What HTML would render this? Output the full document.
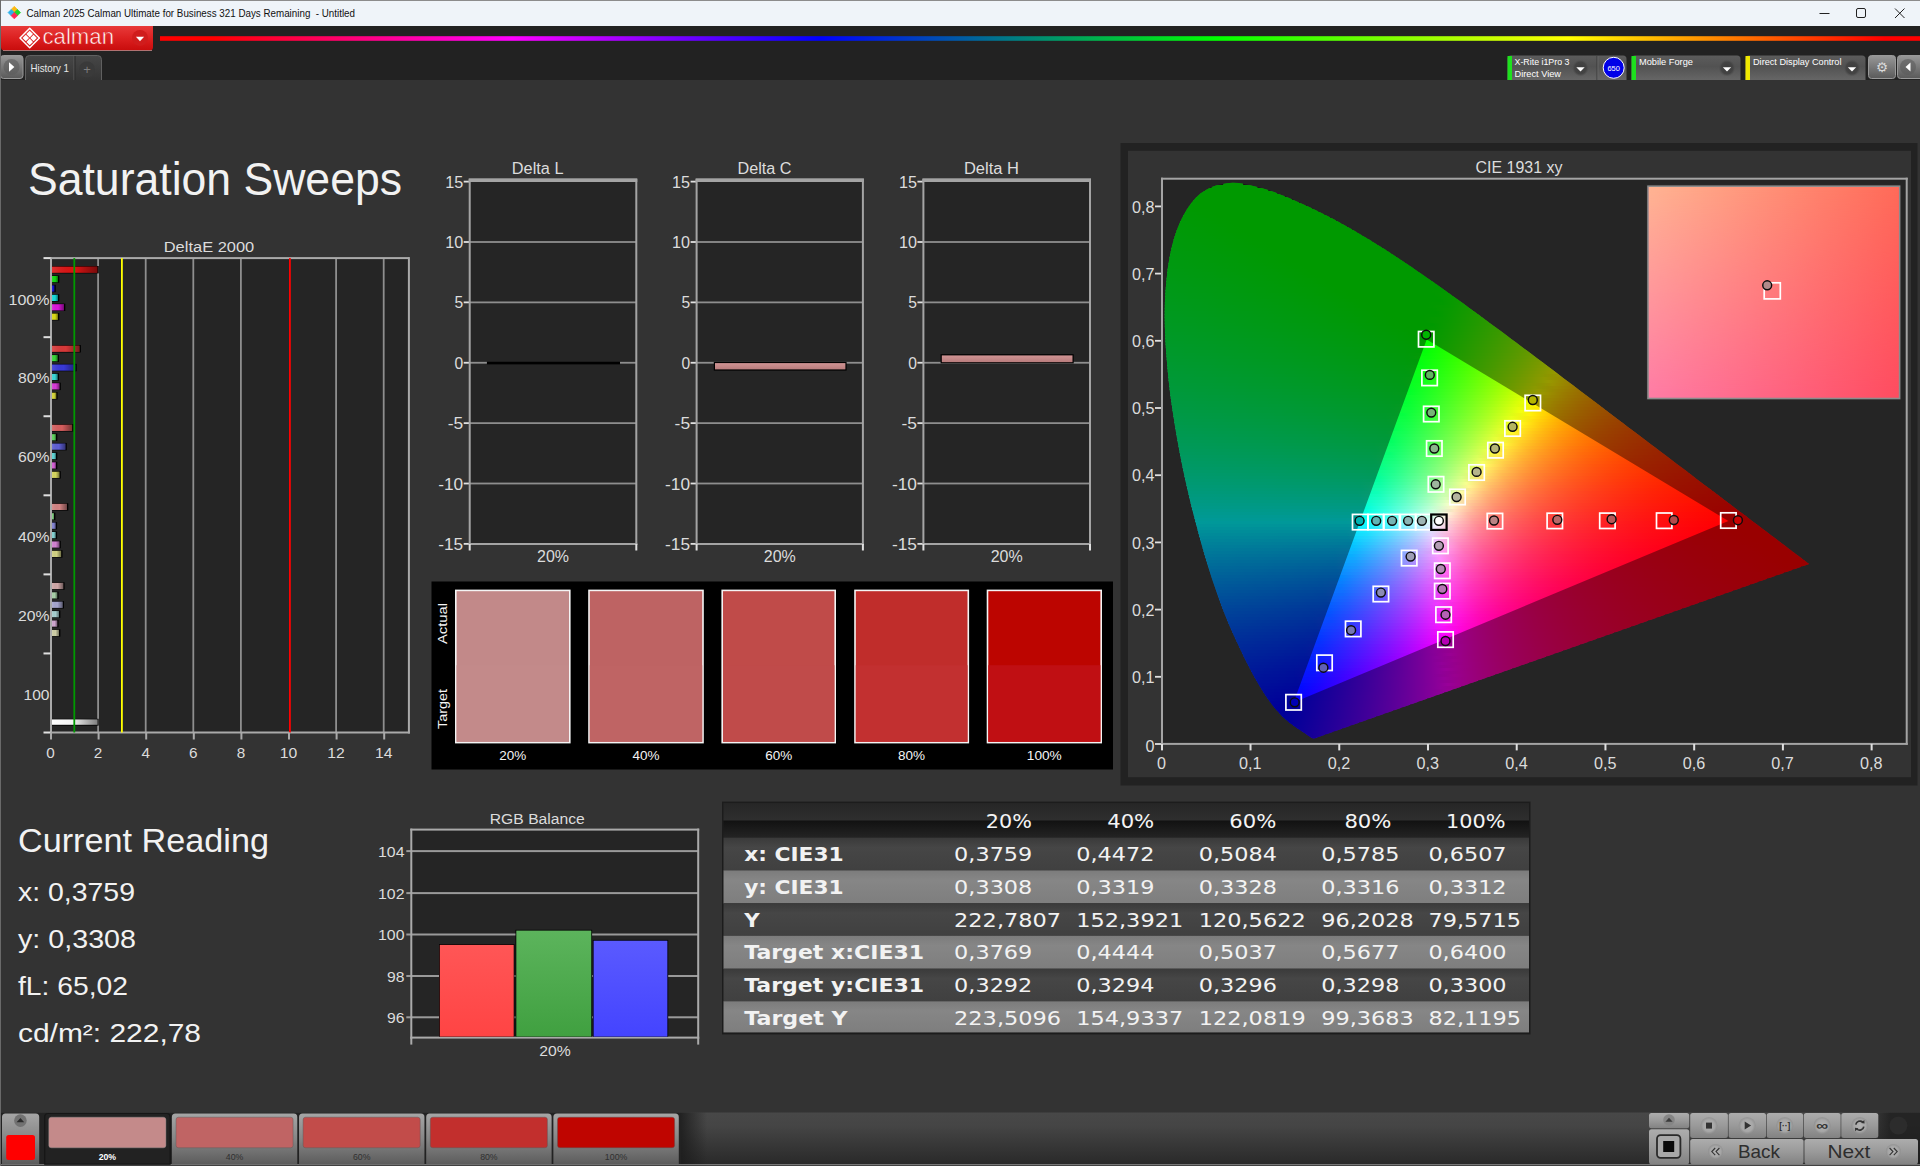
<!DOCTYPE html>
<html><head><meta charset="utf-8"><title>Calman</title>
<style>
html,body{margin:0;padding:0;background:#333;width:1920px;height:1166px;overflow:hidden}
svg{display:block;font-family:"Liberation Sans", "DejaVu Sans", sans-serif}
</style></head><body>
<svg width="1920" height="1166" viewBox="0 0 1920 1166">
<defs>
<linearGradient id="gRed" x1="0" y1="0" x2="0" y2="1"><stop offset="0" stop-color="#e83a3a"/><stop offset="0.5" stop-color="#dc2020"/><stop offset="1" stop-color="#c80c0c"/></linearGradient>
<linearGradient id="gRain" x1="0" y1="0" x2="1" y2="0"><stop offset="0" stop-color="#ff0000"/><stop offset="0.03" stop-color="#ff0000"/><stop offset="0.2" stop-color="#ff00ff"/><stop offset="0.375" stop-color="#0000ff"/><stop offset="0.6" stop-color="#00ff00"/><stop offset="0.8" stop-color="#ffff00"/><stop offset="0.98" stop-color="#ff0000"/><stop offset="1" stop-color="#ff0000"/></linearGradient>
<linearGradient id="gTab" x1="0" y1="0" x2="0" y2="1"><stop offset="0" stop-color="#474747"/><stop offset="1" stop-color="#343434"/></linearGradient>
<linearGradient id="gPanel" x1="0" y1="0" x2="0" y2="1"><stop offset="0" stop-color="#5c5c5c"/><stop offset="0.45" stop-color="#525252"/><stop offset="1" stop-color="#666"/></linearGradient>
<linearGradient id="gBtn" x1="0" y1="0" x2="0" y2="1"><stop offset="0" stop-color="#989898"/><stop offset="1" stop-color="#5a5a5a"/></linearGradient>
<radialGradient id="gDrop"><stop offset="0" stop-color="#3c3c3c"/><stop offset="0.7" stop-color="#444"/><stop offset="1" stop-color="#505050" stop-opacity="0"/></radialGradient>
<linearGradient id="gWhiteBar" x1="0" y1="0" x2="1" y2="0"><stop offset="0" stop-color="#fff"/><stop offset="0.45" stop-color="#f4f4f4"/><stop offset="1" stop-color="#808080"/></linearGradient><linearGradient id="gBarSh" x1="0" y1="0" x2="1" y2="0"><stop offset="0" stop-color="#fff" stop-opacity="0.12"/><stop offset="0.5" stop-color="#000" stop-opacity="0"/><stop offset="1" stop-color="#000" stop-opacity="0.45"/></linearGradient><linearGradient id="gR" x1="0" y1="0" x2="0" y2="1"><stop offset="0" stop-color="#ff5656"/><stop offset="1" stop-color="#ff4444"/></linearGradient><linearGradient id="gG" x1="0" y1="0" x2="0" y2="1"><stop offset="0" stop-color="#5cb45c"/><stop offset="1" stop-color="#40a040"/></linearGradient><linearGradient id="gB" x1="0" y1="0" x2="0" y2="1"><stop offset="0" stop-color="#5a5aff"/><stop offset="1" stop-color="#4444ff"/></linearGradient><linearGradient id="gPink" x1="0" y1="0" x2="0" y2="1"><stop offset="0" stop-color="#d09494"/><stop offset="1" stop-color="#b87c7c"/></linearGradient><clipPath id="locClip"><polygon points="1315.0,738.3 1314.7,738.3 1314.5,738.3 1314.1,738.4 1313.8,738.4 1313.4,738.4 1313.2,738.4 1313.0,738.4 1312.9,738.4 1312.8,738.4 1312.8,738.3 1312.7,738.3 1312.6,738.2 1312.4,738.2 1312.3,738.1 1312.1,738.0 1312.0,738.0 1311.8,737.9 1311.6,737.8 1311.4,737.7 1311.2,737.6 1311.0,737.4 1310.8,737.3 1310.6,737.2 1310.4,737.0 1310.1,736.9 1309.8,736.7 1309.5,736.5 1309.2,736.3 1308.9,736.1 1308.6,735.9 1308.3,735.7 1307.9,735.4 1307.6,735.2 1307.2,734.9 1306.8,734.6 1306.4,734.3 1306.0,734.1 1305.5,733.8 1305.1,733.4 1304.6,733.1 1304.0,732.8 1303.5,732.4 1302.9,732.0 1302.3,731.6 1301.6,731.2 1301.0,730.7 1300.3,730.3 1299.5,729.8 1298.8,729.3 1298.0,728.8 1297.2,728.2 1296.4,727.7 1295.5,727.1 1294.6,726.4 1293.6,725.8 1292.7,725.1 1291.7,724.3 1290.6,723.5 1289.5,722.7 1288.4,721.8 1287.3,720.8 1286.1,719.8 1284.9,718.8 1283.7,717.7 1282.3,716.4 1280.9,714.9 1279.4,713.3 1277.9,711.6 1276.2,709.7 1274.5,707.7 1272.7,705.4 1270.9,702.9 1268.9,700.3 1266.9,697.4 1264.9,694.4 1262.7,691.1 1260.5,687.5 1258.1,683.5 1255.7,679.2 1253.1,674.7 1250.5,669.8 1247.8,664.5 1244.9,658.9 1242.0,652.8 1238.9,646.2 1235.6,639.3 1232.3,632.0 1228.9,624.3 1225.5,616.0 1222.1,607.2 1218.7,597.9 1215.2,588.1 1211.7,577.7 1208.3,566.9 1204.9,555.7 1201.5,544.1 1198.2,531.9 1194.8,519.1 1191.4,506.0 1188.2,492.5 1185.1,478.9 1182.2,465.2 1179.5,451.4 1176.9,437.3 1174.5,423.1 1172.3,408.8 1170.3,394.8 1168.7,381.0 1167.4,367.5 1166.3,354.1 1165.4,340.8 1164.9,327.8 1164.7,315.2 1164.9,303.1 1165.5,291.3 1166.5,279.9 1167.7,268.8 1169.4,258.3 1171.4,248.4 1173.8,239.2 1176.6,230.7 1179.8,222.7 1183.4,215.4 1187.3,208.8 1191.4,202.9 1195.8,197.8 1200.4,193.6 1205.4,190.2 1210.6,187.6 1216.0,185.6 1221.5,184.2 1227.0,183.2 1232.6,182.8 1238.4,183.1 1244.3,184.0 1250.2,185.2 1256.2,186.7 1262.2,188.3 1268.1,190.0 1274.1,192.1 1280.1,194.4 1286.1,196.8 1292.0,199.3 1297.9,201.9 1303.6,204.4 1309.3,207.0 1314.9,209.7 1320.5,212.5 1326.0,215.3 1331.5,218.1 1337.0,221.0 1342.4,224.0 1347.8,227.0 1353.2,230.1 1358.5,233.2 1363.9,236.4 1369.2,239.6 1374.6,242.9 1379.9,246.3 1385.2,249.6 1390.5,253.1 1395.8,256.5 1401.1,260.0 1406.3,263.5 1411.6,267.1 1416.8,270.7 1422.1,274.3 1427.3,277.9 1432.6,281.6 1437.8,285.3 1443.1,289.0 1448.3,292.8 1453.5,296.5 1458.8,300.3 1464.1,304.1 1469.3,307.9 1474.6,311.8 1479.8,315.6 1485.1,319.5 1490.4,323.4 1495.6,327.2 1500.8,331.1 1506.1,335.0 1511.3,338.9 1516.5,342.8 1521.7,346.7 1526.9,350.6 1532.2,354.5 1537.4,358.4 1542.6,362.3 1547.8,366.2 1552.9,370.1 1558.1,374.0 1563.2,377.9 1568.3,381.7 1573.4,385.6 1578.5,389.4 1583.5,393.2 1588.5,397.0 1593.5,400.8 1598.5,404.6 1603.4,408.3 1608.3,412.0 1613.2,415.7 1618.1,419.4 1622.9,423.0 1627.6,426.7 1632.4,430.2 1637.1,433.8 1641.7,437.3 1646.3,440.8 1650.8,444.2 1655.3,447.6 1659.8,451.0 1664.2,454.3 1668.5,457.5 1672.7,460.7 1676.9,463.9 1681.0,467.1 1685.1,470.1 1689.0,473.1 1692.9,476.1 1696.6,478.9 1700.3,481.7 1703.9,484.4 1707.4,487.0 1710.8,489.6 1714.1,492.1 1717.4,494.6 1720.7,497.1 1723.8,499.5 1726.9,501.8 1729.9,504.1 1732.8,506.3 1735.6,508.4 1738.3,510.4 1741.0,512.4 1743.5,514.3 1746.0,516.1 1748.3,517.9 1750.6,519.7 1752.8,521.4 1755.0,523.0 1757.0,524.5 1759.0,526.1 1760.9,527.5 1762.8,528.9 1764.6,530.3 1766.3,531.6 1767.9,532.8 1769.5,534.0 1771.0,535.2 1772.5,536.3 1773.9,537.3 1775.2,538.3 1776.5,539.3 1777.8,540.3 1779.0,541.2 1780.2,542.1 1781.3,542.9 1782.4,543.7 1783.4,544.5 1784.5,545.3 1785.4,546.1 1786.4,546.8 1787.3,547.5 1788.3,548.2 1789.1,548.9 1790.0,549.5 1790.8,550.2 1791.6,550.8 1792.4,551.4 1793.1,551.9 1793.9,552.5 1794.6,553.0 1795.2,553.5 1795.9,554.0 1796.5,554.5 1797.1,554.9 1797.7,555.3 1798.2,555.7 1798.8,556.1 1799.3,556.5 1799.7,556.8 1800.2,557.2 1800.6,557.5 1801.0,557.8 1801.4,558.1 1801.8,558.4 1802.1,558.7 1802.5,558.9 1802.8,559.2 1803.1,559.4 1803.4,559.7 1803.7,559.9 1804.0,560.1 1804.2,560.3 1804.5,560.5 1804.7,560.6 1804.9,560.8 1805.1,561.0 1805.3,561.1 1805.5,561.2 1805.6,561.3 1805.7,561.4 1805.9,561.5 1806.0,561.7 1806.2,561.8 1806.3,561.9 1806.4,562.0 1806.6,562.1 1806.7,562.1 1806.8,562.2 1806.9,562.3 1807.0,562.4 1807.1,562.5 1807.2,562.5 1807.3,562.6 1807.4,562.7 1807.5,562.8 1807.6,562.9 1807.7,562.9 1807.8,563.0 1807.9,563.1 1808.0,563.2 1808.1,563.2 1808.2,563.3 1808.3,563.4 1808.4,563.4 1808.4,563.5 1808.5,563.5 1808.6,563.6 1808.6,563.6 1808.7,563.7 1808.8,563.7 1808.8,563.8 1808.8,563.8 1808.9,563.8 1808.9,563.8 1808.9,563.9 1809.0,563.9 1809.0,563.9 1809.0,563.9 1809.0,563.9 1809.0,563.9 1809.0,563.9 1809.1,563.9 1809.1,564.0"/></clipPath>
<linearGradient id="c0" gradientUnits="userSpaceOnUse" x1="1223.1" x2="1243.2" y1="0" y2="0"><stop offset="0.000" stop-color="#00ff00"/><stop offset="1.000" stop-color="#00ff00"/></linearGradient>
<linearGradient id="c1" gradientUnits="userSpaceOnUse" x1="1211.5" x2="1257.4" y1="0" y2="0"><stop offset="0.000" stop-color="#00ff00"/><stop offset="1.000" stop-color="#00ff00"/></linearGradient>
<linearGradient id="c2" gradientUnits="userSpaceOnUse" x1="1204.7" x2="1268.4" y1="0" y2="0"><stop offset="0.000" stop-color="#00ff00"/><stop offset="1.000" stop-color="#00ff00"/></linearGradient>
<linearGradient id="c3" gradientUnits="userSpaceOnUse" x1="1200.0" x2="1277.2" y1="0" y2="0"><stop offset="0.000" stop-color="#00ff00"/><stop offset="1.000" stop-color="#00ff00"/></linearGradient>
<linearGradient id="c4" gradientUnits="userSpaceOnUse" x1="1196.3" x2="1284.9" y1="0" y2="0"><stop offset="0.000" stop-color="#00ff00"/><stop offset="1.000" stop-color="#00ff00"/></linearGradient>
<linearGradient id="c5" gradientUnits="userSpaceOnUse" x1="1193.2" x2="1292.0" y1="0" y2="0"><stop offset="0.000" stop-color="#00ff00"/><stop offset="1.000" stop-color="#00ff00"/></linearGradient>
<linearGradient id="c6" gradientUnits="userSpaceOnUse" x1="1190.6" x2="1299.0" y1="0" y2="0"><stop offset="0.000" stop-color="#00ff01"/><stop offset="0.200" stop-color="#00ff00"/><stop offset="1.000" stop-color="#00ff00"/></linearGradient>
<linearGradient id="c7" gradientUnits="userSpaceOnUse" x1="1188.3" x2="1305.8" y1="0" y2="0"><stop offset="0.000" stop-color="#00ff03"/><stop offset="0.167" stop-color="#00ff00"/><stop offset="1.000" stop-color="#00ff00"/></linearGradient>
<linearGradient id="c8" gradientUnits="userSpaceOnUse" x1="1186.2" x2="1312.3" y1="0" y2="0"><stop offset="0.000" stop-color="#00ff04"/><stop offset="0.167" stop-color="#00ff00"/><stop offset="1.000" stop-color="#00ff00"/></linearGradient>
<linearGradient id="c9" gradientUnits="userSpaceOnUse" x1="1184.2" x2="1318.5" y1="0" y2="0"><stop offset="0.000" stop-color="#00ff05"/><stop offset="0.143" stop-color="#00ff02"/><stop offset="0.286" stop-color="#00ff00"/><stop offset="1.000" stop-color="#00ff00"/></linearGradient>
<linearGradient id="c10" gradientUnits="userSpaceOnUse" x1="1182.5" x2="1324.5" y1="0" y2="0"><stop offset="0.000" stop-color="#00ff07"/><stop offset="0.143" stop-color="#00ff03"/><stop offset="0.286" stop-color="#00ff00"/><stop offset="1.000" stop-color="#00ff00"/></linearGradient>
<linearGradient id="c11" gradientUnits="userSpaceOnUse" x1="1180.8" x2="1330.4" y1="0" y2="0"><stop offset="0.000" stop-color="#00ff08"/><stop offset="0.143" stop-color="#00ff04"/><stop offset="0.286" stop-color="#00ff00"/><stop offset="1.000" stop-color="#00ff00"/></linearGradient>
<linearGradient id="c12" gradientUnits="userSpaceOnUse" x1="1179.4" x2="1336.1" y1="0" y2="0"><stop offset="0.000" stop-color="#00ff09"/><stop offset="0.125" stop-color="#00ff06"/><stop offset="0.250" stop-color="#00ff02"/><stop offset="0.375" stop-color="#00ff00"/><stop offset="1.000" stop-color="#00ff00"/></linearGradient>
<linearGradient id="c13" gradientUnits="userSpaceOnUse" x1="1177.9" x2="1341.7" y1="0" y2="0"><stop offset="0.000" stop-color="#00ff0b"/><stop offset="0.125" stop-color="#00ff07"/><stop offset="0.250" stop-color="#00ff03"/><stop offset="0.375" stop-color="#00ff00"/><stop offset="1.000" stop-color="#00ff00"/></linearGradient>
<linearGradient id="c14" gradientUnits="userSpaceOnUse" x1="1176.6" x2="1347.1" y1="0" y2="0"><stop offset="0.000" stop-color="#00ff0c"/><stop offset="0.125" stop-color="#00ff08"/><stop offset="0.250" stop-color="#00ff04"/><stop offset="0.375" stop-color="#00ff00"/><stop offset="1.000" stop-color="#00ff00"/></linearGradient>
<linearGradient id="c15" gradientUnits="userSpaceOnUse" x1="1175.4" x2="1352.4" y1="0" y2="0"><stop offset="0.000" stop-color="#00ff0d"/><stop offset="0.111" stop-color="#00ff0a"/><stop offset="0.222" stop-color="#00ff06"/><stop offset="0.333" stop-color="#00ff02"/><stop offset="0.444" stop-color="#00ff00"/><stop offset="1.000" stop-color="#00ff00"/></linearGradient>
<linearGradient id="c16" gradientUnits="userSpaceOnUse" x1="1174.3" x2="1357.5" y1="0" y2="0"><stop offset="0.000" stop-color="#00ff0f"/><stop offset="0.111" stop-color="#00ff0b"/><stop offset="0.222" stop-color="#00ff07"/><stop offset="0.333" stop-color="#00ff02"/><stop offset="0.444" stop-color="#00ff00"/><stop offset="1.000" stop-color="#00ff00"/></linearGradient>
<linearGradient id="c17" gradientUnits="userSpaceOnUse" x1="1173.3" x2="1362.6" y1="0" y2="0"><stop offset="0.000" stop-color="#00ff10"/><stop offset="0.111" stop-color="#00ff0c"/><stop offset="0.222" stop-color="#00ff08"/><stop offset="0.333" stop-color="#00ff03"/><stop offset="0.444" stop-color="#00ff00"/><stop offset="1.000" stop-color="#00ff00"/></linearGradient>
<linearGradient id="c18" gradientUnits="userSpaceOnUse" x1="1172.3" x2="1367.7" y1="0" y2="0"><stop offset="0.000" stop-color="#00ff11"/><stop offset="0.111" stop-color="#00ff0d"/><stop offset="0.222" stop-color="#00ff09"/><stop offset="0.333" stop-color="#00ff04"/><stop offset="0.444" stop-color="#00ff00"/><stop offset="1.000" stop-color="#00ff00"/></linearGradient>
<linearGradient id="c19" gradientUnits="userSpaceOnUse" x1="1171.4" x2="1372.6" y1="0" y2="0"><stop offset="0.000" stop-color="#00ff13"/><stop offset="0.100" stop-color="#00ff0f"/><stop offset="0.200" stop-color="#00ff0b"/><stop offset="0.300" stop-color="#00ff07"/><stop offset="0.400" stop-color="#00ff02"/><stop offset="0.500" stop-color="#00ff00"/><stop offset="1.000" stop-color="#00ff00"/></linearGradient>
<linearGradient id="c20" gradientUnits="userSpaceOnUse" x1="1170.6" x2="1377.5" y1="0" y2="0"><stop offset="0.000" stop-color="#00ff14"/><stop offset="0.100" stop-color="#00ff10"/><stop offset="0.200" stop-color="#00ff0c"/><stop offset="0.300" stop-color="#00ff07"/><stop offset="0.400" stop-color="#00ff03"/><stop offset="0.500" stop-color="#00ff00"/><stop offset="1.000" stop-color="#00ff00"/></linearGradient>
<linearGradient id="c21" gradientUnits="userSpaceOnUse" x1="1169.9" x2="1382.2" y1="0" y2="0"><stop offset="0.000" stop-color="#00ff15"/><stop offset="0.100" stop-color="#00ff11"/><stop offset="0.200" stop-color="#00ff0d"/><stop offset="0.300" stop-color="#00ff08"/><stop offset="0.400" stop-color="#00ff04"/><stop offset="0.500" stop-color="#00ff00"/><stop offset="1.000" stop-color="#00ff00"/></linearGradient>
<linearGradient id="c22" gradientUnits="userSpaceOnUse" x1="1169.1" x2="1386.9" y1="0" y2="0"><stop offset="0.000" stop-color="#00ff16"/><stop offset="0.100" stop-color="#00ff12"/><stop offset="0.200" stop-color="#00ff0e"/><stop offset="0.300" stop-color="#00ff09"/><stop offset="0.400" stop-color="#00ff05"/><stop offset="0.500" stop-color="#00ff00"/><stop offset="1.000" stop-color="#00ff00"/></linearGradient>
<linearGradient id="c23" gradientUnits="userSpaceOnUse" x1="1168.5" x2="1391.6" y1="0" y2="0"><stop offset="0.000" stop-color="#00ff18"/><stop offset="0.091" stop-color="#00ff14"/><stop offset="0.182" stop-color="#00ff10"/><stop offset="0.273" stop-color="#00ff0c"/><stop offset="0.364" stop-color="#00ff07"/><stop offset="0.455" stop-color="#00ff03"/><stop offset="0.545" stop-color="#00ff00"/><stop offset="1.000" stop-color="#00ff00"/></linearGradient>
<linearGradient id="c24" gradientUnits="userSpaceOnUse" x1="1167.9" x2="1396.2" y1="0" y2="0"><stop offset="0.000" stop-color="#00ff19"/><stop offset="0.091" stop-color="#00ff15"/><stop offset="0.182" stop-color="#00ff11"/><stop offset="0.273" stop-color="#00ff0d"/><stop offset="0.364" stop-color="#00ff08"/><stop offset="0.455" stop-color="#00ff04"/><stop offset="0.545" stop-color="#00ff00"/><stop offset="1.000" stop-color="#00ff00"/></linearGradient>
<linearGradient id="c25" gradientUnits="userSpaceOnUse" x1="1167.3" x2="1400.8" y1="0" y2="0"><stop offset="0.000" stop-color="#00ff1a"/><stop offset="0.091" stop-color="#00ff16"/><stop offset="0.182" stop-color="#00ff12"/><stop offset="0.273" stop-color="#00ff0e"/><stop offset="0.364" stop-color="#00ff09"/><stop offset="0.455" stop-color="#00ff04"/><stop offset="0.545" stop-color="#00ff00"/><stop offset="1.000" stop-color="#00ff00"/></linearGradient>
<linearGradient id="c26" gradientUnits="userSpaceOnUse" x1="1166.9" x2="1405.3" y1="0" y2="0"><stop offset="0.000" stop-color="#00ff1c"/><stop offset="0.091" stop-color="#00ff18"/><stop offset="0.182" stop-color="#00ff13"/><stop offset="0.273" stop-color="#00ff0f"/><stop offset="0.364" stop-color="#00ff0a"/><stop offset="0.455" stop-color="#00ff05"/><stop offset="0.545" stop-color="#00ff00"/><stop offset="1.000" stop-color="#00ff00"/></linearGradient>
<linearGradient id="c27" gradientUnits="userSpaceOnUse" x1="1166.4" x2="1409.8" y1="0" y2="0"><stop offset="0.000" stop-color="#00ff1d"/><stop offset="0.083" stop-color="#00ff19"/><stop offset="0.167" stop-color="#00ff15"/><stop offset="0.250" stop-color="#00ff11"/><stop offset="0.333" stop-color="#00ff0d"/><stop offset="0.417" stop-color="#00ff08"/><stop offset="0.500" stop-color="#00ff03"/><stop offset="0.583" stop-color="#00ff00"/><stop offset="1.000" stop-color="#00ff00"/></linearGradient>
<linearGradient id="c28" gradientUnits="userSpaceOnUse" x1="1165.9" x2="1414.2" y1="0" y2="0"><stop offset="0.000" stop-color="#00ff1e"/><stop offset="0.083" stop-color="#00ff1a"/><stop offset="0.167" stop-color="#00ff16"/><stop offset="0.250" stop-color="#00ff12"/><stop offset="0.333" stop-color="#00ff0e"/><stop offset="0.417" stop-color="#00ff09"/><stop offset="0.500" stop-color="#00ff04"/><stop offset="0.583" stop-color="#00ff00"/><stop offset="1.000" stop-color="#00ff00"/></linearGradient>
<linearGradient id="c29" gradientUnits="userSpaceOnUse" x1="1165.5" x2="1418.6" y1="0" y2="0"><stop offset="0.000" stop-color="#00ff20"/><stop offset="0.083" stop-color="#00ff1c"/><stop offset="0.167" stop-color="#00ff17"/><stop offset="0.250" stop-color="#00ff13"/><stop offset="0.333" stop-color="#00ff0e"/><stop offset="0.417" stop-color="#00ff0a"/><stop offset="0.500" stop-color="#00ff05"/><stop offset="0.583" stop-color="#00ff00"/><stop offset="1.000" stop-color="#00ff00"/></linearGradient>
<linearGradient id="c30" gradientUnits="userSpaceOnUse" x1="1165.2" x2="1422.9" y1="0" y2="0"><stop offset="0.000" stop-color="#00ff21"/><stop offset="0.083" stop-color="#00ff1d"/><stop offset="0.167" stop-color="#00ff19"/><stop offset="0.250" stop-color="#00ff14"/><stop offset="0.333" stop-color="#00ff10"/><stop offset="0.417" stop-color="#00ff0b"/><stop offset="0.500" stop-color="#00ff06"/><stop offset="0.583" stop-color="#00ff00"/><stop offset="1.000" stop-color="#00ff00"/></linearGradient>
<linearGradient id="c31" gradientUnits="userSpaceOnUse" x1="1164.8" x2="1427.2" y1="0" y2="0"><stop offset="0.000" stop-color="#00ff22"/><stop offset="0.083" stop-color="#00ff1e"/><stop offset="0.167" stop-color="#00ff1a"/><stop offset="0.250" stop-color="#00ff15"/><stop offset="0.333" stop-color="#00ff11"/><stop offset="0.417" stop-color="#00ff0c"/><stop offset="0.500" stop-color="#00ff06"/><stop offset="0.583" stop-color="#00ff01"/><stop offset="0.667" stop-color="#00ff00"/><stop offset="1.000" stop-color="#00ff00"/></linearGradient>
<linearGradient id="c32" gradientUnits="userSpaceOnUse" x1="1164.5" x2="1431.6" y1="0" y2="0"><stop offset="0.000" stop-color="#00ff24"/><stop offset="0.077" stop-color="#00ff20"/><stop offset="0.154" stop-color="#00ff1c"/><stop offset="0.231" stop-color="#00ff18"/><stop offset="0.308" stop-color="#00ff13"/><stop offset="0.385" stop-color="#00ff0e"/><stop offset="0.462" stop-color="#00ff0a"/><stop offset="0.538" stop-color="#00ff05"/><stop offset="0.615" stop-color="#00ff00"/><stop offset="1.000" stop-color="#00ff00"/></linearGradient>
<linearGradient id="c33" gradientUnits="userSpaceOnUse" x1="1164.2" x2="1435.8" y1="0" y2="0"><stop offset="0.000" stop-color="#00ff25"/><stop offset="0.077" stop-color="#00ff21"/><stop offset="0.154" stop-color="#00ff1d"/><stop offset="0.231" stop-color="#00ff19"/><stop offset="0.308" stop-color="#00ff14"/><stop offset="0.385" stop-color="#00ff0f"/><stop offset="0.462" stop-color="#00ff0b"/><stop offset="0.538" stop-color="#00ff05"/><stop offset="0.615" stop-color="#00ff00"/><stop offset="1.000" stop-color="#00ff00"/></linearGradient>
<linearGradient id="c34" gradientUnits="userSpaceOnUse" x1="1164.0" x2="1440.1" y1="0" y2="0"><stop offset="0.000" stop-color="#00ff27"/><stop offset="0.077" stop-color="#00ff23"/><stop offset="0.154" stop-color="#00ff1e"/><stop offset="0.231" stop-color="#00ff1a"/><stop offset="0.308" stop-color="#00ff15"/><stop offset="0.385" stop-color="#00ff10"/><stop offset="0.462" stop-color="#00ff0b"/><stop offset="0.538" stop-color="#00ff06"/><stop offset="0.615" stop-color="#00ff01"/><stop offset="0.692" stop-color="#00ff00"/><stop offset="1.000" stop-color="#00ff00"/></linearGradient>
<linearGradient id="c35" gradientUnits="userSpaceOnUse" x1="1163.8" x2="1444.3" y1="0" y2="0"><stop offset="0.000" stop-color="#00ff28"/><stop offset="0.077" stop-color="#00ff24"/><stop offset="0.154" stop-color="#00ff20"/><stop offset="0.231" stop-color="#00ff1b"/><stop offset="0.308" stop-color="#00ff16"/><stop offset="0.385" stop-color="#00ff11"/><stop offset="0.462" stop-color="#00ff0c"/><stop offset="0.538" stop-color="#00ff07"/><stop offset="0.615" stop-color="#00ff01"/><stop offset="0.692" stop-color="#00ff00"/><stop offset="1.000" stop-color="#00ff00"/></linearGradient>
<linearGradient id="c36" gradientUnits="userSpaceOnUse" x1="1163.5" x2="1448.5" y1="0" y2="0"><stop offset="0.000" stop-color="#00ff2a"/><stop offset="0.077" stop-color="#00ff25"/><stop offset="0.154" stop-color="#00ff21"/><stop offset="0.231" stop-color="#00ff1c"/><stop offset="0.308" stop-color="#00ff17"/><stop offset="0.385" stop-color="#00ff12"/><stop offset="0.462" stop-color="#00ff0d"/><stop offset="0.538" stop-color="#00ff08"/><stop offset="0.615" stop-color="#00ff02"/><stop offset="0.692" stop-color="#00ff00"/><stop offset="0.923" stop-color="#00ff00"/><stop offset="1.000" stop-color="#05ff00"/></linearGradient>
<linearGradient id="c37" gradientUnits="userSpaceOnUse" x1="1163.4" x2="1452.7" y1="0" y2="0"><stop offset="0.000" stop-color="#00ff2b"/><stop offset="0.071" stop-color="#00ff27"/><stop offset="0.143" stop-color="#00ff23"/><stop offset="0.214" stop-color="#00ff1f"/><stop offset="0.286" stop-color="#00ff1a"/><stop offset="0.357" stop-color="#00ff15"/><stop offset="0.429" stop-color="#00ff11"/><stop offset="0.500" stop-color="#00ff0b"/><stop offset="0.571" stop-color="#00ff06"/><stop offset="0.643" stop-color="#00ff01"/><stop offset="0.714" stop-color="#00ff00"/><stop offset="0.929" stop-color="#00ff00"/><stop offset="1.000" stop-color="#0bff00"/></linearGradient>
<linearGradient id="c38" gradientUnits="userSpaceOnUse" x1="1163.2" x2="1456.9" y1="0" y2="0"><stop offset="0.000" stop-color="#00ff2c"/><stop offset="0.071" stop-color="#00ff28"/><stop offset="0.143" stop-color="#00ff24"/><stop offset="0.214" stop-color="#00ff20"/><stop offset="0.286" stop-color="#00ff1b"/><stop offset="0.357" stop-color="#00ff16"/><stop offset="0.429" stop-color="#00ff12"/><stop offset="0.500" stop-color="#00ff0c"/><stop offset="0.571" stop-color="#00ff07"/><stop offset="0.643" stop-color="#00ff01"/><stop offset="0.714" stop-color="#00ff00"/><stop offset="0.929" stop-color="#00ff00"/><stop offset="1.000" stop-color="#11ff00"/></linearGradient>
<linearGradient id="c39" gradientUnits="userSpaceOnUse" x1="1163.1" x2="1461.0" y1="0" y2="0"><stop offset="0.000" stop-color="#00ff2e"/><stop offset="0.071" stop-color="#00ff2a"/><stop offset="0.143" stop-color="#00ff26"/><stop offset="0.214" stop-color="#00ff21"/><stop offset="0.286" stop-color="#00ff1c"/><stop offset="0.357" stop-color="#00ff18"/><stop offset="0.429" stop-color="#00ff13"/><stop offset="0.500" stop-color="#00ff0d"/><stop offset="0.571" stop-color="#00ff08"/><stop offset="0.643" stop-color="#00ff02"/><stop offset="0.714" stop-color="#00ff00"/><stop offset="0.929" stop-color="#00ff00"/><stop offset="1.000" stop-color="#18ff00"/></linearGradient>
<linearGradient id="c40" gradientUnits="userSpaceOnUse" x1="1162.9" x2="1465.2" y1="0" y2="0"><stop offset="0.000" stop-color="#00ff2f"/><stop offset="0.071" stop-color="#00ff2b"/><stop offset="0.143" stop-color="#00ff27"/><stop offset="0.214" stop-color="#00ff22"/><stop offset="0.286" stop-color="#00ff1e"/><stop offset="0.357" stop-color="#00ff19"/><stop offset="0.429" stop-color="#00ff14"/><stop offset="0.500" stop-color="#00ff0e"/><stop offset="0.571" stop-color="#00ff09"/><stop offset="0.643" stop-color="#00ff03"/><stop offset="0.714" stop-color="#00ff00"/><stop offset="0.857" stop-color="#00ff00"/><stop offset="0.929" stop-color="#04ff00"/><stop offset="1.000" stop-color="#1eff00"/></linearGradient>
<linearGradient id="c41" gradientUnits="userSpaceOnUse" x1="1162.9" x2="1469.3" y1="0" y2="0"><stop offset="0.000" stop-color="#00ff31"/><stop offset="0.071" stop-color="#00ff2d"/><stop offset="0.143" stop-color="#00ff28"/><stop offset="0.214" stop-color="#00ff24"/><stop offset="0.286" stop-color="#00ff1f"/><stop offset="0.357" stop-color="#00ff1a"/><stop offset="0.429" stop-color="#00ff15"/><stop offset="0.500" stop-color="#00ff0f"/><stop offset="0.571" stop-color="#00ff09"/><stop offset="0.643" stop-color="#00ff03"/><stop offset="0.714" stop-color="#00ff00"/><stop offset="0.857" stop-color="#00ff00"/><stop offset="0.929" stop-color="#0aff00"/><stop offset="1.000" stop-color="#25ff00"/></linearGradient>
<linearGradient id="c42" gradientUnits="userSpaceOnUse" x1="1162.8" x2="1473.5" y1="0" y2="0"><stop offset="0.000" stop-color="#00ff32"/><stop offset="0.067" stop-color="#00ff2e"/><stop offset="0.133" stop-color="#00ff2a"/><stop offset="0.200" stop-color="#00ff26"/><stop offset="0.267" stop-color="#00ff21"/><stop offset="0.333" stop-color="#00ff1d"/><stop offset="0.400" stop-color="#00ff18"/><stop offset="0.467" stop-color="#00ff13"/><stop offset="0.533" stop-color="#00ff0d"/><stop offset="0.600" stop-color="#00ff08"/><stop offset="0.667" stop-color="#00ff02"/><stop offset="0.733" stop-color="#00ff00"/><stop offset="0.867" stop-color="#00ff00"/><stop offset="0.933" stop-color="#12ff00"/><stop offset="1.000" stop-color="#2cff00"/></linearGradient>
<linearGradient id="c43" gradientUnits="userSpaceOnUse" x1="1162.8" x2="1477.6" y1="0" y2="0"><stop offset="0.000" stop-color="#00ff34"/><stop offset="0.067" stop-color="#00ff30"/><stop offset="0.133" stop-color="#00ff2c"/><stop offset="0.200" stop-color="#00ff27"/><stop offset="0.267" stop-color="#00ff23"/><stop offset="0.333" stop-color="#00ff1e"/><stop offset="0.400" stop-color="#00ff19"/><stop offset="0.467" stop-color="#00ff14"/><stop offset="0.533" stop-color="#00ff0e"/><stop offset="0.600" stop-color="#00ff09"/><stop offset="0.667" stop-color="#00ff03"/><stop offset="0.733" stop-color="#00ff00"/><stop offset="0.867" stop-color="#00ff00"/><stop offset="0.933" stop-color="#18ff00"/><stop offset="1.000" stop-color="#33ff00"/></linearGradient>
<linearGradient id="c44" gradientUnits="userSpaceOnUse" x1="1162.7" x2="1481.7" y1="0" y2="0"><stop offset="0.000" stop-color="#00ff35"/><stop offset="0.067" stop-color="#00ff31"/><stop offset="0.133" stop-color="#00ff2d"/><stop offset="0.200" stop-color="#00ff29"/><stop offset="0.267" stop-color="#00ff24"/><stop offset="0.333" stop-color="#00ff1f"/><stop offset="0.400" stop-color="#00ff1a"/><stop offset="0.467" stop-color="#00ff15"/><stop offset="0.533" stop-color="#00ff0f"/><stop offset="0.600" stop-color="#00ff09"/><stop offset="0.667" stop-color="#00ff03"/><stop offset="0.733" stop-color="#00ff00"/><stop offset="0.800" stop-color="#00ff00"/><stop offset="0.867" stop-color="#04ff00"/><stop offset="0.933" stop-color="#1fff00"/><stop offset="1.000" stop-color="#3bff00"/></linearGradient>
<linearGradient id="c45" gradientUnits="userSpaceOnUse" x1="1162.8" x2="1485.7" y1="0" y2="0"><stop offset="0.000" stop-color="#00ff37"/><stop offset="0.067" stop-color="#00ff33"/><stop offset="0.133" stop-color="#00ff2f"/><stop offset="0.200" stop-color="#00ff2a"/><stop offset="0.267" stop-color="#00ff25"/><stop offset="0.333" stop-color="#00ff20"/><stop offset="0.400" stop-color="#00ff1b"/><stop offset="0.467" stop-color="#00ff16"/><stop offset="0.533" stop-color="#00ff10"/><stop offset="0.600" stop-color="#00ff0a"/><stop offset="0.667" stop-color="#00ff04"/><stop offset="0.733" stop-color="#00ff00"/><stop offset="0.800" stop-color="#00ff00"/><stop offset="0.867" stop-color="#0aff00"/><stop offset="0.933" stop-color="#25ff00"/><stop offset="1.000" stop-color="#43ff00"/></linearGradient>
<linearGradient id="c46" gradientUnits="userSpaceOnUse" x1="1162.8" x2="1489.8" y1="0" y2="0"><stop offset="0.000" stop-color="#00ff39"/><stop offset="0.067" stop-color="#00ff34"/><stop offset="0.133" stop-color="#00ff30"/><stop offset="0.200" stop-color="#00ff2b"/><stop offset="0.267" stop-color="#00ff27"/><stop offset="0.333" stop-color="#00ff22"/><stop offset="0.400" stop-color="#00ff1c"/><stop offset="0.467" stop-color="#00ff17"/><stop offset="0.533" stop-color="#00ff11"/><stop offset="0.600" stop-color="#00ff0b"/><stop offset="0.667" stop-color="#00ff05"/><stop offset="0.733" stop-color="#00ff00"/><stop offset="0.800" stop-color="#00ff00"/><stop offset="0.867" stop-color="#10ff00"/><stop offset="0.933" stop-color="#2cff00"/><stop offset="1.000" stop-color="#4aff00"/></linearGradient>
<linearGradient id="c47" gradientUnits="userSpaceOnUse" x1="1162.9" x2="1493.9" y1="0" y2="0"><stop offset="0.000" stop-color="#00ff3a"/><stop offset="0.062" stop-color="#00ff36"/><stop offset="0.125" stop-color="#00ff32"/><stop offset="0.188" stop-color="#00ff2e"/><stop offset="0.250" stop-color="#00ff29"/><stop offset="0.312" stop-color="#00ff25"/><stop offset="0.375" stop-color="#00ff20"/><stop offset="0.438" stop-color="#00ff1b"/><stop offset="0.500" stop-color="#00ff15"/><stop offset="0.562" stop-color="#00ff10"/><stop offset="0.625" stop-color="#00ff0a"/><stop offset="0.688" stop-color="#00ff03"/><stop offset="0.750" stop-color="#00ff00"/><stop offset="0.812" stop-color="#00ff00"/><stop offset="0.875" stop-color="#1aff00"/><stop offset="0.938" stop-color="#35ff00"/><stop offset="1.000" stop-color="#52ff00"/></linearGradient>
<linearGradient id="c48" gradientUnits="userSpaceOnUse" x1="1162.9" x2="1497.9" y1="0" y2="0"><stop offset="0.000" stop-color="#00ff3c"/><stop offset="0.062" stop-color="#00ff38"/><stop offset="0.125" stop-color="#00ff34"/><stop offset="0.188" stop-color="#00ff2f"/><stop offset="0.250" stop-color="#00ff2b"/><stop offset="0.312" stop-color="#00ff26"/><stop offset="0.375" stop-color="#00ff21"/><stop offset="0.438" stop-color="#00ff1c"/><stop offset="0.500" stop-color="#00ff16"/><stop offset="0.562" stop-color="#00ff11"/><stop offset="0.625" stop-color="#00ff0b"/><stop offset="0.688" stop-color="#00ff04"/><stop offset="0.750" stop-color="#00ff00"/><stop offset="0.812" stop-color="#05ff00"/><stop offset="0.875" stop-color="#20ff00"/><stop offset="0.938" stop-color="#3dff00"/><stop offset="1.000" stop-color="#5bff00"/></linearGradient>
<linearGradient id="c49" gradientUnits="userSpaceOnUse" x1="1163.0" x2="1502.0" y1="0" y2="0"><stop offset="0.000" stop-color="#00ff3d"/><stop offset="0.062" stop-color="#00ff39"/><stop offset="0.125" stop-color="#00ff35"/><stop offset="0.188" stop-color="#00ff31"/><stop offset="0.250" stop-color="#00ff2c"/><stop offset="0.312" stop-color="#00ff27"/><stop offset="0.375" stop-color="#00ff22"/><stop offset="0.438" stop-color="#00ff1d"/><stop offset="0.500" stop-color="#00ff17"/><stop offset="0.562" stop-color="#00ff12"/><stop offset="0.625" stop-color="#00ff0b"/><stop offset="0.688" stop-color="#00ff05"/><stop offset="0.750" stop-color="#00ff00"/><stop offset="0.812" stop-color="#0bff00"/><stop offset="0.875" stop-color="#26ff00"/><stop offset="0.938" stop-color="#44ff00"/><stop offset="1.000" stop-color="#63ff00"/></linearGradient>
<linearGradient id="c50" gradientUnits="userSpaceOnUse" x1="1163.1" x2="1506.0" y1="0" y2="0"><stop offset="0.000" stop-color="#00ff3f"/><stop offset="0.062" stop-color="#00ff3b"/><stop offset="0.125" stop-color="#00ff37"/><stop offset="0.188" stop-color="#00ff32"/><stop offset="0.250" stop-color="#00ff2e"/><stop offset="0.312" stop-color="#00ff29"/><stop offset="0.375" stop-color="#00ff24"/><stop offset="0.438" stop-color="#00ff1e"/><stop offset="0.500" stop-color="#00ff19"/><stop offset="0.562" stop-color="#00ff13"/><stop offset="0.625" stop-color="#00ff0c"/><stop offset="0.688" stop-color="#00ff06"/><stop offset="0.750" stop-color="#00ff00"/><stop offset="0.812" stop-color="#10ff00"/><stop offset="0.875" stop-color="#2dff00"/><stop offset="0.938" stop-color="#4cff00"/><stop offset="1.000" stop-color="#6cff00"/></linearGradient>
<linearGradient id="c51" gradientUnits="userSpaceOnUse" x1="1163.3" x2="1510.0" y1="0" y2="0"><stop offset="0.000" stop-color="#00ff41"/><stop offset="0.062" stop-color="#00ff3d"/><stop offset="0.125" stop-color="#00ff38"/><stop offset="0.188" stop-color="#00ff34"/><stop offset="0.250" stop-color="#00ff2f"/><stop offset="0.312" stop-color="#00ff2a"/><stop offset="0.375" stop-color="#00ff25"/><stop offset="0.438" stop-color="#00ff1f"/><stop offset="0.500" stop-color="#00ff1a"/><stop offset="0.562" stop-color="#00ff14"/><stop offset="0.625" stop-color="#00ff0d"/><stop offset="0.688" stop-color="#00ff07"/><stop offset="0.750" stop-color="#00ff00"/><stop offset="0.812" stop-color="#16ff00"/><stop offset="0.875" stop-color="#34ff00"/><stop offset="0.938" stop-color="#54ff00"/><stop offset="1.000" stop-color="#75ff00"/></linearGradient>
<linearGradient id="c52" gradientUnits="userSpaceOnUse" x1="1163.4" x2="1514.0" y1="0" y2="0"><stop offset="0.000" stop-color="#00ff42"/><stop offset="0.062" stop-color="#00ff3e"/><stop offset="0.125" stop-color="#00ff3a"/><stop offset="0.188" stop-color="#00ff35"/><stop offset="0.250" stop-color="#00ff31"/><stop offset="0.312" stop-color="#00ff2c"/><stop offset="0.375" stop-color="#00ff26"/><stop offset="0.438" stop-color="#00ff21"/><stop offset="0.500" stop-color="#00ff1b"/><stop offset="0.562" stop-color="#00ff15"/><stop offset="0.625" stop-color="#00ff0e"/><stop offset="0.688" stop-color="#00ff07"/><stop offset="0.750" stop-color="#00ff00"/><stop offset="0.812" stop-color="#1cff00"/><stop offset="0.875" stop-color="#3bff00"/><stop offset="0.938" stop-color="#5cff00"/><stop offset="1.000" stop-color="#7fff00"/></linearGradient>
<linearGradient id="c53" gradientUnits="userSpaceOnUse" x1="1163.5" x2="1518.1" y1="0" y2="0"><stop offset="0.000" stop-color="#00ff44"/><stop offset="0.059" stop-color="#00ff40"/><stop offset="0.118" stop-color="#00ff3c"/><stop offset="0.176" stop-color="#00ff38"/><stop offset="0.235" stop-color="#00ff33"/><stop offset="0.294" stop-color="#00ff2f"/><stop offset="0.353" stop-color="#00ff2a"/><stop offset="0.412" stop-color="#00ff24"/><stop offset="0.471" stop-color="#00ff1f"/><stop offset="0.529" stop-color="#00ff19"/><stop offset="0.588" stop-color="#00ff13"/><stop offset="0.647" stop-color="#00ff0d"/><stop offset="0.706" stop-color="#00ff06"/><stop offset="0.765" stop-color="#0cff00"/><stop offset="0.824" stop-color="#28ff00"/><stop offset="0.882" stop-color="#46ff00"/><stop offset="0.941" stop-color="#66ff00"/><stop offset="1.000" stop-color="#89ff00"/></linearGradient>
<linearGradient id="c54" gradientUnits="userSpaceOnUse" x1="1163.7" x2="1522.1" y1="0" y2="0"><stop offset="0.000" stop-color="#00ff46"/><stop offset="0.059" stop-color="#00ff42"/><stop offset="0.118" stop-color="#00ff3e"/><stop offset="0.176" stop-color="#00ff39"/><stop offset="0.235" stop-color="#00ff35"/><stop offset="0.294" stop-color="#00ff30"/><stop offset="0.353" stop-color="#00ff2b"/><stop offset="0.412" stop-color="#00ff26"/><stop offset="0.471" stop-color="#00ff20"/><stop offset="0.529" stop-color="#00ff1a"/><stop offset="0.588" stop-color="#00ff14"/><stop offset="0.647" stop-color="#00ff0e"/><stop offset="0.706" stop-color="#00ff07"/><stop offset="0.765" stop-color="#12ff00"/><stop offset="0.824" stop-color="#2fff00"/><stop offset="0.882" stop-color="#4eff00"/><stop offset="0.941" stop-color="#6fff00"/><stop offset="1.000" stop-color="#93ff00"/></linearGradient>
<linearGradient id="c55" gradientUnits="userSpaceOnUse" x1="1163.9" x2="1526.1" y1="0" y2="0"><stop offset="0.000" stop-color="#00ff48"/><stop offset="0.059" stop-color="#00ff44"/><stop offset="0.118" stop-color="#00ff3f"/><stop offset="0.176" stop-color="#00ff3b"/><stop offset="0.235" stop-color="#00ff36"/><stop offset="0.294" stop-color="#00ff32"/><stop offset="0.353" stop-color="#00ff2d"/><stop offset="0.412" stop-color="#00ff27"/><stop offset="0.471" stop-color="#00ff22"/><stop offset="0.529" stop-color="#00ff1c"/><stop offset="0.588" stop-color="#00ff15"/><stop offset="0.647" stop-color="#00ff0f"/><stop offset="0.706" stop-color="#00ff08"/><stop offset="0.765" stop-color="#17ff00"/><stop offset="0.824" stop-color="#36ff00"/><stop offset="0.882" stop-color="#56ff00"/><stop offset="0.941" stop-color="#78ff00"/><stop offset="1.000" stop-color="#9dff00"/></linearGradient>
<linearGradient id="c56" gradientUnits="userSpaceOnUse" x1="1164.1" x2="1530.1" y1="0" y2="0"><stop offset="0.000" stop-color="#00ff4a"/><stop offset="0.059" stop-color="#00ff45"/><stop offset="0.118" stop-color="#00ff41"/><stop offset="0.176" stop-color="#00ff3d"/><stop offset="0.235" stop-color="#00ff38"/><stop offset="0.294" stop-color="#00ff33"/><stop offset="0.353" stop-color="#00ff2e"/><stop offset="0.412" stop-color="#00ff29"/><stop offset="0.471" stop-color="#00ff23"/><stop offset="0.529" stop-color="#00ff1d"/><stop offset="0.588" stop-color="#00ff16"/><stop offset="0.647" stop-color="#00ff10"/><stop offset="0.706" stop-color="#00ff09"/><stop offset="0.765" stop-color="#1eff01"/><stop offset="0.824" stop-color="#3dff00"/><stop offset="0.882" stop-color="#5eff00"/><stop offset="0.941" stop-color="#82ff00"/><stop offset="1.000" stop-color="#a8ff00"/></linearGradient>
<linearGradient id="c57" gradientUnits="userSpaceOnUse" x1="1164.3" x2="1534.1" y1="0" y2="0"><stop offset="0.000" stop-color="#00ff4b"/><stop offset="0.059" stop-color="#00ff47"/><stop offset="0.118" stop-color="#00ff43"/><stop offset="0.176" stop-color="#00ff3e"/><stop offset="0.235" stop-color="#00ff3a"/><stop offset="0.294" stop-color="#00ff35"/><stop offset="0.353" stop-color="#00ff30"/><stop offset="0.412" stop-color="#00ff2a"/><stop offset="0.471" stop-color="#00ff24"/><stop offset="0.529" stop-color="#00ff1e"/><stop offset="0.588" stop-color="#00ff18"/><stop offset="0.647" stop-color="#00ff11"/><stop offset="0.706" stop-color="#06ff09"/><stop offset="0.765" stop-color="#24ff02"/><stop offset="0.824" stop-color="#44ff00"/><stop offset="0.882" stop-color="#67ff00"/><stop offset="0.941" stop-color="#8cff00"/><stop offset="1.000" stop-color="#b3ff00"/></linearGradient>
<linearGradient id="c58" gradientUnits="userSpaceOnUse" x1="1164.6" x2="1538.1" y1="0" y2="0"><stop offset="0.000" stop-color="#00ff4d"/><stop offset="0.059" stop-color="#00ff49"/><stop offset="0.118" stop-color="#00ff45"/><stop offset="0.176" stop-color="#00ff40"/><stop offset="0.235" stop-color="#00ff3b"/><stop offset="0.294" stop-color="#00ff36"/><stop offset="0.353" stop-color="#00ff31"/><stop offset="0.412" stop-color="#00ff2c"/><stop offset="0.471" stop-color="#00ff26"/><stop offset="0.529" stop-color="#00ff1f"/><stop offset="0.588" stop-color="#00ff19"/><stop offset="0.647" stop-color="#00ff12"/><stop offset="0.706" stop-color="#0bff0a"/><stop offset="0.765" stop-color="#2aff02"/><stop offset="0.824" stop-color="#4cff00"/><stop offset="0.882" stop-color="#70ff00"/><stop offset="0.941" stop-color="#96ff00"/><stop offset="1.000" stop-color="#bfff00"/></linearGradient>
<linearGradient id="c59" gradientUnits="userSpaceOnUse" x1="1164.8" x2="1542.1" y1="0" y2="0"><stop offset="0.000" stop-color="#00ff4f"/><stop offset="0.056" stop-color="#00ff4b"/><stop offset="0.111" stop-color="#00ff47"/><stop offset="0.167" stop-color="#00ff43"/><stop offset="0.222" stop-color="#00ff3e"/><stop offset="0.278" stop-color="#00ff39"/><stop offset="0.333" stop-color="#00ff34"/><stop offset="0.389" stop-color="#00ff2f"/><stop offset="0.444" stop-color="#00ff2a"/><stop offset="0.500" stop-color="#00ff24"/><stop offset="0.556" stop-color="#00ff1e"/><stop offset="0.611" stop-color="#00ff17"/><stop offset="0.667" stop-color="#00ff10"/><stop offset="0.722" stop-color="#1aff09"/><stop offset="0.778" stop-color="#39ff01"/><stop offset="0.833" stop-color="#5aff00"/><stop offset="0.889" stop-color="#7dff00"/><stop offset="0.944" stop-color="#a3ff00"/><stop offset="1.000" stop-color="#cbff00"/></linearGradient>
<linearGradient id="c60" gradientUnits="userSpaceOnUse" x1="1165.1" x2="1546.1" y1="0" y2="0"><stop offset="0.000" stop-color="#00ff51"/><stop offset="0.056" stop-color="#00ff4d"/><stop offset="0.111" stop-color="#00ff49"/><stop offset="0.167" stop-color="#00ff44"/><stop offset="0.222" stop-color="#00ff40"/><stop offset="0.278" stop-color="#00ff3b"/><stop offset="0.333" stop-color="#00ff36"/><stop offset="0.389" stop-color="#00ff31"/><stop offset="0.444" stop-color="#00ff2b"/><stop offset="0.500" stop-color="#00ff25"/><stop offset="0.556" stop-color="#00ff1f"/><stop offset="0.611" stop-color="#00ff18"/><stop offset="0.667" stop-color="#02ff11"/><stop offset="0.722" stop-color="#20ff0a"/><stop offset="0.778" stop-color="#40ff02"/><stop offset="0.833" stop-color="#62ff00"/><stop offset="0.889" stop-color="#87ff00"/><stop offset="0.944" stop-color="#aeff00"/><stop offset="1.000" stop-color="#d8ff00"/></linearGradient>
<linearGradient id="c61" gradientUnits="userSpaceOnUse" x1="1165.3" x2="1550.1" y1="0" y2="0"><stop offset="0.000" stop-color="#00ff53"/><stop offset="0.056" stop-color="#00ff4f"/><stop offset="0.111" stop-color="#00ff4b"/><stop offset="0.167" stop-color="#00ff46"/><stop offset="0.222" stop-color="#00ff42"/><stop offset="0.278" stop-color="#00ff3d"/><stop offset="0.333" stop-color="#00ff38"/><stop offset="0.389" stop-color="#00ff32"/><stop offset="0.444" stop-color="#00ff2d"/><stop offset="0.500" stop-color="#00ff27"/><stop offset="0.556" stop-color="#00ff20"/><stop offset="0.611" stop-color="#00ff1a"/><stop offset="0.667" stop-color="#07ff13"/><stop offset="0.722" stop-color="#26ff0b"/><stop offset="0.778" stop-color="#47ff03"/><stop offset="0.833" stop-color="#6aff00"/><stop offset="0.889" stop-color="#90ff00"/><stop offset="0.944" stop-color="#b9ff00"/><stop offset="1.000" stop-color="#e5ff00"/></linearGradient>
<linearGradient id="c62" gradientUnits="userSpaceOnUse" x1="1165.6" x2="1554.1" y1="0" y2="0"><stop offset="0.000" stop-color="#00ff55"/><stop offset="0.056" stop-color="#00ff51"/><stop offset="0.111" stop-color="#00ff4d"/><stop offset="0.167" stop-color="#00ff48"/><stop offset="0.222" stop-color="#00ff44"/><stop offset="0.278" stop-color="#00ff3f"/><stop offset="0.333" stop-color="#00ff3a"/><stop offset="0.389" stop-color="#00ff34"/><stop offset="0.444" stop-color="#00ff2e"/><stop offset="0.500" stop-color="#00ff28"/><stop offset="0.556" stop-color="#00ff22"/><stop offset="0.611" stop-color="#00ff1b"/><stop offset="0.667" stop-color="#0dff14"/><stop offset="0.722" stop-color="#2dff0c"/><stop offset="0.778" stop-color="#4fff03"/><stop offset="0.833" stop-color="#73ff00"/><stop offset="0.889" stop-color="#9bff00"/><stop offset="0.944" stop-color="#c5ff00"/><stop offset="1.000" stop-color="#f3ff00"/></linearGradient>
<linearGradient id="c63" gradientUnits="userSpaceOnUse" x1="1165.9" x2="1558.1" y1="0" y2="0"><stop offset="0.000" stop-color="#00ff57"/><stop offset="0.056" stop-color="#00ff53"/><stop offset="0.111" stop-color="#00ff4f"/><stop offset="0.167" stop-color="#00ff4a"/><stop offset="0.222" stop-color="#00ff45"/><stop offset="0.278" stop-color="#00ff40"/><stop offset="0.333" stop-color="#00ff3b"/><stop offset="0.389" stop-color="#00ff36"/><stop offset="0.444" stop-color="#00ff30"/><stop offset="0.500" stop-color="#00ff2a"/><stop offset="0.556" stop-color="#00ff23"/><stop offset="0.611" stop-color="#00ff1c"/><stop offset="0.667" stop-color="#12ff15"/><stop offset="0.722" stop-color="#33ff0d"/><stop offset="0.778" stop-color="#57ff04"/><stop offset="0.833" stop-color="#7dff00"/><stop offset="0.889" stop-color="#a5ff00"/><stop offset="0.944" stop-color="#d1ff00"/><stop offset="1.000" stop-color="#fffd00"/></linearGradient>
<linearGradient id="c64" gradientUnits="userSpaceOnUse" x1="1166.2" x2="1562.1" y1="0" y2="0"><stop offset="0.000" stop-color="#00ff59"/><stop offset="0.056" stop-color="#00ff55"/><stop offset="0.111" stop-color="#00ff50"/><stop offset="0.167" stop-color="#00ff4c"/><stop offset="0.222" stop-color="#00ff47"/><stop offset="0.278" stop-color="#00ff42"/><stop offset="0.333" stop-color="#00ff3d"/><stop offset="0.389" stop-color="#00ff37"/><stop offset="0.444" stop-color="#00ff32"/><stop offset="0.500" stop-color="#00ff2b"/><stop offset="0.556" stop-color="#00ff25"/><stop offset="0.611" stop-color="#00ff1e"/><stop offset="0.667" stop-color="#18ff16"/><stop offset="0.722" stop-color="#3aff0e"/><stop offset="0.778" stop-color="#5fff05"/><stop offset="0.833" stop-color="#86ff00"/><stop offset="0.889" stop-color="#b0ff00"/><stop offset="0.944" stop-color="#deff00"/><stop offset="1.000" stop-color="#ffef00"/></linearGradient>
<linearGradient id="c65" gradientUnits="userSpaceOnUse" x1="1166.5" x2="1566.1" y1="0" y2="0"><stop offset="0.000" stop-color="#00ff5b"/><stop offset="0.053" stop-color="#00ff57"/><stop offset="0.105" stop-color="#00ff53"/><stop offset="0.158" stop-color="#00ff4f"/><stop offset="0.211" stop-color="#00ff4a"/><stop offset="0.263" stop-color="#00ff46"/><stop offset="0.316" stop-color="#00ff41"/><stop offset="0.368" stop-color="#00ff3b"/><stop offset="0.421" stop-color="#00ff36"/><stop offset="0.474" stop-color="#00ff30"/><stop offset="0.526" stop-color="#00ff2a"/><stop offset="0.579" stop-color="#00ff23"/><stop offset="0.632" stop-color="#09ff1c"/><stop offset="0.684" stop-color="#29ff15"/><stop offset="0.737" stop-color="#4bff0d"/><stop offset="0.789" stop-color="#70ff04"/><stop offset="0.842" stop-color="#97ff00"/><stop offset="0.895" stop-color="#c1ff00"/><stop offset="0.947" stop-color="#eeff00"/><stop offset="1.000" stop-color="#ffe200"/></linearGradient>
<linearGradient id="c66" gradientUnits="userSpaceOnUse" x1="1166.8" x2="1570.0" y1="0" y2="0"><stop offset="0.000" stop-color="#00ff5d"/><stop offset="0.053" stop-color="#00ff59"/><stop offset="0.105" stop-color="#00ff55"/><stop offset="0.158" stop-color="#00ff51"/><stop offset="0.211" stop-color="#00ff4c"/><stop offset="0.263" stop-color="#00ff47"/><stop offset="0.316" stop-color="#00ff42"/><stop offset="0.368" stop-color="#00ff3d"/><stop offset="0.421" stop-color="#00ff38"/><stop offset="0.474" stop-color="#00ff32"/><stop offset="0.526" stop-color="#00ff2b"/><stop offset="0.579" stop-color="#00ff25"/><stop offset="0.632" stop-color="#0fff1e"/><stop offset="0.684" stop-color="#30ff16"/><stop offset="0.737" stop-color="#53ff0e"/><stop offset="0.789" stop-color="#79ff05"/><stop offset="0.842" stop-color="#a1ff00"/><stop offset="0.895" stop-color="#cdff00"/><stop offset="0.947" stop-color="#fcff00"/><stop offset="1.000" stop-color="#ffd600"/></linearGradient>
<linearGradient id="c67" gradientUnits="userSpaceOnUse" x1="1167.1" x2="1574.0" y1="0" y2="0"><stop offset="0.000" stop-color="#00ff5f"/><stop offset="0.053" stop-color="#00ff5b"/><stop offset="0.105" stop-color="#00ff57"/><stop offset="0.158" stop-color="#00ff53"/><stop offset="0.211" stop-color="#00ff4e"/><stop offset="0.263" stop-color="#00ff49"/><stop offset="0.316" stop-color="#00ff44"/><stop offset="0.368" stop-color="#00ff3f"/><stop offset="0.421" stop-color="#00ff39"/><stop offset="0.474" stop-color="#00ff33"/><stop offset="0.526" stop-color="#00ff2d"/><stop offset="0.579" stop-color="#00ff26"/><stop offset="0.632" stop-color="#15ff1f"/><stop offset="0.684" stop-color="#37ff17"/><stop offset="0.737" stop-color="#5bff0f"/><stop offset="0.789" stop-color="#82ff06"/><stop offset="0.842" stop-color="#acff00"/><stop offset="0.895" stop-color="#daff00"/><stop offset="0.947" stop-color="#fff400"/><stop offset="1.000" stop-color="#ffcb00"/></linearGradient>
<linearGradient id="c68" gradientUnits="userSpaceOnUse" x1="1167.5" x2="1578.0" y1="0" y2="0"><stop offset="0.000" stop-color="#00ff61"/><stop offset="0.053" stop-color="#00ff5d"/><stop offset="0.105" stop-color="#00ff59"/><stop offset="0.158" stop-color="#00ff55"/><stop offset="0.211" stop-color="#00ff50"/><stop offset="0.263" stop-color="#00ff4b"/><stop offset="0.316" stop-color="#00ff46"/><stop offset="0.368" stop-color="#00ff41"/><stop offset="0.421" stop-color="#00ff3b"/><stop offset="0.474" stop-color="#00ff35"/><stop offset="0.526" stop-color="#00ff2f"/><stop offset="0.579" stop-color="#00ff28"/><stop offset="0.632" stop-color="#1bff20"/><stop offset="0.684" stop-color="#3eff18"/><stop offset="0.737" stop-color="#63ff10"/><stop offset="0.789" stop-color="#8cff07"/><stop offset="0.842" stop-color="#b7ff00"/><stop offset="0.895" stop-color="#e7ff00"/><stop offset="0.947" stop-color="#ffe600"/><stop offset="1.000" stop-color="#ffc000"/></linearGradient>
<linearGradient id="c69" gradientUnits="userSpaceOnUse" x1="1167.8" x2="1581.9" y1="0" y2="0"><stop offset="0.000" stop-color="#00ff63"/><stop offset="0.053" stop-color="#00ff5f"/><stop offset="0.105" stop-color="#00ff5b"/><stop offset="0.158" stop-color="#00ff57"/><stop offset="0.211" stop-color="#00ff52"/><stop offset="0.263" stop-color="#00ff4e"/><stop offset="0.316" stop-color="#00ff48"/><stop offset="0.368" stop-color="#00ff43"/><stop offset="0.421" stop-color="#00ff3d"/><stop offset="0.474" stop-color="#00ff37"/><stop offset="0.526" stop-color="#00ff30"/><stop offset="0.579" stop-color="#00ff29"/><stop offset="0.632" stop-color="#21ff22"/><stop offset="0.684" stop-color="#45ff1a"/><stop offset="0.737" stop-color="#6cff11"/><stop offset="0.789" stop-color="#96ff08"/><stop offset="0.842" stop-color="#c3ff00"/><stop offset="0.895" stop-color="#f4ff00"/><stop offset="0.947" stop-color="#ffda00"/><stop offset="1.000" stop-color="#ffb600"/></linearGradient>
<linearGradient id="c70" gradientUnits="userSpaceOnUse" x1="1168.2" x2="1585.9" y1="0" y2="0"><stop offset="0.000" stop-color="#00ff66"/><stop offset="0.053" stop-color="#00ff62"/><stop offset="0.105" stop-color="#00ff5d"/><stop offset="0.158" stop-color="#00ff59"/><stop offset="0.211" stop-color="#00ff55"/><stop offset="0.263" stop-color="#00ff50"/><stop offset="0.316" stop-color="#00ff4a"/><stop offset="0.368" stop-color="#00ff45"/><stop offset="0.421" stop-color="#00ff3f"/><stop offset="0.474" stop-color="#00ff39"/><stop offset="0.526" stop-color="#00ff32"/><stop offset="0.579" stop-color="#05ff2b"/><stop offset="0.632" stop-color="#27ff23"/><stop offset="0.684" stop-color="#4dff1b"/><stop offset="0.737" stop-color="#75ff12"/><stop offset="0.789" stop-color="#a0ff09"/><stop offset="0.842" stop-color="#cfff00"/><stop offset="0.895" stop-color="#fffb00"/><stop offset="0.947" stop-color="#ffce00"/><stop offset="1.000" stop-color="#ffad00"/></linearGradient>
<linearGradient id="c71" gradientUnits="userSpaceOnUse" x1="1168.6" x2="1589.8" y1="0" y2="0"><stop offset="0.000" stop-color="#00ff68"/><stop offset="0.050" stop-color="#00ff64"/><stop offset="0.100" stop-color="#00ff60"/><stop offset="0.150" stop-color="#00ff5c"/><stop offset="0.200" stop-color="#00ff58"/><stop offset="0.250" stop-color="#00ff53"/><stop offset="0.300" stop-color="#00ff4e"/><stop offset="0.350" stop-color="#00ff49"/><stop offset="0.400" stop-color="#00ff43"/><stop offset="0.450" stop-color="#00ff3e"/><stop offset="0.500" stop-color="#00ff37"/><stop offset="0.550" stop-color="#00ff31"/><stop offset="0.600" stop-color="#18ff2a"/><stop offset="0.650" stop-color="#3bff22"/><stop offset="0.700" stop-color="#61ff1a"/><stop offset="0.750" stop-color="#89ff11"/><stop offset="0.800" stop-color="#b5ff08"/><stop offset="0.850" stop-color="#e4ff00"/><stop offset="0.900" stop-color="#ffe900"/><stop offset="0.950" stop-color="#ffc200"/><stop offset="1.000" stop-color="#ffa400"/></linearGradient>
<linearGradient id="c72" gradientUnits="userSpaceOnUse" x1="1169.0" x2="1593.8" y1="0" y2="0"><stop offset="0.000" stop-color="#00ff6a"/><stop offset="0.050" stop-color="#00ff66"/><stop offset="0.100" stop-color="#00ff62"/><stop offset="0.150" stop-color="#00ff5e"/><stop offset="0.200" stop-color="#00ff5a"/><stop offset="0.250" stop-color="#00ff55"/><stop offset="0.300" stop-color="#00ff50"/><stop offset="0.350" stop-color="#00ff4b"/><stop offset="0.400" stop-color="#00ff46"/><stop offset="0.450" stop-color="#00ff40"/><stop offset="0.500" stop-color="#00ff39"/><stop offset="0.550" stop-color="#00ff33"/><stop offset="0.600" stop-color="#1eff2b"/><stop offset="0.650" stop-color="#42ff24"/><stop offset="0.700" stop-color="#69ff1b"/><stop offset="0.750" stop-color="#93ff12"/><stop offset="0.800" stop-color="#c0ff09"/><stop offset="0.850" stop-color="#f2ff00"/><stop offset="0.900" stop-color="#ffdc00"/><stop offset="0.950" stop-color="#ffb800"/><stop offset="1.000" stop-color="#ff9b00"/></linearGradient>
<linearGradient id="c73" gradientUnits="userSpaceOnUse" x1="1169.4" x2="1597.8" y1="0" y2="0"><stop offset="0.000" stop-color="#00ff6c"/><stop offset="0.050" stop-color="#00ff69"/><stop offset="0.100" stop-color="#00ff65"/><stop offset="0.150" stop-color="#00ff61"/><stop offset="0.200" stop-color="#00ff5c"/><stop offset="0.250" stop-color="#00ff57"/><stop offset="0.300" stop-color="#00ff53"/><stop offset="0.350" stop-color="#00ff4d"/><stop offset="0.400" stop-color="#00ff48"/><stop offset="0.450" stop-color="#00ff42"/><stop offset="0.500" stop-color="#00ff3b"/><stop offset="0.550" stop-color="#02ff35"/><stop offset="0.600" stop-color="#25ff2d"/><stop offset="0.650" stop-color="#4aff25"/><stop offset="0.700" stop-color="#72ff1d"/><stop offset="0.750" stop-color="#9dff14"/><stop offset="0.800" stop-color="#cdff0a"/><stop offset="0.850" stop-color="#fffe00"/><stop offset="0.900" stop-color="#ffd000"/><stop offset="0.950" stop-color="#ffae00"/><stop offset="1.000" stop-color="#ff9300"/></linearGradient>
<linearGradient id="c74" gradientUnits="userSpaceOnUse" x1="1169.8" x2="1601.7" y1="0" y2="0"><stop offset="0.000" stop-color="#00ff6f"/><stop offset="0.050" stop-color="#00ff6b"/><stop offset="0.100" stop-color="#00ff67"/><stop offset="0.150" stop-color="#00ff63"/><stop offset="0.200" stop-color="#00ff5e"/><stop offset="0.250" stop-color="#00ff5a"/><stop offset="0.300" stop-color="#00ff55"/><stop offset="0.350" stop-color="#00ff4f"/><stop offset="0.400" stop-color="#00ff4a"/><stop offset="0.450" stop-color="#00ff44"/><stop offset="0.500" stop-color="#00ff3d"/><stop offset="0.550" stop-color="#08ff36"/><stop offset="0.600" stop-color="#2bff2f"/><stop offset="0.650" stop-color="#52ff27"/><stop offset="0.700" stop-color="#7bff1e"/><stop offset="0.750" stop-color="#a8ff15"/><stop offset="0.800" stop-color="#d9ff0b"/><stop offset="0.850" stop-color="#fff000"/><stop offset="0.900" stop-color="#ffc500"/><stop offset="0.950" stop-color="#ffa500"/><stop offset="1.000" stop-color="#ff8c00"/></linearGradient>
<linearGradient id="c75" gradientUnits="userSpaceOnUse" x1="1170.2" x2="1605.7" y1="0" y2="0"><stop offset="0.000" stop-color="#00ff71"/><stop offset="0.050" stop-color="#00ff6d"/><stop offset="0.100" stop-color="#00ff69"/><stop offset="0.150" stop-color="#00ff65"/><stop offset="0.200" stop-color="#00ff61"/><stop offset="0.250" stop-color="#00ff5c"/><stop offset="0.300" stop-color="#00ff57"/><stop offset="0.350" stop-color="#00ff52"/><stop offset="0.400" stop-color="#00ff4c"/><stop offset="0.450" stop-color="#00ff46"/><stop offset="0.500" stop-color="#00ff3f"/><stop offset="0.550" stop-color="#0dff38"/><stop offset="0.600" stop-color="#32ff31"/><stop offset="0.650" stop-color="#5aff29"/><stop offset="0.700" stop-color="#85ff20"/><stop offset="0.750" stop-color="#b4ff16"/><stop offset="0.800" stop-color="#e7ff0c"/><stop offset="0.850" stop-color="#ffe300"/><stop offset="0.900" stop-color="#ffbb00"/><stop offset="0.950" stop-color="#ff9c00"/><stop offset="1.000" stop-color="#ff8400"/></linearGradient>
<linearGradient id="c76" gradientUnits="userSpaceOnUse" x1="1170.7" x2="1609.6" y1="0" y2="0"><stop offset="0.000" stop-color="#00ff74"/><stop offset="0.050" stop-color="#00ff70"/><stop offset="0.100" stop-color="#00ff6c"/><stop offset="0.150" stop-color="#00ff68"/><stop offset="0.200" stop-color="#00ff63"/><stop offset="0.250" stop-color="#00ff5f"/><stop offset="0.300" stop-color="#00ff59"/><stop offset="0.350" stop-color="#00ff54"/><stop offset="0.400" stop-color="#00ff4e"/><stop offset="0.450" stop-color="#00ff48"/><stop offset="0.500" stop-color="#00ff42"/><stop offset="0.550" stop-color="#13ff3b"/><stop offset="0.600" stop-color="#39ff33"/><stop offset="0.650" stop-color="#62ff2b"/><stop offset="0.700" stop-color="#8fff22"/><stop offset="0.750" stop-color="#bfff18"/><stop offset="0.800" stop-color="#f4ff0d"/><stop offset="0.850" stop-color="#ffd701"/><stop offset="0.900" stop-color="#ffb100"/><stop offset="0.950" stop-color="#ff9400"/><stop offset="1.000" stop-color="#ff7e00"/></linearGradient>
<linearGradient id="c77" gradientUnits="userSpaceOnUse" x1="1171.2" x2="1613.6" y1="0" y2="0"><stop offset="0.000" stop-color="#00ff76"/><stop offset="0.048" stop-color="#00ff73"/><stop offset="0.095" stop-color="#00ff6f"/><stop offset="0.143" stop-color="#00ff6b"/><stop offset="0.190" stop-color="#00ff67"/><stop offset="0.238" stop-color="#00ff62"/><stop offset="0.286" stop-color="#00ff5d"/><stop offset="0.333" stop-color="#00ff58"/><stop offset="0.381" stop-color="#00ff53"/><stop offset="0.429" stop-color="#00ff4d"/><stop offset="0.476" stop-color="#00ff47"/><stop offset="0.524" stop-color="#06ff41"/><stop offset="0.571" stop-color="#2aff39"/><stop offset="0.619" stop-color="#50ff32"/><stop offset="0.667" stop-color="#7aff2a"/><stop offset="0.714" stop-color="#a7ff21"/><stop offset="0.762" stop-color="#d8ff17"/><stop offset="0.810" stop-color="#fff10c"/><stop offset="0.857" stop-color="#ffc600"/><stop offset="0.905" stop-color="#ffa500"/><stop offset="0.952" stop-color="#ff8c00"/><stop offset="1.000" stop-color="#ff7700"/></linearGradient>
<linearGradient id="c78" gradientUnits="userSpaceOnUse" x1="1171.6" x2="1617.6" y1="0" y2="0"><stop offset="0.000" stop-color="#00ff79"/><stop offset="0.048" stop-color="#00ff75"/><stop offset="0.095" stop-color="#00ff71"/><stop offset="0.143" stop-color="#00ff6d"/><stop offset="0.190" stop-color="#00ff69"/><stop offset="0.238" stop-color="#00ff65"/><stop offset="0.286" stop-color="#00ff60"/><stop offset="0.333" stop-color="#00ff5b"/><stop offset="0.381" stop-color="#00ff55"/><stop offset="0.429" stop-color="#00ff50"/><stop offset="0.476" stop-color="#00ff49"/><stop offset="0.524" stop-color="#0cff43"/><stop offset="0.571" stop-color="#31ff3c"/><stop offset="0.619" stop-color="#58ff34"/><stop offset="0.667" stop-color="#84ff2b"/><stop offset="0.714" stop-color="#b2ff22"/><stop offset="0.762" stop-color="#e6ff18"/><stop offset="0.810" stop-color="#ffe40c"/><stop offset="0.857" stop-color="#ffbb01"/><stop offset="0.905" stop-color="#ff9c00"/><stop offset="0.952" stop-color="#ff8400"/><stop offset="1.000" stop-color="#ff7100"/></linearGradient>
<linearGradient id="c79" gradientUnits="userSpaceOnUse" x1="1172.1" x2="1621.5" y1="0" y2="0"><stop offset="0.000" stop-color="#00ff7b"/><stop offset="0.048" stop-color="#00ff78"/><stop offset="0.095" stop-color="#00ff74"/><stop offset="0.143" stop-color="#00ff70"/><stop offset="0.190" stop-color="#00ff6c"/><stop offset="0.238" stop-color="#00ff67"/><stop offset="0.286" stop-color="#00ff62"/><stop offset="0.333" stop-color="#00ff5d"/><stop offset="0.381" stop-color="#00ff58"/><stop offset="0.429" stop-color="#00ff52"/><stop offset="0.476" stop-color="#00ff4c"/><stop offset="0.524" stop-color="#12ff45"/><stop offset="0.571" stop-color="#38ff3e"/><stop offset="0.619" stop-color="#61ff36"/><stop offset="0.667" stop-color="#8eff2d"/><stop offset="0.714" stop-color="#beff24"/><stop offset="0.762" stop-color="#f4ff1a"/><stop offset="0.810" stop-color="#ffd70c"/><stop offset="0.857" stop-color="#ffb102"/><stop offset="0.905" stop-color="#ff9400"/><stop offset="0.952" stop-color="#ff7d00"/><stop offset="1.000" stop-color="#ff6b00"/></linearGradient>
<linearGradient id="c80" gradientUnits="userSpaceOnUse" x1="1172.6" x2="1625.5" y1="0" y2="0"><stop offset="0.000" stop-color="#00ff7e"/><stop offset="0.048" stop-color="#00ff7a"/><stop offset="0.095" stop-color="#00ff77"/><stop offset="0.143" stop-color="#00ff73"/><stop offset="0.190" stop-color="#00ff6e"/><stop offset="0.238" stop-color="#00ff6a"/><stop offset="0.286" stop-color="#00ff65"/><stop offset="0.333" stop-color="#00ff60"/><stop offset="0.381" stop-color="#00ff5b"/><stop offset="0.429" stop-color="#00ff55"/><stop offset="0.476" stop-color="#00ff4e"/><stop offset="0.524" stop-color="#18ff48"/><stop offset="0.571" stop-color="#3fff40"/><stop offset="0.619" stop-color="#6aff38"/><stop offset="0.667" stop-color="#98ff30"/><stop offset="0.714" stop-color="#cbff26"/><stop offset="0.762" stop-color="#fffc1b"/><stop offset="0.810" stop-color="#ffcb0d"/><stop offset="0.857" stop-color="#ffa802"/><stop offset="0.905" stop-color="#ff8c00"/><stop offset="0.952" stop-color="#ff7700"/><stop offset="1.000" stop-color="#ff6500"/></linearGradient>
<linearGradient id="c81" gradientUnits="userSpaceOnUse" x1="1173.1" x2="1629.4" y1="0" y2="0"><stop offset="0.000" stop-color="#00ff81"/><stop offset="0.048" stop-color="#00ff7d"/><stop offset="0.095" stop-color="#00ff79"/><stop offset="0.143" stop-color="#00ff75"/><stop offset="0.190" stop-color="#00ff71"/><stop offset="0.238" stop-color="#00ff6d"/><stop offset="0.286" stop-color="#00ff68"/><stop offset="0.333" stop-color="#00ff63"/><stop offset="0.381" stop-color="#00ff5d"/><stop offset="0.429" stop-color="#00ff57"/><stop offset="0.476" stop-color="#00ff51"/><stop offset="0.524" stop-color="#1eff4a"/><stop offset="0.571" stop-color="#47ff43"/><stop offset="0.619" stop-color="#73ff3a"/><stop offset="0.667" stop-color="#a3ff32"/><stop offset="0.714" stop-color="#d8ff28"/><stop offset="0.762" stop-color="#ffee1b"/><stop offset="0.810" stop-color="#ffc10d"/><stop offset="0.857" stop-color="#ff9f03"/><stop offset="0.905" stop-color="#ff8500"/><stop offset="0.952" stop-color="#ff7000"/><stop offset="1.000" stop-color="#ff6000"/></linearGradient>
<linearGradient id="c82" gradientUnits="userSpaceOnUse" x1="1173.6" x2="1633.4" y1="0" y2="0"><stop offset="0.000" stop-color="#00ff83"/><stop offset="0.048" stop-color="#00ff80"/><stop offset="0.095" stop-color="#00ff7c"/><stop offset="0.143" stop-color="#00ff78"/><stop offset="0.190" stop-color="#00ff74"/><stop offset="0.238" stop-color="#00ff6f"/><stop offset="0.286" stop-color="#00ff6b"/><stop offset="0.333" stop-color="#00ff65"/><stop offset="0.381" stop-color="#00ff60"/><stop offset="0.429" stop-color="#00ff5a"/><stop offset="0.476" stop-color="#00ff54"/><stop offset="0.524" stop-color="#25ff4d"/><stop offset="0.571" stop-color="#4fff45"/><stop offset="0.619" stop-color="#7cff3d"/><stop offset="0.667" stop-color="#aeff34"/><stop offset="0.714" stop-color="#e5ff2a"/><stop offset="0.762" stop-color="#ffe01b"/><stop offset="0.810" stop-color="#ffb60e"/><stop offset="0.857" stop-color="#ff9703"/><stop offset="0.905" stop-color="#ff7e00"/><stop offset="0.952" stop-color="#ff6a00"/><stop offset="1.000" stop-color="#ff5a00"/></linearGradient>
<linearGradient id="c83" gradientUnits="userSpaceOnUse" x1="1174.1" x2="1637.4" y1="0" y2="0"><stop offset="0.000" stop-color="#00ff86"/><stop offset="0.045" stop-color="#00ff83"/><stop offset="0.091" stop-color="#00ff7f"/><stop offset="0.136" stop-color="#00ff7c"/><stop offset="0.182" stop-color="#00ff78"/><stop offset="0.227" stop-color="#00ff73"/><stop offset="0.273" stop-color="#00ff6f"/><stop offset="0.318" stop-color="#00ff6a"/><stop offset="0.364" stop-color="#00ff65"/><stop offset="0.409" stop-color="#00ff5f"/><stop offset="0.455" stop-color="#00ff59"/><stop offset="0.500" stop-color="#17ff53"/><stop offset="0.545" stop-color="#3fff4c"/><stop offset="0.591" stop-color="#6aff44"/><stop offset="0.636" stop-color="#99ff3c"/><stop offset="0.682" stop-color="#ccff33"/><stop offset="0.727" stop-color="#fffa28"/><stop offset="0.773" stop-color="#ffca18"/><stop offset="0.818" stop-color="#ffa60c"/><stop offset="0.864" stop-color="#ff8b03"/><stop offset="0.909" stop-color="#ff7500"/><stop offset="0.955" stop-color="#ff6400"/><stop offset="1.000" stop-color="#ff5500"/></linearGradient>
<linearGradient id="c84" gradientUnits="userSpaceOnUse" x1="1174.6" x2="1641.3" y1="0" y2="0"><stop offset="0.000" stop-color="#00ff89"/><stop offset="0.045" stop-color="#00ff86"/><stop offset="0.091" stop-color="#00ff82"/><stop offset="0.136" stop-color="#00ff7e"/><stop offset="0.182" stop-color="#00ff7a"/><stop offset="0.227" stop-color="#00ff76"/><stop offset="0.273" stop-color="#00ff72"/><stop offset="0.318" stop-color="#00ff6d"/><stop offset="0.364" stop-color="#00ff68"/><stop offset="0.409" stop-color="#00ff62"/><stop offset="0.455" stop-color="#00ff5c"/><stop offset="0.500" stop-color="#1eff56"/><stop offset="0.545" stop-color="#46ff4f"/><stop offset="0.591" stop-color="#73ff47"/><stop offset="0.636" stop-color="#a4ff3f"/><stop offset="0.682" stop-color="#d9ff36"/><stop offset="0.727" stop-color="#ffec28"/><stop offset="0.773" stop-color="#ffbf18"/><stop offset="0.818" stop-color="#ff9e0c"/><stop offset="0.864" stop-color="#ff8403"/><stop offset="0.909" stop-color="#ff6f00"/><stop offset="0.955" stop-color="#ff5e00"/><stop offset="1.000" stop-color="#ff5100"/></linearGradient>
<linearGradient id="c85" gradientUnits="userSpaceOnUse" x1="1175.1" x2="1645.3" y1="0" y2="0"><stop offset="0.000" stop-color="#00ff8c"/><stop offset="0.045" stop-color="#00ff89"/><stop offset="0.091" stop-color="#00ff85"/><stop offset="0.136" stop-color="#00ff81"/><stop offset="0.182" stop-color="#00ff7d"/><stop offset="0.227" stop-color="#00ff79"/><stop offset="0.273" stop-color="#00ff75"/><stop offset="0.318" stop-color="#00ff70"/><stop offset="0.364" stop-color="#00ff6b"/><stop offset="0.409" stop-color="#00ff65"/><stop offset="0.455" stop-color="#00ff5f"/><stop offset="0.500" stop-color="#24ff59"/><stop offset="0.545" stop-color="#4fff51"/><stop offset="0.591" stop-color="#7dff4a"/><stop offset="0.636" stop-color="#afff41"/><stop offset="0.682" stop-color="#e7ff38"/><stop offset="0.727" stop-color="#ffdf28"/><stop offset="0.773" stop-color="#ffb518"/><stop offset="0.818" stop-color="#ff950d"/><stop offset="0.864" stop-color="#ff7d04"/><stop offset="0.909" stop-color="#ff6900"/><stop offset="0.955" stop-color="#ff5900"/><stop offset="1.000" stop-color="#ff4c00"/></linearGradient>
<linearGradient id="c86" gradientUnits="userSpaceOnUse" x1="1175.7" x2="1649.3" y1="0" y2="0"><stop offset="0.000" stop-color="#00ff8f"/><stop offset="0.045" stop-color="#00ff8c"/><stop offset="0.091" stop-color="#00ff88"/><stop offset="0.136" stop-color="#00ff84"/><stop offset="0.182" stop-color="#00ff81"/><stop offset="0.227" stop-color="#00ff7c"/><stop offset="0.273" stop-color="#00ff78"/><stop offset="0.318" stop-color="#00ff73"/><stop offset="0.364" stop-color="#00ff6e"/><stop offset="0.409" stop-color="#00ff68"/><stop offset="0.455" stop-color="#03ff62"/><stop offset="0.500" stop-color="#2bff5c"/><stop offset="0.545" stop-color="#57ff54"/><stop offset="0.591" stop-color="#87ff4d"/><stop offset="0.636" stop-color="#bbff44"/><stop offset="0.682" stop-color="#f5ff3b"/><stop offset="0.727" stop-color="#ffd228"/><stop offset="0.773" stop-color="#ffab18"/><stop offset="0.818" stop-color="#ff8d0d"/><stop offset="0.864" stop-color="#ff7604"/><stop offset="0.909" stop-color="#ff6300"/><stop offset="0.955" stop-color="#ff5400"/><stop offset="1.000" stop-color="#ff4800"/></linearGradient>
<linearGradient id="c87" gradientUnits="userSpaceOnUse" x1="1176.2" x2="1653.2" y1="0" y2="0"><stop offset="0.000" stop-color="#00ff92"/><stop offset="0.045" stop-color="#00ff8f"/><stop offset="0.091" stop-color="#00ff8b"/><stop offset="0.136" stop-color="#00ff88"/><stop offset="0.182" stop-color="#00ff84"/><stop offset="0.227" stop-color="#00ff7f"/><stop offset="0.273" stop-color="#00ff7b"/><stop offset="0.318" stop-color="#00ff76"/><stop offset="0.364" stop-color="#00ff71"/><stop offset="0.409" stop-color="#00ff6b"/><stop offset="0.455" stop-color="#09ff65"/><stop offset="0.500" stop-color="#32ff5f"/><stop offset="0.545" stop-color="#60ff58"/><stop offset="0.591" stop-color="#91ff50"/><stop offset="0.636" stop-color="#c8ff47"/><stop offset="0.682" stop-color="#fffa3c"/><stop offset="0.727" stop-color="#ffc727"/><stop offset="0.773" stop-color="#ffa219"/><stop offset="0.818" stop-color="#ff860d"/><stop offset="0.864" stop-color="#ff7004"/><stop offset="0.909" stop-color="#ff5e00"/><stop offset="0.955" stop-color="#ff4f00"/><stop offset="1.000" stop-color="#ff4300"/></linearGradient>
<linearGradient id="c88" gradientUnits="userSpaceOnUse" x1="1176.8" x2="1657.2" y1="0" y2="0"><stop offset="0.000" stop-color="#00ff95"/><stop offset="0.045" stop-color="#00ff92"/><stop offset="0.091" stop-color="#00ff8e"/><stop offset="0.136" stop-color="#00ff8b"/><stop offset="0.182" stop-color="#00ff87"/><stop offset="0.227" stop-color="#00ff83"/><stop offset="0.273" stop-color="#00ff7e"/><stop offset="0.318" stop-color="#00ff79"/><stop offset="0.364" stop-color="#00ff74"/><stop offset="0.409" stop-color="#00ff6f"/><stop offset="0.455" stop-color="#0fff69"/><stop offset="0.500" stop-color="#3aff62"/><stop offset="0.545" stop-color="#69ff5b"/><stop offset="0.591" stop-color="#9cff53"/><stop offset="0.636" stop-color="#d5ff4a"/><stop offset="0.682" stop-color="#ffeb3b"/><stop offset="0.727" stop-color="#ffbc27"/><stop offset="0.773" stop-color="#ff9919"/><stop offset="0.818" stop-color="#ff7e0e"/><stop offset="0.864" stop-color="#ff6905"/><stop offset="0.909" stop-color="#ff5900"/><stop offset="0.955" stop-color="#ff4b00"/><stop offset="1.000" stop-color="#ff3f00"/></linearGradient>
<linearGradient id="c89" gradientUnits="userSpaceOnUse" x1="1177.3" x2="1661.2" y1="0" y2="0"><stop offset="0.000" stop-color="#00ff98"/><stop offset="0.045" stop-color="#00ff95"/><stop offset="0.091" stop-color="#00ff92"/><stop offset="0.136" stop-color="#00ff8e"/><stop offset="0.182" stop-color="#00ff8a"/><stop offset="0.227" stop-color="#00ff86"/><stop offset="0.273" stop-color="#00ff82"/><stop offset="0.318" stop-color="#00ff7d"/><stop offset="0.364" stop-color="#00ff78"/><stop offset="0.409" stop-color="#00ff72"/><stop offset="0.455" stop-color="#15ff6c"/><stop offset="0.500" stop-color="#42ff65"/><stop offset="0.545" stop-color="#72ff5e"/><stop offset="0.591" stop-color="#a8ff56"/><stop offset="0.636" stop-color="#e3ff4d"/><stop offset="0.682" stop-color="#ffde3b"/><stop offset="0.727" stop-color="#ffb127"/><stop offset="0.773" stop-color="#ff9019"/><stop offset="0.818" stop-color="#ff770e"/><stop offset="0.864" stop-color="#ff6405"/><stop offset="0.909" stop-color="#ff5400"/><stop offset="0.955" stop-color="#ff4600"/><stop offset="1.000" stop-color="#ff3b00"/></linearGradient>
<linearGradient id="c90" gradientUnits="userSpaceOnUse" x1="1177.9" x2="1665.2" y1="0" y2="0"><stop offset="0.000" stop-color="#00ff9b"/><stop offset="0.043" stop-color="#00ff98"/><stop offset="0.087" stop-color="#00ff95"/><stop offset="0.130" stop-color="#00ff92"/><stop offset="0.174" stop-color="#00ff8e"/><stop offset="0.217" stop-color="#00ff8a"/><stop offset="0.261" stop-color="#00ff86"/><stop offset="0.304" stop-color="#00ff82"/><stop offset="0.348" stop-color="#00ff7d"/><stop offset="0.391" stop-color="#00ff78"/><stop offset="0.435" stop-color="#09ff72"/><stop offset="0.478" stop-color="#33ff6c"/><stop offset="0.522" stop-color="#61ff65"/><stop offset="0.565" stop-color="#94ff5e"/><stop offset="0.609" stop-color="#cbff56"/><stop offset="0.652" stop-color="#fff64a"/><stop offset="0.696" stop-color="#ffc333"/><stop offset="0.739" stop-color="#ff9f23"/><stop offset="0.783" stop-color="#ff8316"/><stop offset="0.826" stop-color="#ff6d0c"/><stop offset="0.870" stop-color="#ff5c05"/><stop offset="0.913" stop-color="#ff4e00"/><stop offset="0.957" stop-color="#ff4200"/><stop offset="1.000" stop-color="#ff3700"/></linearGradient>
<linearGradient id="c91" gradientUnits="userSpaceOnUse" x1="1178.5" x2="1669.1" y1="0" y2="0"><stop offset="0.000" stop-color="#00ff9f"/><stop offset="0.043" stop-color="#00ff9c"/><stop offset="0.087" stop-color="#00ff99"/><stop offset="0.130" stop-color="#00ff95"/><stop offset="0.174" stop-color="#00ff92"/><stop offset="0.217" stop-color="#00ff8e"/><stop offset="0.261" stop-color="#00ff8a"/><stop offset="0.304" stop-color="#00ff85"/><stop offset="0.348" stop-color="#00ff81"/><stop offset="0.391" stop-color="#00ff7c"/><stop offset="0.435" stop-color="#0fff76"/><stop offset="0.478" stop-color="#3bff70"/><stop offset="0.522" stop-color="#6bff69"/><stop offset="0.565" stop-color="#9fff62"/><stop offset="0.609" stop-color="#d9ff5a"/><stop offset="0.652" stop-color="#ffe749"/><stop offset="0.696" stop-color="#ffb833"/><stop offset="0.739" stop-color="#ff9623"/><stop offset="0.783" stop-color="#ff7c16"/><stop offset="0.826" stop-color="#ff670d"/><stop offset="0.870" stop-color="#ff5705"/><stop offset="0.913" stop-color="#ff4900"/><stop offset="0.957" stop-color="#ff3d00"/><stop offset="1.000" stop-color="#ff3400"/></linearGradient>
<linearGradient id="c92" gradientUnits="userSpaceOnUse" x1="1179.1" x2="1673.1" y1="0" y2="0"><stop offset="0.000" stop-color="#00ffa2"/><stop offset="0.043" stop-color="#00ff9f"/><stop offset="0.087" stop-color="#00ff9c"/><stop offset="0.130" stop-color="#00ff99"/><stop offset="0.174" stop-color="#00ff95"/><stop offset="0.217" stop-color="#00ff92"/><stop offset="0.261" stop-color="#00ff8e"/><stop offset="0.304" stop-color="#00ff89"/><stop offset="0.348" stop-color="#00ff84"/><stop offset="0.391" stop-color="#00ff7f"/><stop offset="0.435" stop-color="#16ff7a"/><stop offset="0.478" stop-color="#43ff74"/><stop offset="0.522" stop-color="#74ff6d"/><stop offset="0.565" stop-color="#abff65"/><stop offset="0.609" stop-color="#e7ff5d"/><stop offset="0.652" stop-color="#ffda48"/><stop offset="0.696" stop-color="#ffae32"/><stop offset="0.739" stop-color="#ff8e23"/><stop offset="0.783" stop-color="#ff7517"/><stop offset="0.826" stop-color="#ff610d"/><stop offset="0.870" stop-color="#ff5205"/><stop offset="0.913" stop-color="#ff4400"/><stop offset="0.957" stop-color="#ff3a00"/><stop offset="1.000" stop-color="#ff3000"/></linearGradient>
<linearGradient id="c93" gradientUnits="userSpaceOnUse" x1="1179.7" x2="1677.0" y1="0" y2="0"><stop offset="0.000" stop-color="#00ffa6"/><stop offset="0.043" stop-color="#00ffa3"/><stop offset="0.087" stop-color="#00ffa0"/><stop offset="0.130" stop-color="#00ff9c"/><stop offset="0.174" stop-color="#00ff99"/><stop offset="0.217" stop-color="#00ff95"/><stop offset="0.261" stop-color="#00ff91"/><stop offset="0.304" stop-color="#00ff8d"/><stop offset="0.348" stop-color="#00ff88"/><stop offset="0.391" stop-color="#00ff83"/><stop offset="0.435" stop-color="#1dff7e"/><stop offset="0.478" stop-color="#4bff78"/><stop offset="0.522" stop-color="#7eff71"/><stop offset="0.565" stop-color="#b7ff69"/><stop offset="0.609" stop-color="#f6ff61"/><stop offset="0.652" stop-color="#ffcd47"/><stop offset="0.696" stop-color="#ffa432"/><stop offset="0.739" stop-color="#ff8623"/><stop offset="0.783" stop-color="#ff6e17"/><stop offset="0.826" stop-color="#ff5c0d"/><stop offset="0.870" stop-color="#ff4d06"/><stop offset="0.913" stop-color="#ff4000"/><stop offset="0.957" stop-color="#ff3600"/><stop offset="1.000" stop-color="#ff2d00"/></linearGradient>
<linearGradient id="c94" gradientUnits="userSpaceOnUse" x1="1180.3" x2="1681.0" y1="0" y2="0"><stop offset="0.000" stop-color="#00ffa9"/><stop offset="0.043" stop-color="#00ffa6"/><stop offset="0.087" stop-color="#00ffa3"/><stop offset="0.130" stop-color="#00ffa0"/><stop offset="0.174" stop-color="#00ff9d"/><stop offset="0.217" stop-color="#00ff99"/><stop offset="0.261" stop-color="#00ff95"/><stop offset="0.304" stop-color="#00ff91"/><stop offset="0.348" stop-color="#00ff8c"/><stop offset="0.391" stop-color="#00ff87"/><stop offset="0.435" stop-color="#24ff82"/><stop offset="0.478" stop-color="#54ff7c"/><stop offset="0.522" stop-color="#89ff75"/><stop offset="0.565" stop-color="#c4ff6e"/><stop offset="0.609" stop-color="#fff863"/><stop offset="0.652" stop-color="#ffc246"/><stop offset="0.696" stop-color="#ff9b32"/><stop offset="0.739" stop-color="#ff7e22"/><stop offset="0.783" stop-color="#ff6817"/><stop offset="0.826" stop-color="#ff560d"/><stop offset="0.870" stop-color="#ff4806"/><stop offset="0.913" stop-color="#ff3c00"/><stop offset="0.957" stop-color="#ff3200"/><stop offset="1.000" stop-color="#ff2900"/></linearGradient>
<linearGradient id="c95" gradientUnits="userSpaceOnUse" x1="1180.9" x2="1684.9" y1="0" y2="0"><stop offset="0.000" stop-color="#00ffad"/><stop offset="0.043" stop-color="#00ffaa"/><stop offset="0.087" stop-color="#00ffa7"/><stop offset="0.130" stop-color="#00ffa4"/><stop offset="0.174" stop-color="#00ffa1"/><stop offset="0.217" stop-color="#00ff9d"/><stop offset="0.261" stop-color="#00ff99"/><stop offset="0.304" stop-color="#00ff95"/><stop offset="0.348" stop-color="#00ff90"/><stop offset="0.391" stop-color="#00ff8b"/><stop offset="0.435" stop-color="#2bff86"/><stop offset="0.478" stop-color="#5dff80"/><stop offset="0.522" stop-color="#94ff79"/><stop offset="0.565" stop-color="#d2ff72"/><stop offset="0.609" stop-color="#ffe961"/><stop offset="0.652" stop-color="#ffb645"/><stop offset="0.696" stop-color="#ff9231"/><stop offset="0.739" stop-color="#ff7722"/><stop offset="0.783" stop-color="#ff6217"/><stop offset="0.826" stop-color="#ff510e"/><stop offset="0.870" stop-color="#ff4406"/><stop offset="0.913" stop-color="#ff3800"/><stop offset="0.957" stop-color="#ff2f00"/><stop offset="1.000" stop-color="#ff2600"/></linearGradient>
<linearGradient id="c96" gradientUnits="userSpaceOnUse" x1="1181.5" x2="1688.9" y1="0" y2="0"><stop offset="0.000" stop-color="#00ffb0"/><stop offset="0.042" stop-color="#00ffae"/><stop offset="0.083" stop-color="#00ffab"/><stop offset="0.125" stop-color="#00ffa8"/><stop offset="0.167" stop-color="#00ffa5"/><stop offset="0.208" stop-color="#00ffa2"/><stop offset="0.250" stop-color="#00ff9e"/><stop offset="0.292" stop-color="#00ff9a"/><stop offset="0.333" stop-color="#00ff96"/><stop offset="0.375" stop-color="#00ff92"/><stop offset="0.417" stop-color="#1eff8d"/><stop offset="0.458" stop-color="#4eff87"/><stop offset="0.500" stop-color="#82ff81"/><stop offset="0.542" stop-color="#bcff7b"/><stop offset="0.583" stop-color="#fdff73"/><stop offset="0.625" stop-color="#ffc854"/><stop offset="0.667" stop-color="#ffa03d"/><stop offset="0.708" stop-color="#ff822c"/><stop offset="0.750" stop-color="#ff6b1f"/><stop offset="0.792" stop-color="#ff5915"/><stop offset="0.833" stop-color="#ff4a0d"/><stop offset="0.875" stop-color="#ff3e06"/><stop offset="0.917" stop-color="#ff3400"/><stop offset="0.958" stop-color="#ff2b00"/><stop offset="1.000" stop-color="#ff2300"/></linearGradient>
<linearGradient id="c97" gradientUnits="userSpaceOnUse" x1="1182.2" x2="1692.8" y1="0" y2="0"><stop offset="0.000" stop-color="#00ffb4"/><stop offset="0.042" stop-color="#00ffb2"/><stop offset="0.083" stop-color="#00ffaf"/><stop offset="0.125" stop-color="#00ffac"/><stop offset="0.167" stop-color="#00ffa9"/><stop offset="0.208" stop-color="#00ffa6"/><stop offset="0.250" stop-color="#00ffa3"/><stop offset="0.292" stop-color="#00ff9f"/><stop offset="0.333" stop-color="#00ff9b"/><stop offset="0.375" stop-color="#00ff96"/><stop offset="0.417" stop-color="#26ff91"/><stop offset="0.458" stop-color="#57ff8c"/><stop offset="0.500" stop-color="#8dff86"/><stop offset="0.542" stop-color="#caff7f"/><stop offset="0.583" stop-color="#fff172"/><stop offset="0.625" stop-color="#ffbc52"/><stop offset="0.667" stop-color="#ff963c"/><stop offset="0.708" stop-color="#ff7a2c"/><stop offset="0.750" stop-color="#ff651f"/><stop offset="0.792" stop-color="#ff5415"/><stop offset="0.833" stop-color="#ff450d"/><stop offset="0.875" stop-color="#ff3a06"/><stop offset="0.917" stop-color="#ff3000"/><stop offset="0.958" stop-color="#ff2700"/><stop offset="1.000" stop-color="#ff2000"/></linearGradient>
<linearGradient id="c98" gradientUnits="userSpaceOnUse" x1="1182.8" x2="1696.8" y1="0" y2="0"><stop offset="0.000" stop-color="#00ffb8"/><stop offset="0.042" stop-color="#00ffb6"/><stop offset="0.083" stop-color="#00ffb3"/><stop offset="0.125" stop-color="#00ffb0"/><stop offset="0.167" stop-color="#00ffae"/><stop offset="0.208" stop-color="#00ffaa"/><stop offset="0.250" stop-color="#00ffa7"/><stop offset="0.292" stop-color="#00ffa3"/><stop offset="0.333" stop-color="#00ff9f"/><stop offset="0.375" stop-color="#00ff9b"/><stop offset="0.417" stop-color="#2dff96"/><stop offset="0.458" stop-color="#60ff91"/><stop offset="0.500" stop-color="#99ff8b"/><stop offset="0.542" stop-color="#d8ff84"/><stop offset="0.583" stop-color="#ffe36f"/><stop offset="0.625" stop-color="#ffb151"/><stop offset="0.667" stop-color="#ff8e3c"/><stop offset="0.708" stop-color="#ff732c"/><stop offset="0.750" stop-color="#ff5f1f"/><stop offset="0.792" stop-color="#ff4e15"/><stop offset="0.833" stop-color="#ff410d"/><stop offset="0.875" stop-color="#ff3606"/><stop offset="0.917" stop-color="#ff2c01"/><stop offset="0.958" stop-color="#ff2400"/><stop offset="1.000" stop-color="#ff1d00"/></linearGradient>
<linearGradient id="c99" gradientUnits="userSpaceOnUse" x1="1183.5" x2="1700.7" y1="0" y2="0"><stop offset="0.000" stop-color="#00ffbc"/><stop offset="0.042" stop-color="#00ffba"/><stop offset="0.083" stop-color="#00ffb7"/><stop offset="0.125" stop-color="#00ffb5"/><stop offset="0.167" stop-color="#00ffb2"/><stop offset="0.208" stop-color="#00ffaf"/><stop offset="0.250" stop-color="#00ffac"/><stop offset="0.292" stop-color="#00ffa8"/><stop offset="0.333" stop-color="#00ffa4"/><stop offset="0.375" stop-color="#05ffa0"/><stop offset="0.417" stop-color="#35ff9b"/><stop offset="0.458" stop-color="#6aff96"/><stop offset="0.500" stop-color="#a5ff90"/><stop offset="0.542" stop-color="#e7ff8a"/><stop offset="0.583" stop-color="#ffd56d"/><stop offset="0.625" stop-color="#ffa750"/><stop offset="0.667" stop-color="#ff863b"/><stop offset="0.708" stop-color="#ff6d2b"/><stop offset="0.750" stop-color="#ff591f"/><stop offset="0.792" stop-color="#ff4a15"/><stop offset="0.833" stop-color="#ff3d0d"/><stop offset="0.875" stop-color="#ff3207"/><stop offset="0.917" stop-color="#ff2901"/><stop offset="0.958" stop-color="#ff2100"/><stop offset="1.000" stop-color="#ff1a00"/></linearGradient>
<linearGradient id="c100" gradientUnits="userSpaceOnUse" x1="1184.1" x2="1704.7" y1="0" y2="0"><stop offset="0.000" stop-color="#00ffc0"/><stop offset="0.042" stop-color="#00ffbe"/><stop offset="0.083" stop-color="#00ffbb"/><stop offset="0.125" stop-color="#00ffb9"/><stop offset="0.167" stop-color="#00ffb6"/><stop offset="0.208" stop-color="#00ffb3"/><stop offset="0.250" stop-color="#00ffb0"/><stop offset="0.292" stop-color="#00ffad"/><stop offset="0.333" stop-color="#00ffa9"/><stop offset="0.375" stop-color="#0cffa5"/><stop offset="0.417" stop-color="#3dffa0"/><stop offset="0.458" stop-color="#74ff9b"/><stop offset="0.500" stop-color="#b2ff96"/><stop offset="0.542" stop-color="#f7ff8f"/><stop offset="0.583" stop-color="#ffc86b"/><stop offset="0.625" stop-color="#ff9d4f"/><stop offset="0.667" stop-color="#ff7e3b"/><stop offset="0.708" stop-color="#ff662b"/><stop offset="0.750" stop-color="#ff541f"/><stop offset="0.792" stop-color="#ff4515"/><stop offset="0.833" stop-color="#ff390d"/><stop offset="0.875" stop-color="#ff2e07"/><stop offset="0.917" stop-color="#ff2601"/><stop offset="0.958" stop-color="#ff1e00"/><stop offset="1.000" stop-color="#ff1800"/></linearGradient>
<linearGradient id="c101" gradientUnits="userSpaceOnUse" x1="1184.8" x2="1708.7" y1="0" y2="0"><stop offset="0.000" stop-color="#00ffc4"/><stop offset="0.042" stop-color="#00ffc2"/><stop offset="0.083" stop-color="#00ffc0"/><stop offset="0.125" stop-color="#00ffbd"/><stop offset="0.167" stop-color="#00ffbb"/><stop offset="0.208" stop-color="#00ffb8"/><stop offset="0.250" stop-color="#00ffb5"/><stop offset="0.292" stop-color="#00ffb2"/><stop offset="0.333" stop-color="#00ffae"/><stop offset="0.375" stop-color="#13ffaa"/><stop offset="0.417" stop-color="#46ffa6"/><stop offset="0.458" stop-color="#7fffa1"/><stop offset="0.500" stop-color="#bfff9b"/><stop offset="0.542" stop-color="#fff790"/><stop offset="0.583" stop-color="#ffbc69"/><stop offset="0.625" stop-color="#ff944e"/><stop offset="0.667" stop-color="#ff763a"/><stop offset="0.708" stop-color="#ff602b"/><stop offset="0.750" stop-color="#ff4f1f"/><stop offset="0.792" stop-color="#ff4016"/><stop offset="0.833" stop-color="#ff350e"/><stop offset="0.875" stop-color="#ff2b07"/><stop offset="0.917" stop-color="#ff2201"/><stop offset="0.958" stop-color="#ff1b00"/><stop offset="1.000" stop-color="#ff1500"/></linearGradient>
<linearGradient id="c102" gradientUnits="userSpaceOnUse" x1="1185.5" x2="1712.6" y1="0" y2="0"><stop offset="0.000" stop-color="#00ffc8"/><stop offset="0.042" stop-color="#00ffc6"/><stop offset="0.083" stop-color="#00ffc4"/><stop offset="0.125" stop-color="#00ffc2"/><stop offset="0.167" stop-color="#00ffc0"/><stop offset="0.208" stop-color="#00ffbd"/><stop offset="0.250" stop-color="#00ffba"/><stop offset="0.292" stop-color="#00ffb7"/><stop offset="0.333" stop-color="#00ffb4"/><stop offset="0.375" stop-color="#1affb0"/><stop offset="0.417" stop-color="#4fffac"/><stop offset="0.458" stop-color="#8bffa7"/><stop offset="0.500" stop-color="#ceffa1"/><stop offset="0.542" stop-color="#ffe78d"/><stop offset="0.583" stop-color="#ffb167"/><stop offset="0.625" stop-color="#ff8b4d"/><stop offset="0.667" stop-color="#ff6f39"/><stop offset="0.708" stop-color="#ff5a2b"/><stop offset="0.750" stop-color="#ff4a1f"/><stop offset="0.792" stop-color="#ff3c16"/><stop offset="0.833" stop-color="#ff310e"/><stop offset="0.875" stop-color="#ff2707"/><stop offset="0.917" stop-color="#ff1f02"/><stop offset="0.958" stop-color="#ff1900"/><stop offset="1.000" stop-color="#ff1200"/></linearGradient>
<linearGradient id="c103" gradientUnits="userSpaceOnUse" x1="1186.2" x2="1716.6" y1="0" y2="0"><stop offset="0.000" stop-color="#00ffcd"/><stop offset="0.040" stop-color="#00ffcb"/><stop offset="0.080" stop-color="#00ffc9"/><stop offset="0.120" stop-color="#00ffc7"/><stop offset="0.160" stop-color="#00ffc5"/><stop offset="0.200" stop-color="#00ffc3"/><stop offset="0.240" stop-color="#00ffc0"/><stop offset="0.280" stop-color="#00ffbd"/><stop offset="0.320" stop-color="#00ffba"/><stop offset="0.360" stop-color="#0fffb7"/><stop offset="0.400" stop-color="#42ffb3"/><stop offset="0.440" stop-color="#7affaf"/><stop offset="0.480" stop-color="#baffaa"/><stop offset="0.520" stop-color="#fffda4"/><stop offset="0.560" stop-color="#ffc078"/><stop offset="0.600" stop-color="#ff975a"/><stop offset="0.640" stop-color="#ff7944"/><stop offset="0.680" stop-color="#ff6234"/><stop offset="0.720" stop-color="#ff5027"/><stop offset="0.760" stop-color="#ff411d"/><stop offset="0.800" stop-color="#ff3614"/><stop offset="0.840" stop-color="#ff2c0d"/><stop offset="0.880" stop-color="#ff2307"/><stop offset="0.920" stop-color="#ff1c02"/><stop offset="0.960" stop-color="#ff1600"/><stop offset="1.000" stop-color="#ff1000"/></linearGradient>
<linearGradient id="c104" gradientUnits="userSpaceOnUse" x1="1186.9" x2="1720.6" y1="0" y2="0"><stop offset="0.000" stop-color="#00ffd1"/><stop offset="0.040" stop-color="#00ffd0"/><stop offset="0.080" stop-color="#00ffce"/><stop offset="0.120" stop-color="#00ffcc"/><stop offset="0.160" stop-color="#00ffca"/><stop offset="0.200" stop-color="#00ffc8"/><stop offset="0.240" stop-color="#00ffc5"/><stop offset="0.280" stop-color="#00ffc3"/><stop offset="0.320" stop-color="#00ffc0"/><stop offset="0.360" stop-color="#16ffbd"/><stop offset="0.400" stop-color="#4bffb9"/><stop offset="0.440" stop-color="#86ffb5"/><stop offset="0.480" stop-color="#c8ffb1"/><stop offset="0.520" stop-color="#ffec9f"/><stop offset="0.560" stop-color="#ffb476"/><stop offset="0.600" stop-color="#ff8e59"/><stop offset="0.640" stop-color="#ff7144"/><stop offset="0.680" stop-color="#ff5c34"/><stop offset="0.720" stop-color="#ff4b27"/><stop offset="0.760" stop-color="#ff3d1d"/><stop offset="0.800" stop-color="#ff3214"/><stop offset="0.840" stop-color="#ff280d"/><stop offset="0.880" stop-color="#ff2007"/><stop offset="0.920" stop-color="#ff1902"/><stop offset="0.960" stop-color="#ff1300"/><stop offset="1.000" stop-color="#ff0e00"/></linearGradient>
<linearGradient id="c105" gradientUnits="userSpaceOnUse" x1="1187.6" x2="1724.5" y1="0" y2="0"><stop offset="0.000" stop-color="#00ffd6"/><stop offset="0.040" stop-color="#00ffd4"/><stop offset="0.080" stop-color="#00ffd3"/><stop offset="0.120" stop-color="#00ffd1"/><stop offset="0.160" stop-color="#00ffcf"/><stop offset="0.200" stop-color="#00ffcd"/><stop offset="0.240" stop-color="#00ffcb"/><stop offset="0.280" stop-color="#00ffc9"/><stop offset="0.320" stop-color="#00ffc6"/><stop offset="0.360" stop-color="#1dffc3"/><stop offset="0.400" stop-color="#54ffc0"/><stop offset="0.440" stop-color="#92ffbc"/><stop offset="0.480" stop-color="#d7ffb8"/><stop offset="0.520" stop-color="#ffdd9c"/><stop offset="0.560" stop-color="#ffa973"/><stop offset="0.600" stop-color="#ff8558"/><stop offset="0.640" stop-color="#ff6a43"/><stop offset="0.680" stop-color="#ff5633"/><stop offset="0.720" stop-color="#ff4627"/><stop offset="0.760" stop-color="#ff391d"/><stop offset="0.800" stop-color="#ff2e14"/><stop offset="0.840" stop-color="#ff250d"/><stop offset="0.880" stop-color="#ff1d07"/><stop offset="0.920" stop-color="#ff1602"/><stop offset="0.960" stop-color="#ff1000"/><stop offset="1.000" stop-color="#ff0b00"/></linearGradient>
<linearGradient id="c106" gradientUnits="userSpaceOnUse" x1="1188.3" x2="1728.5" y1="0" y2="0"><stop offset="0.000" stop-color="#00ffdb"/><stop offset="0.040" stop-color="#00ffd9"/><stop offset="0.080" stop-color="#00ffd8"/><stop offset="0.120" stop-color="#00ffd6"/><stop offset="0.160" stop-color="#00ffd5"/><stop offset="0.200" stop-color="#00ffd3"/><stop offset="0.240" stop-color="#00ffd1"/><stop offset="0.280" stop-color="#00ffcf"/><stop offset="0.320" stop-color="#00ffcc"/><stop offset="0.360" stop-color="#25ffca"/><stop offset="0.400" stop-color="#5effc7"/><stop offset="0.440" stop-color="#9fffc3"/><stop offset="0.480" stop-color="#e7ffbf"/><stop offset="0.520" stop-color="#ffcf98"/><stop offset="0.560" stop-color="#ff9f71"/><stop offset="0.600" stop-color="#ff7d56"/><stop offset="0.640" stop-color="#ff6442"/><stop offset="0.680" stop-color="#ff5033"/><stop offset="0.720" stop-color="#ff4127"/><stop offset="0.760" stop-color="#ff351d"/><stop offset="0.800" stop-color="#ff2a14"/><stop offset="0.840" stop-color="#ff210d"/><stop offset="0.880" stop-color="#ff1a07"/><stop offset="0.920" stop-color="#ff1402"/><stop offset="0.960" stop-color="#ff0e00"/><stop offset="1.000" stop-color="#ff0900"/></linearGradient>
<linearGradient id="c107" gradientUnits="userSpaceOnUse" x1="1189.1" x2="1732.5" y1="0" y2="0"><stop offset="0.000" stop-color="#00ffdf"/><stop offset="0.040" stop-color="#00ffde"/><stop offset="0.080" stop-color="#00ffdd"/><stop offset="0.120" stop-color="#00ffdc"/><stop offset="0.160" stop-color="#00ffda"/><stop offset="0.200" stop-color="#00ffd9"/><stop offset="0.240" stop-color="#00ffd7"/><stop offset="0.280" stop-color="#00ffd5"/><stop offset="0.320" stop-color="#00ffd3"/><stop offset="0.360" stop-color="#2dffd0"/><stop offset="0.400" stop-color="#69ffce"/><stop offset="0.440" stop-color="#acffcb"/><stop offset="0.480" stop-color="#f8ffc7"/><stop offset="0.520" stop-color="#ffc295"/><stop offset="0.560" stop-color="#ff956f"/><stop offset="0.600" stop-color="#ff7555"/><stop offset="0.640" stop-color="#ff5d42"/><stop offset="0.680" stop-color="#ff4b33"/><stop offset="0.720" stop-color="#ff3c26"/><stop offset="0.760" stop-color="#ff311d"/><stop offset="0.800" stop-color="#ff2714"/><stop offset="0.840" stop-color="#ff1e0e"/><stop offset="0.880" stop-color="#ff1708"/><stop offset="0.920" stop-color="#ff1103"/><stop offset="0.960" stop-color="#ff0b00"/><stop offset="1.000" stop-color="#ff0700"/></linearGradient>
<linearGradient id="c108" gradientUnits="userSpaceOnUse" x1="1189.8" x2="1736.4" y1="0" y2="0"><stop offset="0.000" stop-color="#00ffe4"/><stop offset="0.040" stop-color="#00ffe3"/><stop offset="0.080" stop-color="#00ffe2"/><stop offset="0.120" stop-color="#00ffe1"/><stop offset="0.160" stop-color="#00ffe0"/><stop offset="0.200" stop-color="#00ffdf"/><stop offset="0.240" stop-color="#00ffdd"/><stop offset="0.280" stop-color="#00ffdb"/><stop offset="0.320" stop-color="#00ffda"/><stop offset="0.360" stop-color="#36ffd8"/><stop offset="0.400" stop-color="#74ffd5"/><stop offset="0.440" stop-color="#baffd3"/><stop offset="0.480" stop-color="#fff4c7"/><stop offset="0.520" stop-color="#ffb591"/><stop offset="0.560" stop-color="#ff8c6e"/><stop offset="0.600" stop-color="#ff6e54"/><stop offset="0.640" stop-color="#ff5741"/><stop offset="0.680" stop-color="#ff4632"/><stop offset="0.720" stop-color="#ff3826"/><stop offset="0.760" stop-color="#ff2d1d"/><stop offset="0.800" stop-color="#ff2315"/><stop offset="0.840" stop-color="#ff1b0e"/><stop offset="0.880" stop-color="#ff1408"/><stop offset="0.920" stop-color="#ff0e03"/><stop offset="0.960" stop-color="#ff0900"/><stop offset="1.000" stop-color="#ff0500"/></linearGradient>
<linearGradient id="c109" gradientUnits="userSpaceOnUse" x1="1190.6" x2="1740.4" y1="0" y2="0"><stop offset="0.000" stop-color="#00ffe9"/><stop offset="0.040" stop-color="#00ffe9"/><stop offset="0.080" stop-color="#00ffe8"/><stop offset="0.120" stop-color="#00ffe7"/><stop offset="0.160" stop-color="#00ffe6"/><stop offset="0.200" stop-color="#00ffe5"/><stop offset="0.240" stop-color="#00ffe4"/><stop offset="0.280" stop-color="#00ffe2"/><stop offset="0.320" stop-color="#06ffe1"/><stop offset="0.360" stop-color="#3fffdf"/><stop offset="0.400" stop-color="#80ffdd"/><stop offset="0.440" stop-color="#c9ffdb"/><stop offset="0.480" stop-color="#ffe4c1"/><stop offset="0.520" stop-color="#ffaa8e"/><stop offset="0.560" stop-color="#ff836c"/><stop offset="0.600" stop-color="#ff6753"/><stop offset="0.640" stop-color="#ff5240"/><stop offset="0.680" stop-color="#ff4132"/><stop offset="0.720" stop-color="#ff3426"/><stop offset="0.760" stop-color="#ff291d"/><stop offset="0.800" stop-color="#ff2015"/><stop offset="0.840" stop-color="#ff180e"/><stop offset="0.880" stop-color="#ff1208"/><stop offset="0.920" stop-color="#ff0c03"/><stop offset="0.960" stop-color="#ff0700"/><stop offset="1.000" stop-color="#ff0200"/></linearGradient>
<linearGradient id="c110" gradientUnits="userSpaceOnUse" x1="1191.3" x2="1744.4" y1="0" y2="0"><stop offset="0.000" stop-color="#00ffef"/><stop offset="0.038" stop-color="#00ffee"/><stop offset="0.077" stop-color="#00ffee"/><stop offset="0.115" stop-color="#00ffed"/><stop offset="0.154" stop-color="#00ffec"/><stop offset="0.192" stop-color="#00ffeb"/><stop offset="0.231" stop-color="#00ffeb"/><stop offset="0.269" stop-color="#00ffea"/><stop offset="0.308" stop-color="#00ffe9"/><stop offset="0.346" stop-color="#34ffe7"/><stop offset="0.385" stop-color="#71ffe6"/><stop offset="0.423" stop-color="#b7ffe5"/><stop offset="0.462" stop-color="#fff7dc"/><stop offset="0.500" stop-color="#ffb7a1"/><stop offset="0.538" stop-color="#ff8d7b"/><stop offset="0.577" stop-color="#ff6e5f"/><stop offset="0.615" stop-color="#ff584b"/><stop offset="0.654" stop-color="#ff463b"/><stop offset="0.692" stop-color="#ff382e"/><stop offset="0.731" stop-color="#ff2d23"/><stop offset="0.769" stop-color="#ff231b"/><stop offset="0.808" stop-color="#ff1b13"/><stop offset="0.846" stop-color="#ff140d"/><stop offset="0.885" stop-color="#ff0e08"/><stop offset="0.923" stop-color="#ff0903"/><stop offset="0.962" stop-color="#ff0400"/><stop offset="1.000" stop-color="#ff0000"/></linearGradient>
<linearGradient id="c111" gradientUnits="userSpaceOnUse" x1="1192.1" x2="1748.4" y1="0" y2="0"><stop offset="0.000" stop-color="#00fff4"/><stop offset="0.038" stop-color="#00fff4"/><stop offset="0.077" stop-color="#00fff3"/><stop offset="0.154" stop-color="#00fff3"/><stop offset="0.192" stop-color="#00fff2"/><stop offset="0.231" stop-color="#00fff2"/><stop offset="0.269" stop-color="#00fff1"/><stop offset="0.308" stop-color="#04fff0"/><stop offset="0.346" stop-color="#3dffef"/><stop offset="0.385" stop-color="#7dffef"/><stop offset="0.423" stop-color="#c7ffee"/><stop offset="0.462" stop-color="#ffe6d5"/><stop offset="0.500" stop-color="#ffab9e"/><stop offset="0.538" stop-color="#ff8379"/><stop offset="0.577" stop-color="#ff675e"/><stop offset="0.615" stop-color="#ff524a"/><stop offset="0.654" stop-color="#ff413a"/><stop offset="0.692" stop-color="#ff342e"/><stop offset="0.731" stop-color="#ff2923"/><stop offset="0.769" stop-color="#ff201b"/><stop offset="0.808" stop-color="#ff1813"/><stop offset="0.846" stop-color="#ff120d"/><stop offset="0.885" stop-color="#ff0c08"/><stop offset="0.923" stop-color="#ff0703"/><stop offset="0.962" stop-color="#ff0200"/><stop offset="1.000" stop-color="#ff0000"/></linearGradient>
<linearGradient id="c112" gradientUnits="userSpaceOnUse" x1="1192.9" x2="1752.4" y1="0" y2="0"><stop offset="0.000" stop-color="#00fffa"/><stop offset="0.038" stop-color="#00fffa"/><stop offset="0.077" stop-color="#00fff9"/><stop offset="0.269" stop-color="#00fff9"/><stop offset="0.308" stop-color="#0bfff8"/><stop offset="0.346" stop-color="#47fff8"/><stop offset="0.385" stop-color="#8afff8"/><stop offset="0.423" stop-color="#d7fff7"/><stop offset="0.462" stop-color="#ffd6d0"/><stop offset="0.500" stop-color="#ffa09a"/><stop offset="0.538" stop-color="#ff7b77"/><stop offset="0.577" stop-color="#ff605d"/><stop offset="0.615" stop-color="#ff4c49"/><stop offset="0.654" stop-color="#ff3c3a"/><stop offset="0.692" stop-color="#ff302d"/><stop offset="0.731" stop-color="#ff2523"/><stop offset="0.769" stop-color="#ff1d1b"/><stop offset="0.808" stop-color="#ff1513"/><stop offset="0.846" stop-color="#ff0f0d"/><stop offset="0.885" stop-color="#ff0908"/><stop offset="0.923" stop-color="#ff0503"/><stop offset="0.962" stop-color="#ff0000"/><stop offset="1.000" stop-color="#ff0000"/></linearGradient>
<linearGradient id="c113" gradientUnits="userSpaceOnUse" x1="1193.7" x2="1756.4" y1="0" y2="0"><stop offset="0.000" stop-color="#00ffff"/><stop offset="0.038" stop-color="#00feff"/><stop offset="0.231" stop-color="#00feff"/><stop offset="0.269" stop-color="#00fdff"/><stop offset="0.308" stop-color="#13fdff"/><stop offset="0.346" stop-color="#50fdff"/><stop offset="0.385" stop-color="#96fdff"/><stop offset="0.423" stop-color="#e6fcff"/><stop offset="0.462" stop-color="#ffc8ca"/><stop offset="0.500" stop-color="#ff9597"/><stop offset="0.538" stop-color="#ff7375"/><stop offset="0.577" stop-color="#ff5a5b"/><stop offset="0.615" stop-color="#ff4748"/><stop offset="0.654" stop-color="#ff3839"/><stop offset="0.692" stop-color="#ff2c2d"/><stop offset="0.731" stop-color="#ff2223"/><stop offset="0.769" stop-color="#ff191b"/><stop offset="0.808" stop-color="#ff1214"/><stop offset="0.846" stop-color="#ff0c0d"/><stop offset="0.885" stop-color="#ff0708"/><stop offset="0.923" stop-color="#ff0203"/><stop offset="0.962" stop-color="#ff0000"/><stop offset="1.000" stop-color="#ff0000"/></linearGradient>
<linearGradient id="c114" gradientUnits="userSpaceOnUse" x1="1194.5" x2="1760.3" y1="0" y2="0"><stop offset="0.000" stop-color="#00f9ff"/><stop offset="0.038" stop-color="#00f8ff"/><stop offset="0.115" stop-color="#00f8ff"/><stop offset="0.154" stop-color="#00f7ff"/><stop offset="0.192" stop-color="#00f7ff"/><stop offset="0.231" stop-color="#00f6ff"/><stop offset="0.269" stop-color="#00f5ff"/><stop offset="0.308" stop-color="#1af5ff"/><stop offset="0.346" stop-color="#58f4ff"/><stop offset="0.385" stop-color="#9ef3ff"/><stop offset="0.423" stop-color="#eef2ff"/><stop offset="0.462" stop-color="#ffbac5"/><stop offset="0.500" stop-color="#ff8b94"/><stop offset="0.538" stop-color="#ff6b73"/><stop offset="0.577" stop-color="#ff545a"/><stop offset="0.615" stop-color="#ff4248"/><stop offset="0.654" stop-color="#ff3339"/><stop offset="0.692" stop-color="#ff282d"/><stop offset="0.731" stop-color="#ff1e23"/><stop offset="0.769" stop-color="#ff161b"/><stop offset="0.808" stop-color="#ff1014"/><stop offset="0.846" stop-color="#ff0a0e"/><stop offset="0.885" stop-color="#ff0508"/><stop offset="0.923" stop-color="#ff0004"/><stop offset="0.962" stop-color="#ff0000"/><stop offset="1.000" stop-color="#ff0000"/></linearGradient>
<linearGradient id="c115" gradientUnits="userSpaceOnUse" x1="1195.3" x2="1764.2" y1="0" y2="0"><stop offset="0.000" stop-color="#00f3ff"/><stop offset="0.038" stop-color="#00f2ff"/><stop offset="0.077" stop-color="#00f2ff"/><stop offset="0.115" stop-color="#00f1ff"/><stop offset="0.154" stop-color="#00f0ff"/><stop offset="0.192" stop-color="#00f0ff"/><stop offset="0.231" stop-color="#00efff"/><stop offset="0.269" stop-color="#00eeff"/><stop offset="0.308" stop-color="#21ecff"/><stop offset="0.346" stop-color="#5febff"/><stop offset="0.385" stop-color="#a5eaff"/><stop offset="0.423" stop-color="#f5e8ff"/><stop offset="0.462" stop-color="#ffadc0"/><stop offset="0.500" stop-color="#ff8292"/><stop offset="0.538" stop-color="#ff6471"/><stop offset="0.577" stop-color="#ff4e59"/><stop offset="0.615" stop-color="#ff3d47"/><stop offset="0.654" stop-color="#ff2f38"/><stop offset="0.692" stop-color="#ff242d"/><stop offset="0.731" stop-color="#ff1b23"/><stop offset="0.769" stop-color="#ff131b"/><stop offset="0.808" stop-color="#ff0d14"/><stop offset="0.846" stop-color="#ff070e"/><stop offset="0.885" stop-color="#ff0208"/><stop offset="0.923" stop-color="#ff0004"/><stop offset="0.962" stop-color="#ff0000"/><stop offset="1.000" stop-color="#ff0000"/></linearGradient>
<linearGradient id="c116" gradientUnits="userSpaceOnUse" x1="1196.1" x2="1768.2" y1="0" y2="0"><stop offset="0.000" stop-color="#00edff"/><stop offset="0.037" stop-color="#00edff"/><stop offset="0.074" stop-color="#00ecff"/><stop offset="0.111" stop-color="#00ebff"/><stop offset="0.148" stop-color="#00eaff"/><stop offset="0.185" stop-color="#00e9ff"/><stop offset="0.222" stop-color="#00e8ff"/><stop offset="0.259" stop-color="#00e6ff"/><stop offset="0.296" stop-color="#17e5ff"/><stop offset="0.333" stop-color="#51e3ff"/><stop offset="0.370" stop-color="#92e1ff"/><stop offset="0.407" stop-color="#dbdfff"/><stop offset="0.444" stop-color="#ffb9d7"/><stop offset="0.481" stop-color="#ff8ba3"/><stop offset="0.519" stop-color="#ff6a7f"/><stop offset="0.556" stop-color="#ff5364"/><stop offset="0.593" stop-color="#ff4150"/><stop offset="0.630" stop-color="#ff3341"/><stop offset="0.667" stop-color="#ff2734"/><stop offset="0.704" stop-color="#ff1e29"/><stop offset="0.741" stop-color="#ff1621"/><stop offset="0.778" stop-color="#ff0f19"/><stop offset="0.815" stop-color="#ff0913"/><stop offset="0.852" stop-color="#ff040d"/><stop offset="0.889" stop-color="#ff0008"/><stop offset="0.926" stop-color="#ff0004"/><stop offset="0.963" stop-color="#ff0000"/><stop offset="1.000" stop-color="#ff0000"/></linearGradient>
<linearGradient id="c117" gradientUnits="userSpaceOnUse" x1="1196.9" x2="1772.1" y1="0" y2="0"><stop offset="0.000" stop-color="#00e8ff"/><stop offset="0.037" stop-color="#00e7ff"/><stop offset="0.074" stop-color="#00e6ff"/><stop offset="0.111" stop-color="#00e5ff"/><stop offset="0.148" stop-color="#00e3ff"/><stop offset="0.185" stop-color="#00e2ff"/><stop offset="0.222" stop-color="#00e0ff"/><stop offset="0.259" stop-color="#00dfff"/><stop offset="0.296" stop-color="#1eddff"/><stop offset="0.333" stop-color="#58dbff"/><stop offset="0.370" stop-color="#99d8ff"/><stop offset="0.407" stop-color="#e3d5ff"/><stop offset="0.444" stop-color="#ffadd1"/><stop offset="0.481" stop-color="#ff819f"/><stop offset="0.519" stop-color="#ff637d"/><stop offset="0.556" stop-color="#ff4d63"/><stop offset="0.593" stop-color="#ff3c50"/><stop offset="0.630" stop-color="#ff2e40"/><stop offset="0.667" stop-color="#ff2334"/><stop offset="0.704" stop-color="#ff1a29"/><stop offset="0.741" stop-color="#ff1321"/><stop offset="0.778" stop-color="#ff0c19"/><stop offset="0.815" stop-color="#ff0713"/><stop offset="0.852" stop-color="#ff020d"/><stop offset="0.889" stop-color="#ff0008"/><stop offset="0.926" stop-color="#ff0004"/><stop offset="0.963" stop-color="#ff0000"/><stop offset="1.000" stop-color="#ff0000"/></linearGradient>
<linearGradient id="c118" gradientUnits="userSpaceOnUse" x1="1197.7" x2="1776.1" y1="0" y2="0"><stop offset="0.000" stop-color="#00e3ff"/><stop offset="0.037" stop-color="#00e1ff"/><stop offset="0.074" stop-color="#00e0ff"/><stop offset="0.111" stop-color="#00dfff"/><stop offset="0.148" stop-color="#00ddff"/><stop offset="0.185" stop-color="#00dbff"/><stop offset="0.222" stop-color="#00d9ff"/><stop offset="0.259" stop-color="#00d7ff"/><stop offset="0.296" stop-color="#25d5ff"/><stop offset="0.333" stop-color="#5fd2ff"/><stop offset="0.370" stop-color="#a0cfff"/><stop offset="0.407" stop-color="#eaccff"/><stop offset="0.444" stop-color="#ffa0cc"/><stop offset="0.481" stop-color="#ff789c"/><stop offset="0.519" stop-color="#ff5c7b"/><stop offset="0.556" stop-color="#ff4762"/><stop offset="0.593" stop-color="#ff374f"/><stop offset="0.630" stop-color="#ff2a40"/><stop offset="0.667" stop-color="#ff2033"/><stop offset="0.704" stop-color="#ff1729"/><stop offset="0.741" stop-color="#ff1021"/><stop offset="0.778" stop-color="#ff0a19"/><stop offset="0.815" stop-color="#ff0413"/><stop offset="0.852" stop-color="#ff000d"/><stop offset="0.889" stop-color="#ff0008"/><stop offset="0.926" stop-color="#ff0004"/><stop offset="0.963" stop-color="#ff0000"/><stop offset="1.000" stop-color="#ff0000"/></linearGradient>
<linearGradient id="c119" gradientUnits="userSpaceOnUse" x1="1198.5" x2="1780.1" y1="0" y2="0"><stop offset="0.000" stop-color="#00ddff"/><stop offset="0.037" stop-color="#00dcff"/><stop offset="0.074" stop-color="#00daff"/><stop offset="0.111" stop-color="#00d9ff"/><stop offset="0.148" stop-color="#00d7ff"/><stop offset="0.185" stop-color="#00d5ff"/><stop offset="0.222" stop-color="#00d2ff"/><stop offset="0.259" stop-color="#00d0ff"/><stop offset="0.296" stop-color="#2ccdff"/><stop offset="0.333" stop-color="#66caff"/><stop offset="0.370" stop-color="#a7c7ff"/><stop offset="0.407" stop-color="#f1c3ff"/><stop offset="0.444" stop-color="#ff95c7"/><stop offset="0.481" stop-color="#ff709a"/><stop offset="0.519" stop-color="#ff5579"/><stop offset="0.556" stop-color="#ff4161"/><stop offset="0.593" stop-color="#ff324e"/><stop offset="0.630" stop-color="#ff263f"/><stop offset="0.667" stop-color="#ff1c33"/><stop offset="0.704" stop-color="#ff1429"/><stop offset="0.741" stop-color="#ff0d20"/><stop offset="0.778" stop-color="#ff0719"/><stop offset="0.815" stop-color="#ff0213"/><stop offset="0.852" stop-color="#ff000d"/><stop offset="0.889" stop-color="#ff0009"/><stop offset="0.926" stop-color="#ff0004"/><stop offset="0.963" stop-color="#ff0000"/><stop offset="1.000" stop-color="#ff0000"/></linearGradient>
<linearGradient id="c120" gradientUnits="userSpaceOnUse" x1="1199.4" x2="1784.1" y1="0" y2="0"><stop offset="0.000" stop-color="#00d8ff"/><stop offset="0.037" stop-color="#00d6ff"/><stop offset="0.074" stop-color="#00d5ff"/><stop offset="0.111" stop-color="#00d3ff"/><stop offset="0.148" stop-color="#00d0ff"/><stop offset="0.185" stop-color="#00ceff"/><stop offset="0.222" stop-color="#00ccff"/><stop offset="0.259" stop-color="#00c9ff"/><stop offset="0.296" stop-color="#32c6ff"/><stop offset="0.333" stop-color="#6dc2ff"/><stop offset="0.370" stop-color="#aebeff"/><stop offset="0.407" stop-color="#f9baff"/><stop offset="0.444" stop-color="#ff8ac3"/><stop offset="0.481" stop-color="#ff6897"/><stop offset="0.519" stop-color="#ff4f77"/><stop offset="0.556" stop-color="#ff3c60"/><stop offset="0.593" stop-color="#ff2e4d"/><stop offset="0.630" stop-color="#ff223f"/><stop offset="0.667" stop-color="#ff1933"/><stop offset="0.704" stop-color="#ff1129"/><stop offset="0.741" stop-color="#ff0a20"/><stop offset="0.778" stop-color="#ff0519"/><stop offset="0.815" stop-color="#ff0013"/><stop offset="0.852" stop-color="#ff000d"/><stop offset="0.889" stop-color="#ff0009"/><stop offset="0.926" stop-color="#ff0004"/><stop offset="0.963" stop-color="#ff0001"/><stop offset="1.000" stop-color="#ff0000"/></linearGradient>
<linearGradient id="c121" gradientUnits="userSpaceOnUse" x1="1200.2" x2="1788.0" y1="0" y2="0"><stop offset="0.000" stop-color="#00d3ff"/><stop offset="0.037" stop-color="#00d1ff"/><stop offset="0.074" stop-color="#00cfff"/><stop offset="0.111" stop-color="#00cdff"/><stop offset="0.148" stop-color="#00caff"/><stop offset="0.185" stop-color="#00c8ff"/><stop offset="0.222" stop-color="#00c5ff"/><stop offset="0.259" stop-color="#04c2ff"/><stop offset="0.296" stop-color="#39beff"/><stop offset="0.333" stop-color="#73baff"/><stop offset="0.370" stop-color="#b5b6ff"/><stop offset="0.407" stop-color="#ffb1fe"/><stop offset="0.444" stop-color="#ff80bf"/><stop offset="0.481" stop-color="#ff6094"/><stop offset="0.519" stop-color="#ff4976"/><stop offset="0.556" stop-color="#ff375f"/><stop offset="0.593" stop-color="#ff294d"/><stop offset="0.630" stop-color="#ff1f3e"/><stop offset="0.667" stop-color="#ff1633"/><stop offset="0.704" stop-color="#ff0e29"/><stop offset="0.741" stop-color="#ff0820"/><stop offset="0.778" stop-color="#ff0219"/><stop offset="0.815" stop-color="#ff0013"/><stop offset="0.852" stop-color="#ff000e"/><stop offset="0.889" stop-color="#ff0009"/><stop offset="0.926" stop-color="#ff0005"/><stop offset="0.963" stop-color="#ff0001"/><stop offset="1.000" stop-color="#ff0000"/></linearGradient>
<linearGradient id="c122" gradientUnits="userSpaceOnUse" x1="1201.1" x2="1792.0" y1="0" y2="0"><stop offset="0.000" stop-color="#00ceff"/><stop offset="0.037" stop-color="#00ccff"/><stop offset="0.074" stop-color="#00c9ff"/><stop offset="0.111" stop-color="#00c7ff"/><stop offset="0.148" stop-color="#00c4ff"/><stop offset="0.185" stop-color="#00c1ff"/><stop offset="0.222" stop-color="#00beff"/><stop offset="0.259" stop-color="#0abbff"/><stop offset="0.296" stop-color="#3fb7ff"/><stop offset="0.333" stop-color="#7ab3ff"/><stop offset="0.370" stop-color="#bcaeff"/><stop offset="0.407" stop-color="#ffa3f8"/><stop offset="0.444" stop-color="#ff77bb"/><stop offset="0.481" stop-color="#ff5992"/><stop offset="0.519" stop-color="#ff4374"/><stop offset="0.556" stop-color="#ff325e"/><stop offset="0.593" stop-color="#ff254c"/><stop offset="0.630" stop-color="#ff1b3e"/><stop offset="0.667" stop-color="#ff1232"/><stop offset="0.704" stop-color="#ff0b29"/><stop offset="0.741" stop-color="#ff0520"/><stop offset="0.778" stop-color="#ff0019"/><stop offset="0.815" stop-color="#ff0013"/><stop offset="0.852" stop-color="#ff000e"/><stop offset="0.889" stop-color="#ff0009"/><stop offset="0.926" stop-color="#ff0005"/><stop offset="0.963" stop-color="#ff0001"/><stop offset="1.000" stop-color="#ff0000"/></linearGradient>
<linearGradient id="c123" gradientUnits="userSpaceOnUse" x1="1202.0" x2="1795.9" y1="0" y2="0"><stop offset="0.000" stop-color="#00c9ff"/><stop offset="0.037" stop-color="#00c6ff"/><stop offset="0.074" stop-color="#00c4ff"/><stop offset="0.111" stop-color="#00c1ff"/><stop offset="0.148" stop-color="#00beff"/><stop offset="0.185" stop-color="#00bbff"/><stop offset="0.222" stop-color="#00b8ff"/><stop offset="0.259" stop-color="#10b4ff"/><stop offset="0.296" stop-color="#45b0ff"/><stop offset="0.333" stop-color="#80abff"/><stop offset="0.370" stop-color="#c3a6ff"/><stop offset="0.407" stop-color="#ff97f1"/><stop offset="0.444" stop-color="#ff6eb7"/><stop offset="0.481" stop-color="#ff5290"/><stop offset="0.519" stop-color="#ff3d73"/><stop offset="0.556" stop-color="#ff2e5d"/><stop offset="0.593" stop-color="#ff214b"/><stop offset="0.630" stop-color="#ff173e"/><stop offset="0.667" stop-color="#ff0f32"/><stop offset="0.704" stop-color="#ff0828"/><stop offset="0.741" stop-color="#ff0320"/><stop offset="0.778" stop-color="#ff0019"/><stop offset="0.815" stop-color="#ff0013"/><stop offset="0.852" stop-color="#ff000e"/><stop offset="0.889" stop-color="#ff0009"/><stop offset="0.926" stop-color="#ff0005"/><stop offset="0.963" stop-color="#ff0001"/><stop offset="1.000" stop-color="#ff0000"/></linearGradient>
<linearGradient id="c124" gradientUnits="userSpaceOnUse" x1="1202.8" x2="1799.9" y1="0" y2="0"><stop offset="0.000" stop-color="#00c4ff"/><stop offset="0.036" stop-color="#00c1ff"/><stop offset="0.071" stop-color="#00bfff"/><stop offset="0.107" stop-color="#00bcff"/><stop offset="0.143" stop-color="#00b9ff"/><stop offset="0.179" stop-color="#00b6ff"/><stop offset="0.214" stop-color="#00b2ff"/><stop offset="0.250" stop-color="#0aaeff"/><stop offset="0.286" stop-color="#3caaff"/><stop offset="0.321" stop-color="#73a5ff"/><stop offset="0.357" stop-color="#b1a0ff"/><stop offset="0.393" stop-color="#f69aff"/><stop offset="0.429" stop-color="#ff74c9"/><stop offset="0.464" stop-color="#ff569d"/><stop offset="0.500" stop-color="#ff417e"/><stop offset="0.536" stop-color="#ff3067"/><stop offset="0.571" stop-color="#ff2454"/><stop offset="0.607" stop-color="#ff1945"/><stop offset="0.643" stop-color="#ff1139"/><stop offset="0.679" stop-color="#ff0a2f"/><stop offset="0.714" stop-color="#ff0426"/><stop offset="0.750" stop-color="#ff001e"/><stop offset="0.786" stop-color="#ff0018"/><stop offset="0.821" stop-color="#ff0012"/><stop offset="0.857" stop-color="#ff000d"/><stop offset="0.893" stop-color="#ff0009"/><stop offset="0.929" stop-color="#ff0005"/><stop offset="0.964" stop-color="#ff0001"/><stop offset="1.000" stop-color="#ff0000"/></linearGradient>
<linearGradient id="c125" gradientUnits="userSpaceOnUse" x1="1203.7" x2="1803.9" y1="0" y2="0"><stop offset="0.000" stop-color="#00bfff"/><stop offset="0.036" stop-color="#00bcff"/><stop offset="0.071" stop-color="#00b9ff"/><stop offset="0.107" stop-color="#00b6ff"/><stop offset="0.143" stop-color="#00b3ff"/><stop offset="0.179" stop-color="#00b0ff"/><stop offset="0.214" stop-color="#00acff"/><stop offset="0.250" stop-color="#10a8ff"/><stop offset="0.286" stop-color="#42a3ff"/><stop offset="0.321" stop-color="#799eff"/><stop offset="0.357" stop-color="#b798ff"/><stop offset="0.393" stop-color="#fc92ff"/><stop offset="0.429" stop-color="#ff6bc5"/><stop offset="0.464" stop-color="#ff4f9b"/><stop offset="0.500" stop-color="#ff3b7c"/><stop offset="0.536" stop-color="#ff2c65"/><stop offset="0.571" stop-color="#ff2053"/><stop offset="0.607" stop-color="#ff1645"/><stop offset="0.643" stop-color="#ff0e38"/><stop offset="0.679" stop-color="#ff072e"/><stop offset="0.714" stop-color="#ff0226"/><stop offset="0.750" stop-color="#ff001e"/><stop offset="0.786" stop-color="#ff0018"/><stop offset="0.821" stop-color="#ff0012"/><stop offset="0.857" stop-color="#ff000d"/><stop offset="0.893" stop-color="#ff0009"/><stop offset="0.929" stop-color="#ff0005"/><stop offset="0.964" stop-color="#ff0001"/><stop offset="1.000" stop-color="#ff0000"/></linearGradient>
<linearGradient id="c126" gradientUnits="userSpaceOnUse" x1="1204.6" x2="1807.8" y1="0" y2="0"><stop offset="0.000" stop-color="#00baff"/><stop offset="0.036" stop-color="#00b7ff"/><stop offset="0.071" stop-color="#00b4ff"/><stop offset="0.107" stop-color="#00b1ff"/><stop offset="0.143" stop-color="#00aeff"/><stop offset="0.179" stop-color="#00aaff"/><stop offset="0.214" stop-color="#00a6ff"/><stop offset="0.250" stop-color="#16a1ff"/><stop offset="0.286" stop-color="#489cff"/><stop offset="0.321" stop-color="#8097ff"/><stop offset="0.357" stop-color="#be91ff"/><stop offset="0.393" stop-color="#ff88fb"/><stop offset="0.429" stop-color="#ff62c1"/><stop offset="0.464" stop-color="#ff4998"/><stop offset="0.500" stop-color="#ff367b"/><stop offset="0.536" stop-color="#ff2764"/><stop offset="0.571" stop-color="#ff1c52"/><stop offset="0.607" stop-color="#ff1344"/><stop offset="0.643" stop-color="#ff0b38"/><stop offset="0.679" stop-color="#ff052e"/><stop offset="0.714" stop-color="#ff0026"/><stop offset="0.750" stop-color="#ff001e"/><stop offset="0.786" stop-color="#ff0018"/><stop offset="0.821" stop-color="#ff0012"/><stop offset="0.857" stop-color="#ff000d"/><stop offset="0.893" stop-color="#ff0009"/><stop offset="0.929" stop-color="#ff0005"/><stop offset="0.964" stop-color="#ff0001"/><stop offset="1.000" stop-color="#ff0000"/></linearGradient>
<linearGradient id="c127" gradientUnits="userSpaceOnUse" x1="1205.6" x2="1809.5" y1="0" y2="0"><stop offset="0.000" stop-color="#00b5ff"/><stop offset="0.036" stop-color="#00b2ff"/><stop offset="0.071" stop-color="#00afff"/><stop offset="0.107" stop-color="#00acff"/><stop offset="0.143" stop-color="#00a8ff"/><stop offset="0.179" stop-color="#00a4ff"/><stop offset="0.214" stop-color="#00a0ff"/><stop offset="0.250" stop-color="#1a9bff"/><stop offset="0.286" stop-color="#4c96ff"/><stop offset="0.321" stop-color="#8490ff"/><stop offset="0.357" stop-color="#c18aff"/><stop offset="0.393" stop-color="#ff7ff8"/><stop offset="0.429" stop-color="#ff5cbf"/><stop offset="0.464" stop-color="#ff4398"/><stop offset="0.500" stop-color="#ff317b"/><stop offset="0.536" stop-color="#ff2364"/><stop offset="0.571" stop-color="#ff1953"/><stop offset="0.607" stop-color="#ff1044"/><stop offset="0.643" stop-color="#ff0839"/><stop offset="0.679" stop-color="#ff022f"/><stop offset="0.714" stop-color="#ff0026"/><stop offset="0.750" stop-color="#ff001f"/><stop offset="0.786" stop-color="#ff0019"/><stop offset="0.821" stop-color="#ff0013"/><stop offset="0.857" stop-color="#ff000e"/><stop offset="0.893" stop-color="#ff000a"/><stop offset="0.929" stop-color="#ff0006"/><stop offset="0.964" stop-color="#ff0002"/><stop offset="1.000" stop-color="#ff0000"/></linearGradient>
<linearGradient id="c128" gradientUnits="userSpaceOnUse" x1="1206.5" x2="1801.0" y1="0" y2="0"><stop offset="0.000" stop-color="#00b0ff"/><stop offset="0.036" stop-color="#00adff"/><stop offset="0.071" stop-color="#00aaff"/><stop offset="0.107" stop-color="#00a7ff"/><stop offset="0.143" stop-color="#00a3ff"/><stop offset="0.179" stop-color="#009fff"/><stop offset="0.214" stop-color="#009aff"/><stop offset="0.250" stop-color="#1996ff"/><stop offset="0.286" stop-color="#4a90ff"/><stop offset="0.321" stop-color="#7f8aff"/><stop offset="0.357" stop-color="#ba84ff"/><stop offset="0.393" stop-color="#fc7dff"/><stop offset="0.429" stop-color="#ff5bc7"/><stop offset="0.464" stop-color="#ff439e"/><stop offset="0.500" stop-color="#ff3180"/><stop offset="0.536" stop-color="#ff2369"/><stop offset="0.571" stop-color="#ff1857"/><stop offset="0.607" stop-color="#ff0f49"/><stop offset="0.643" stop-color="#ff083c"/><stop offset="0.679" stop-color="#ff0232"/><stop offset="0.714" stop-color="#ff0029"/><stop offset="0.750" stop-color="#ff0022"/><stop offset="0.786" stop-color="#ff001b"/><stop offset="0.821" stop-color="#ff0016"/><stop offset="0.857" stop-color="#ff0010"/><stop offset="0.893" stop-color="#ff000c"/><stop offset="0.929" stop-color="#ff0008"/><stop offset="0.964" stop-color="#ff0004"/><stop offset="1.000" stop-color="#ff0001"/></linearGradient>
<linearGradient id="c129" gradientUnits="userSpaceOnUse" x1="1207.4" x2="1792.5" y1="0" y2="0"><stop offset="0.000" stop-color="#00acff"/><stop offset="0.037" stop-color="#00a9ff"/><stop offset="0.074" stop-color="#00a5ff"/><stop offset="0.111" stop-color="#00a1ff"/><stop offset="0.148" stop-color="#009dff"/><stop offset="0.185" stop-color="#0099ff"/><stop offset="0.222" stop-color="#0094ff"/><stop offset="0.259" stop-color="#248fff"/><stop offset="0.296" stop-color="#5689ff"/><stop offset="0.333" stop-color="#8d83ff"/><stop offset="0.370" stop-color="#ca7cff"/><stop offset="0.407" stop-color="#ff6df0"/><stop offset="0.444" stop-color="#ff4ebb"/><stop offset="0.481" stop-color="#ff3995"/><stop offset="0.519" stop-color="#ff2879"/><stop offset="0.556" stop-color="#ff1c64"/><stop offset="0.593" stop-color="#ff1253"/><stop offset="0.630" stop-color="#ff0a45"/><stop offset="0.667" stop-color="#ff0339"/><stop offset="0.704" stop-color="#ff002f"/><stop offset="0.741" stop-color="#ff0027"/><stop offset="0.778" stop-color="#ff0020"/><stop offset="0.815" stop-color="#ff0019"/><stop offset="0.852" stop-color="#ff0014"/><stop offset="0.889" stop-color="#ff000f"/><stop offset="0.926" stop-color="#ff000a"/><stop offset="0.963" stop-color="#ff0006"/><stop offset="1.000" stop-color="#ff0003"/></linearGradient>
<linearGradient id="c130" gradientUnits="userSpaceOnUse" x1="1208.4" x2="1784.0" y1="0" y2="0"><stop offset="0.000" stop-color="#00a7ff"/><stop offset="0.037" stop-color="#00a4ff"/><stop offset="0.074" stop-color="#00a0ff"/><stop offset="0.111" stop-color="#009cff"/><stop offset="0.148" stop-color="#0098ff"/><stop offset="0.185" stop-color="#0094ff"/><stop offset="0.222" stop-color="#008fff"/><stop offset="0.259" stop-color="#238aff"/><stop offset="0.296" stop-color="#5384ff"/><stop offset="0.333" stop-color="#887dff"/><stop offset="0.370" stop-color="#c376ff"/><stop offset="0.407" stop-color="#ff6cfa"/><stop offset="0.444" stop-color="#ff4dc3"/><stop offset="0.481" stop-color="#ff389c"/><stop offset="0.519" stop-color="#ff287f"/><stop offset="0.556" stop-color="#ff1b69"/><stop offset="0.593" stop-color="#ff1257"/><stop offset="0.630" stop-color="#ff0a49"/><stop offset="0.667" stop-color="#ff033d"/><stop offset="0.704" stop-color="#ff0033"/><stop offset="0.741" stop-color="#ff002a"/><stop offset="0.778" stop-color="#ff0023"/><stop offset="0.815" stop-color="#ff001c"/><stop offset="0.852" stop-color="#ff0016"/><stop offset="0.889" stop-color="#ff0011"/><stop offset="0.926" stop-color="#ff000d"/><stop offset="0.963" stop-color="#ff0009"/><stop offset="1.000" stop-color="#ff0005"/></linearGradient>
<linearGradient id="c131" gradientUnits="userSpaceOnUse" x1="1209.4" x2="1775.5" y1="0" y2="0"><stop offset="0.000" stop-color="#00a3ff"/><stop offset="0.038" stop-color="#009fff"/><stop offset="0.077" stop-color="#009bff"/><stop offset="0.115" stop-color="#0097ff"/><stop offset="0.154" stop-color="#0093ff"/><stop offset="0.192" stop-color="#008eff"/><stop offset="0.231" stop-color="#0089ff"/><stop offset="0.269" stop-color="#2e83ff"/><stop offset="0.308" stop-color="#5f7dff"/><stop offset="0.346" stop-color="#9676ff"/><stop offset="0.385" stop-color="#d36eff"/><stop offset="0.423" stop-color="#ff5de9"/><stop offset="0.462" stop-color="#ff42b7"/><stop offset="0.500" stop-color="#ff2f93"/><stop offset="0.538" stop-color="#ff2078"/><stop offset="0.577" stop-color="#ff1563"/><stop offset="0.615" stop-color="#ff0c52"/><stop offset="0.654" stop-color="#ff0545"/><stop offset="0.692" stop-color="#ff0039"/><stop offset="0.731" stop-color="#ff0030"/><stop offset="0.769" stop-color="#ff0027"/><stop offset="0.808" stop-color="#ff0020"/><stop offset="0.846" stop-color="#ff001a"/><stop offset="0.885" stop-color="#ff0014"/><stop offset="0.923" stop-color="#ff000f"/><stop offset="0.962" stop-color="#ff000b"/><stop offset="1.000" stop-color="#ff0007"/></linearGradient>
<linearGradient id="c132" gradientUnits="userSpaceOnUse" x1="1210.3" x2="1767.0" y1="0" y2="0"><stop offset="0.000" stop-color="#009eff"/><stop offset="0.038" stop-color="#009bff"/><stop offset="0.077" stop-color="#0097ff"/><stop offset="0.115" stop-color="#0093ff"/><stop offset="0.154" stop-color="#008eff"/><stop offset="0.192" stop-color="#0089ff"/><stop offset="0.231" stop-color="#0084ff"/><stop offset="0.269" stop-color="#2c7eff"/><stop offset="0.308" stop-color="#5c78ff"/><stop offset="0.346" stop-color="#9171ff"/><stop offset="0.385" stop-color="#cc69ff"/><stop offset="0.423" stop-color="#ff5cf2"/><stop offset="0.462" stop-color="#ff41be"/><stop offset="0.500" stop-color="#ff2e99"/><stop offset="0.538" stop-color="#ff1f7e"/><stop offset="0.577" stop-color="#ff1468"/><stop offset="0.615" stop-color="#ff0b57"/><stop offset="0.654" stop-color="#ff0449"/><stop offset="0.692" stop-color="#ff003d"/><stop offset="0.731" stop-color="#ff0033"/><stop offset="0.769" stop-color="#ff002b"/><stop offset="0.808" stop-color="#ff0023"/><stop offset="0.846" stop-color="#ff001d"/><stop offset="0.885" stop-color="#ff0017"/><stop offset="0.923" stop-color="#ff0012"/><stop offset="0.962" stop-color="#ff000d"/><stop offset="1.000" stop-color="#ff0009"/></linearGradient>
<linearGradient id="c133" gradientUnits="userSpaceOnUse" x1="1211.3" x2="1758.5" y1="0" y2="0"><stop offset="0.000" stop-color="#009aff"/><stop offset="0.040" stop-color="#0096ff"/><stop offset="0.080" stop-color="#0092ff"/><stop offset="0.120" stop-color="#008dff"/><stop offset="0.160" stop-color="#0089ff"/><stop offset="0.200" stop-color="#0083ff"/><stop offset="0.240" stop-color="#0a7eff"/><stop offset="0.280" stop-color="#3778ff"/><stop offset="0.320" stop-color="#6971ff"/><stop offset="0.360" stop-color="#9f69ff"/><stop offset="0.400" stop-color="#dc61ff"/><stop offset="0.440" stop-color="#ff4ee2"/><stop offset="0.480" stop-color="#ff36b3"/><stop offset="0.520" stop-color="#ff2590"/><stop offset="0.560" stop-color="#ff1877"/><stop offset="0.600" stop-color="#ff0e62"/><stop offset="0.640" stop-color="#ff0652"/><stop offset="0.680" stop-color="#ff0045"/><stop offset="0.720" stop-color="#ff0039"/><stop offset="0.760" stop-color="#ff0030"/><stop offset="0.800" stop-color="#ff0028"/><stop offset="0.840" stop-color="#ff0021"/><stop offset="0.880" stop-color="#ff001a"/><stop offset="0.920" stop-color="#ff0015"/><stop offset="0.960" stop-color="#ff0010"/><stop offset="1.000" stop-color="#ff000c"/></linearGradient>
<linearGradient id="c134" gradientUnits="userSpaceOnUse" x1="1212.4" x2="1750.0" y1="0" y2="0"><stop offset="0.000" stop-color="#0095ff"/><stop offset="0.040" stop-color="#0091ff"/><stop offset="0.080" stop-color="#008dff"/><stop offset="0.120" stop-color="#0089ff"/><stop offset="0.160" stop-color="#0084ff"/><stop offset="0.200" stop-color="#007fff"/><stop offset="0.240" stop-color="#0979ff"/><stop offset="0.280" stop-color="#3573ff"/><stop offset="0.320" stop-color="#656cff"/><stop offset="0.360" stop-color="#9a65ff"/><stop offset="0.400" stop-color="#d45cff"/><stop offset="0.440" stop-color="#ff4deb"/><stop offset="0.480" stop-color="#ff35ba"/><stop offset="0.520" stop-color="#ff2497"/><stop offset="0.560" stop-color="#ff187c"/><stop offset="0.600" stop-color="#ff0e67"/><stop offset="0.640" stop-color="#ff0657"/><stop offset="0.680" stop-color="#ff0049"/><stop offset="0.720" stop-color="#ff003d"/><stop offset="0.760" stop-color="#ff0034"/><stop offset="0.800" stop-color="#ff002b"/><stop offset="0.840" stop-color="#ff0024"/><stop offset="0.880" stop-color="#ff001d"/><stop offset="0.920" stop-color="#ff0018"/><stop offset="0.960" stop-color="#ff0013"/><stop offset="1.000" stop-color="#ff000e"/></linearGradient>
<linearGradient id="c135" gradientUnits="userSpaceOnUse" x1="1213.4" x2="1741.5" y1="0" y2="0"><stop offset="0.000" stop-color="#0091ff"/><stop offset="0.040" stop-color="#008dff"/><stop offset="0.080" stop-color="#0089ff"/><stop offset="0.120" stop-color="#0084ff"/><stop offset="0.160" stop-color="#0080ff"/><stop offset="0.200" stop-color="#007aff"/><stop offset="0.240" stop-color="#0975ff"/><stop offset="0.280" stop-color="#336eff"/><stop offset="0.320" stop-color="#6268ff"/><stop offset="0.360" stop-color="#9460ff"/><stop offset="0.400" stop-color="#cc58ff"/><stop offset="0.440" stop-color="#ff4cf4"/><stop offset="0.480" stop-color="#ff34c2"/><stop offset="0.520" stop-color="#ff249e"/><stop offset="0.560" stop-color="#ff1782"/><stop offset="0.600" stop-color="#ff0d6d"/><stop offset="0.640" stop-color="#ff055b"/><stop offset="0.680" stop-color="#ff004d"/><stop offset="0.720" stop-color="#ff0041"/><stop offset="0.760" stop-color="#ff0037"/><stop offset="0.800" stop-color="#ff002f"/><stop offset="0.840" stop-color="#ff0027"/><stop offset="0.880" stop-color="#ff0020"/><stop offset="0.920" stop-color="#ff001b"/><stop offset="0.960" stop-color="#ff0015"/><stop offset="1.000" stop-color="#ff0011"/></linearGradient>
<linearGradient id="c136" gradientUnits="userSpaceOnUse" x1="1214.4" x2="1733.0" y1="0" y2="0"><stop offset="0.000" stop-color="#008dff"/><stop offset="0.042" stop-color="#0089ff"/><stop offset="0.083" stop-color="#0084ff"/><stop offset="0.125" stop-color="#007fff"/><stop offset="0.167" stop-color="#007aff"/><stop offset="0.208" stop-color="#0075ff"/><stop offset="0.250" stop-color="#136fff"/><stop offset="0.292" stop-color="#3e68ff"/><stop offset="0.333" stop-color="#6e61ff"/><stop offset="0.375" stop-color="#a359ff"/><stop offset="0.417" stop-color="#dd50ff"/><stop offset="0.458" stop-color="#ff3fe4"/><stop offset="0.500" stop-color="#ff2ab6"/><stop offset="0.542" stop-color="#ff1c95"/><stop offset="0.583" stop-color="#ff107b"/><stop offset="0.625" stop-color="#ff0767"/><stop offset="0.667" stop-color="#ff0056"/><stop offset="0.708" stop-color="#ff0049"/><stop offset="0.750" stop-color="#ff003d"/><stop offset="0.792" stop-color="#ff0034"/><stop offset="0.833" stop-color="#ff002c"/><stop offset="0.875" stop-color="#ff0024"/><stop offset="0.917" stop-color="#ff001e"/><stop offset="0.958" stop-color="#ff0018"/><stop offset="1.000" stop-color="#ff0013"/></linearGradient>
<linearGradient id="c137" gradientUnits="userSpaceOnUse" x1="1215.5" x2="1724.5" y1="0" y2="0"><stop offset="0.000" stop-color="#0089ff"/><stop offset="0.042" stop-color="#0084ff"/><stop offset="0.083" stop-color="#0080ff"/><stop offset="0.125" stop-color="#007bff"/><stop offset="0.167" stop-color="#0076ff"/><stop offset="0.208" stop-color="#0070ff"/><stop offset="0.250" stop-color="#126aff"/><stop offset="0.292" stop-color="#3c64ff"/><stop offset="0.333" stop-color="#6a5cff"/><stop offset="0.375" stop-color="#9d55ff"/><stop offset="0.417" stop-color="#d44cff"/><stop offset="0.458" stop-color="#ff3eed"/><stop offset="0.500" stop-color="#ff2abe"/><stop offset="0.542" stop-color="#ff1b9b"/><stop offset="0.583" stop-color="#ff0f81"/><stop offset="0.625" stop-color="#ff066c"/><stop offset="0.667" stop-color="#ff005b"/><stop offset="0.708" stop-color="#ff004d"/><stop offset="0.750" stop-color="#ff0042"/><stop offset="0.792" stop-color="#ff0038"/><stop offset="0.833" stop-color="#ff002f"/><stop offset="0.875" stop-color="#ff0028"/><stop offset="0.917" stop-color="#ff0021"/><stop offset="0.958" stop-color="#ff001b"/><stop offset="1.000" stop-color="#ff0016"/></linearGradient>
<linearGradient id="c138" gradientUnits="userSpaceOnUse" x1="1216.5" x2="1716.0" y1="0" y2="0"><stop offset="0.000" stop-color="#0084ff"/><stop offset="0.043" stop-color="#0080ff"/><stop offset="0.087" stop-color="#007bff"/><stop offset="0.130" stop-color="#0076ff"/><stop offset="0.174" stop-color="#0071ff"/><stop offset="0.217" stop-color="#006bff"/><stop offset="0.261" stop-color="#1c64ff"/><stop offset="0.304" stop-color="#475dff"/><stop offset="0.348" stop-color="#7756ff"/><stop offset="0.391" stop-color="#ab4dff"/><stop offset="0.435" stop-color="#e544ff"/><stop offset="0.478" stop-color="#ff32de"/><stop offset="0.522" stop-color="#ff20b2"/><stop offset="0.565" stop-color="#ff1392"/><stop offset="0.609" stop-color="#ff0979"/><stop offset="0.652" stop-color="#ff0166"/><stop offset="0.696" stop-color="#ff0056"/><stop offset="0.739" stop-color="#ff0049"/><stop offset="0.783" stop-color="#ff003e"/><stop offset="0.826" stop-color="#ff0034"/><stop offset="0.870" stop-color="#ff002c"/><stop offset="0.913" stop-color="#ff0025"/><stop offset="0.957" stop-color="#ff001e"/><stop offset="1.000" stop-color="#ff0019"/></linearGradient>
<linearGradient id="c139" gradientUnits="userSpaceOnUse" x1="1217.6" x2="1707.5" y1="0" y2="0"><stop offset="0.000" stop-color="#0080ff"/><stop offset="0.043" stop-color="#007cff"/><stop offset="0.087" stop-color="#0077ff"/><stop offset="0.130" stop-color="#0072ff"/><stop offset="0.174" stop-color="#006dff"/><stop offset="0.217" stop-color="#0067ff"/><stop offset="0.261" stop-color="#1b60ff"/><stop offset="0.304" stop-color="#4559ff"/><stop offset="0.348" stop-color="#7352ff"/><stop offset="0.391" stop-color="#a549ff"/><stop offset="0.435" stop-color="#dd40ff"/><stop offset="0.478" stop-color="#ff31e7"/><stop offset="0.522" stop-color="#ff1fba"/><stop offset="0.565" stop-color="#ff1299"/><stop offset="0.609" stop-color="#ff087f"/><stop offset="0.652" stop-color="#ff006b"/><stop offset="0.696" stop-color="#ff005b"/><stop offset="0.739" stop-color="#ff004d"/><stop offset="0.783" stop-color="#ff0042"/><stop offset="0.826" stop-color="#ff0038"/><stop offset="0.870" stop-color="#ff002f"/><stop offset="0.913" stop-color="#ff0028"/><stop offset="0.957" stop-color="#ff0022"/><stop offset="1.000" stop-color="#ff001c"/></linearGradient>
<linearGradient id="c140" gradientUnits="userSpaceOnUse" x1="1218.7" x2="1699.0" y1="0" y2="0"><stop offset="0.000" stop-color="#007cff"/><stop offset="0.045" stop-color="#0078ff"/><stop offset="0.091" stop-color="#0073ff"/><stop offset="0.136" stop-color="#006dff"/><stop offset="0.182" stop-color="#0067ff"/><stop offset="0.227" stop-color="#0061ff"/><stop offset="0.273" stop-color="#255aff"/><stop offset="0.318" stop-color="#5053ff"/><stop offset="0.364" stop-color="#804bff"/><stop offset="0.409" stop-color="#b442ff"/><stop offset="0.455" stop-color="#ee38ff"/><stop offset="0.500" stop-color="#ff26d7"/><stop offset="0.545" stop-color="#ff17ae"/><stop offset="0.591" stop-color="#ff0b90"/><stop offset="0.636" stop-color="#ff0278"/><stop offset="0.682" stop-color="#ff0065"/><stop offset="0.727" stop-color="#ff0055"/><stop offset="0.773" stop-color="#ff0048"/><stop offset="0.818" stop-color="#ff003e"/><stop offset="0.864" stop-color="#ff0034"/><stop offset="0.909" stop-color="#ff002c"/><stop offset="0.955" stop-color="#ff0025"/><stop offset="1.000" stop-color="#ff001f"/></linearGradient>
<linearGradient id="c141" gradientUnits="userSpaceOnUse" x1="1219.8" x2="1690.5" y1="0" y2="0"><stop offset="0.000" stop-color="#0078ff"/><stop offset="0.045" stop-color="#0073ff"/><stop offset="0.091" stop-color="#006fff"/><stop offset="0.136" stop-color="#0069ff"/><stop offset="0.182" stop-color="#0063ff"/><stop offset="0.227" stop-color="#005dff"/><stop offset="0.273" stop-color="#2356ff"/><stop offset="0.318" stop-color="#4d4fff"/><stop offset="0.364" stop-color="#7b47ff"/><stop offset="0.409" stop-color="#ae3fff"/><stop offset="0.455" stop-color="#e535ff"/><stop offset="0.500" stop-color="#ff25e1"/><stop offset="0.545" stop-color="#ff16b6"/><stop offset="0.591" stop-color="#ff0a96"/><stop offset="0.636" stop-color="#ff027e"/><stop offset="0.682" stop-color="#ff006a"/><stop offset="0.727" stop-color="#ff005a"/><stop offset="0.773" stop-color="#ff004d"/><stop offset="0.818" stop-color="#ff0042"/><stop offset="0.864" stop-color="#ff0038"/><stop offset="0.909" stop-color="#ff0030"/><stop offset="0.955" stop-color="#ff0028"/><stop offset="1.000" stop-color="#ff0022"/></linearGradient>
<linearGradient id="c142" gradientUnits="userSpaceOnUse" x1="1220.9" x2="1682.0" y1="0" y2="0"><stop offset="0.000" stop-color="#0074ff"/><stop offset="0.048" stop-color="#006fff"/><stop offset="0.095" stop-color="#006aff"/><stop offset="0.143" stop-color="#0064ff"/><stop offset="0.190" stop-color="#005eff"/><stop offset="0.238" stop-color="#0558ff"/><stop offset="0.286" stop-color="#2d51ff"/><stop offset="0.333" stop-color="#5949ff"/><stop offset="0.381" stop-color="#8940ff"/><stop offset="0.429" stop-color="#bd37ff"/><stop offset="0.476" stop-color="#f72dff"/><stop offset="0.524" stop-color="#ff1cd1"/><stop offset="0.571" stop-color="#ff0eaa"/><stop offset="0.619" stop-color="#ff048d"/><stop offset="0.667" stop-color="#ff0076"/><stop offset="0.714" stop-color="#ff0064"/><stop offset="0.762" stop-color="#ff0055"/><stop offset="0.810" stop-color="#ff0048"/><stop offset="0.857" stop-color="#ff003d"/><stop offset="0.905" stop-color="#ff0034"/><stop offset="0.952" stop-color="#ff002c"/><stop offset="1.000" stop-color="#ff0025"/></linearGradient>
<linearGradient id="c143" gradientUnits="userSpaceOnUse" x1="1222.1" x2="1673.5" y1="0" y2="0"><stop offset="0.000" stop-color="#0070ff"/><stop offset="0.048" stop-color="#006bff"/><stop offset="0.095" stop-color="#0066ff"/><stop offset="0.143" stop-color="#0060ff"/><stop offset="0.190" stop-color="#005aff"/><stop offset="0.238" stop-color="#0554ff"/><stop offset="0.286" stop-color="#2c4dff"/><stop offset="0.333" stop-color="#5645ff"/><stop offset="0.381" stop-color="#843dff"/><stop offset="0.429" stop-color="#b634ff"/><stop offset="0.476" stop-color="#ed2aff"/><stop offset="0.524" stop-color="#ff1bda"/><stop offset="0.571" stop-color="#ff0db2"/><stop offset="0.619" stop-color="#ff0394"/><stop offset="0.667" stop-color="#ff007c"/><stop offset="0.714" stop-color="#ff0069"/><stop offset="0.762" stop-color="#ff005a"/><stop offset="0.810" stop-color="#ff004d"/><stop offset="0.857" stop-color="#ff0042"/><stop offset="0.905" stop-color="#ff0038"/><stop offset="0.952" stop-color="#ff0030"/><stop offset="1.000" stop-color="#ff0029"/></linearGradient>
<linearGradient id="c144" gradientUnits="userSpaceOnUse" x1="1223.3" x2="1665.0" y1="0" y2="0"><stop offset="0.000" stop-color="#006cff"/><stop offset="0.048" stop-color="#0067ff"/><stop offset="0.095" stop-color="#0062ff"/><stop offset="0.143" stop-color="#005dff"/><stop offset="0.190" stop-color="#0057ff"/><stop offset="0.238" stop-color="#0550ff"/><stop offset="0.286" stop-color="#2b49ff"/><stop offset="0.333" stop-color="#5342ff"/><stop offset="0.381" stop-color="#7f3aff"/><stop offset="0.429" stop-color="#af31ff"/><stop offset="0.476" stop-color="#e427ff"/><stop offset="0.524" stop-color="#ff19e4"/><stop offset="0.571" stop-color="#ff0cba"/><stop offset="0.619" stop-color="#ff029b"/><stop offset="0.667" stop-color="#ff0083"/><stop offset="0.714" stop-color="#ff006f"/><stop offset="0.762" stop-color="#ff005f"/><stop offset="0.810" stop-color="#ff0051"/><stop offset="0.857" stop-color="#ff0046"/><stop offset="0.905" stop-color="#ff003c"/><stop offset="0.952" stop-color="#ff0034"/><stop offset="1.000" stop-color="#ff002c"/></linearGradient>
<linearGradient id="c145" gradientUnits="userSpaceOnUse" x1="1224.5" x2="1656.5" y1="0" y2="0"><stop offset="0.000" stop-color="#0068ff"/><stop offset="0.050" stop-color="#0063ff"/><stop offset="0.100" stop-color="#005eff"/><stop offset="0.150" stop-color="#0058ff"/><stop offset="0.200" stop-color="#0052ff"/><stop offset="0.250" stop-color="#0e4bff"/><stop offset="0.300" stop-color="#3544ff"/><stop offset="0.350" stop-color="#5f3cff"/><stop offset="0.400" stop-color="#8d33ff"/><stop offset="0.450" stop-color="#bf29ff"/><stop offset="0.500" stop-color="#f61fff"/><stop offset="0.550" stop-color="#ff10d4"/><stop offset="0.600" stop-color="#ff05ae"/><stop offset="0.650" stop-color="#ff0091"/><stop offset="0.700" stop-color="#ff007b"/><stop offset="0.750" stop-color="#ff0068"/><stop offset="0.800" stop-color="#ff0059"/><stop offset="0.850" stop-color="#ff004c"/><stop offset="0.900" stop-color="#ff0042"/><stop offset="0.950" stop-color="#ff0038"/><stop offset="1.000" stop-color="#ff0030"/></linearGradient>
<linearGradient id="c146" gradientUnits="userSpaceOnUse" x1="1225.7" x2="1648.0" y1="0" y2="0"><stop offset="0.000" stop-color="#0065ff"/><stop offset="0.050" stop-color="#0060ff"/><stop offset="0.100" stop-color="#005aff"/><stop offset="0.150" stop-color="#0054ff"/><stop offset="0.200" stop-color="#004eff"/><stop offset="0.250" stop-color="#0d47ff"/><stop offset="0.300" stop-color="#3340ff"/><stop offset="0.350" stop-color="#5c38ff"/><stop offset="0.400" stop-color="#8830ff"/><stop offset="0.450" stop-color="#b727ff"/><stop offset="0.500" stop-color="#ec1dff"/><stop offset="0.550" stop-color="#ff0fde"/><stop offset="0.600" stop-color="#ff04b7"/><stop offset="0.650" stop-color="#ff0099"/><stop offset="0.700" stop-color="#ff0081"/><stop offset="0.750" stop-color="#ff006e"/><stop offset="0.800" stop-color="#ff005e"/><stop offset="0.850" stop-color="#ff0051"/><stop offset="0.900" stop-color="#ff0046"/><stop offset="0.950" stop-color="#ff003c"/><stop offset="1.000" stop-color="#ff0034"/></linearGradient>
<linearGradient id="c147" gradientUnits="userSpaceOnUse" x1="1227.0" x2="1639.5" y1="0" y2="0"><stop offset="0.000" stop-color="#0061ff"/><stop offset="0.053" stop-color="#005cff"/><stop offset="0.105" stop-color="#0056ff"/><stop offset="0.158" stop-color="#0050ff"/><stop offset="0.211" stop-color="#0049ff"/><stop offset="0.263" stop-color="#1642ff"/><stop offset="0.316" stop-color="#3d3aff"/><stop offset="0.368" stop-color="#6832ff"/><stop offset="0.421" stop-color="#9529ff"/><stop offset="0.474" stop-color="#c81fff"/><stop offset="0.526" stop-color="#fe15ff"/><stop offset="0.579" stop-color="#ff07cf"/><stop offset="0.632" stop-color="#ff00ab"/><stop offset="0.684" stop-color="#ff008f"/><stop offset="0.737" stop-color="#ff0079"/><stop offset="0.789" stop-color="#ff0067"/><stop offset="0.842" stop-color="#ff0058"/><stop offset="0.895" stop-color="#ff004c"/><stop offset="0.947" stop-color="#ff0041"/><stop offset="1.000" stop-color="#ff0038"/></linearGradient>
<linearGradient id="c148" gradientUnits="userSpaceOnUse" x1="1228.3" x2="1631.0" y1="0" y2="0"><stop offset="0.000" stop-color="#005dff"/><stop offset="0.053" stop-color="#0058ff"/><stop offset="0.105" stop-color="#0052ff"/><stop offset="0.158" stop-color="#004cff"/><stop offset="0.211" stop-color="#0046ff"/><stop offset="0.263" stop-color="#163fff"/><stop offset="0.316" stop-color="#3b37ff"/><stop offset="0.368" stop-color="#642fff"/><stop offset="0.421" stop-color="#9026ff"/><stop offset="0.474" stop-color="#c01dff"/><stop offset="0.526" stop-color="#f412ff"/><stop offset="0.579" stop-color="#ff06d8"/><stop offset="0.632" stop-color="#ff00b3"/><stop offset="0.684" stop-color="#ff0096"/><stop offset="0.737" stop-color="#ff007f"/><stop offset="0.789" stop-color="#ff006d"/><stop offset="0.842" stop-color="#ff005e"/><stop offset="0.895" stop-color="#ff0051"/><stop offset="0.947" stop-color="#ff0046"/><stop offset="1.000" stop-color="#ff003c"/></linearGradient>
<linearGradient id="c149" gradientUnits="userSpaceOnUse" x1="1229.6" x2="1622.5" y1="0" y2="0"><stop offset="0.000" stop-color="#0059ff"/><stop offset="0.056" stop-color="#0054ff"/><stop offset="0.111" stop-color="#004eff"/><stop offset="0.167" stop-color="#0048ff"/><stop offset="0.222" stop-color="#0041ff"/><stop offset="0.278" stop-color="#1f39ff"/><stop offset="0.333" stop-color="#4631ff"/><stop offset="0.389" stop-color="#7129ff"/><stop offset="0.444" stop-color="#9e1fff"/><stop offset="0.500" stop-color="#d015ff"/><stop offset="0.556" stop-color="#ff0af7"/><stop offset="0.611" stop-color="#ff00c9"/><stop offset="0.667" stop-color="#ff00a7"/><stop offset="0.722" stop-color="#ff008c"/><stop offset="0.778" stop-color="#ff0077"/><stop offset="0.833" stop-color="#ff0066"/><stop offset="0.889" stop-color="#ff0057"/><stop offset="0.944" stop-color="#ff004b"/><stop offset="1.000" stop-color="#ff0041"/></linearGradient>
<linearGradient id="c150" gradientUnits="userSpaceOnUse" x1="1231.0" x2="1614.0" y1="0" y2="0"><stop offset="0.000" stop-color="#0056ff"/><stop offset="0.056" stop-color="#0050ff"/><stop offset="0.111" stop-color="#004aff"/><stop offset="0.167" stop-color="#0044ff"/><stop offset="0.222" stop-color="#003dff"/><stop offset="0.278" stop-color="#1e36ff"/><stop offset="0.333" stop-color="#442eff"/><stop offset="0.389" stop-color="#6c26ff"/><stop offset="0.444" stop-color="#981dff"/><stop offset="0.500" stop-color="#c813ff"/><stop offset="0.556" stop-color="#fc08ff"/><stop offset="0.611" stop-color="#ff00d2"/><stop offset="0.667" stop-color="#ff00af"/><stop offset="0.722" stop-color="#ff0094"/><stop offset="0.778" stop-color="#ff007e"/><stop offset="0.833" stop-color="#ff006c"/><stop offset="0.889" stop-color="#ff005d"/><stop offset="0.944" stop-color="#ff0050"/><stop offset="1.000" stop-color="#ff0046"/></linearGradient>
<linearGradient id="c151" gradientUnits="userSpaceOnUse" x1="1232.3" x2="1605.5" y1="0" y2="0"><stop offset="0.000" stop-color="#0052ff"/><stop offset="0.059" stop-color="#004cff"/><stop offset="0.118" stop-color="#0046ff"/><stop offset="0.176" stop-color="#0040ff"/><stop offset="0.235" stop-color="#0438ff"/><stop offset="0.294" stop-color="#2831ff"/><stop offset="0.353" stop-color="#4f29ff"/><stop offset="0.412" stop-color="#7920ff"/><stop offset="0.471" stop-color="#a716ff"/><stop offset="0.529" stop-color="#da0bff"/><stop offset="0.588" stop-color="#ff00ef"/><stop offset="0.647" stop-color="#ff00c4"/><stop offset="0.706" stop-color="#ff00a3"/><stop offset="0.765" stop-color="#ff008a"/><stop offset="0.824" stop-color="#ff0075"/><stop offset="0.882" stop-color="#ff0065"/><stop offset="0.941" stop-color="#ff0057"/><stop offset="1.000" stop-color="#ff004b"/></linearGradient>
<linearGradient id="c152" gradientUnits="userSpaceOnUse" x1="1233.7" x2="1597.0" y1="0" y2="0"><stop offset="0.000" stop-color="#004eff"/><stop offset="0.059" stop-color="#0049ff"/><stop offset="0.118" stop-color="#0043ff"/><stop offset="0.176" stop-color="#003cff"/><stop offset="0.235" stop-color="#0435ff"/><stop offset="0.294" stop-color="#272eff"/><stop offset="0.353" stop-color="#4c26ff"/><stop offset="0.412" stop-color="#751dff"/><stop offset="0.471" stop-color="#a114ff"/><stop offset="0.529" stop-color="#d00aff"/><stop offset="0.588" stop-color="#ff00fa"/><stop offset="0.647" stop-color="#ff00cd"/><stop offset="0.706" stop-color="#ff00ab"/><stop offset="0.765" stop-color="#ff0091"/><stop offset="0.824" stop-color="#ff007c"/><stop offset="0.882" stop-color="#ff006b"/><stop offset="0.941" stop-color="#ff005c"/><stop offset="1.000" stop-color="#ff0050"/></linearGradient>
<linearGradient id="c153" gradientUnits="userSpaceOnUse" x1="1235.1" x2="1588.5" y1="0" y2="0"><stop offset="0.000" stop-color="#004bff"/><stop offset="0.059" stop-color="#0045ff"/><stop offset="0.118" stop-color="#003fff"/><stop offset="0.176" stop-color="#0039ff"/><stop offset="0.235" stop-color="#0432ff"/><stop offset="0.294" stop-color="#262bff"/><stop offset="0.353" stop-color="#4a23ff"/><stop offset="0.412" stop-color="#711bff"/><stop offset="0.471" stop-color="#9a11ff"/><stop offset="0.529" stop-color="#c808ff"/><stop offset="0.588" stop-color="#f900ff"/><stop offset="0.647" stop-color="#ff00d7"/><stop offset="0.706" stop-color="#ff00b4"/><stop offset="0.765" stop-color="#ff0099"/><stop offset="0.824" stop-color="#ff0083"/><stop offset="0.882" stop-color="#ff0071"/><stop offset="0.941" stop-color="#ff0062"/><stop offset="1.000" stop-color="#ff0056"/></linearGradient>
<linearGradient id="c154" gradientUnits="userSpaceOnUse" x1="1236.5" x2="1580.0" y1="0" y2="0"><stop offset="0.000" stop-color="#0047ff"/><stop offset="0.062" stop-color="#0041ff"/><stop offset="0.125" stop-color="#003bff"/><stop offset="0.188" stop-color="#0034ff"/><stop offset="0.250" stop-color="#0c2dff"/><stop offset="0.312" stop-color="#2f26ff"/><stop offset="0.375" stop-color="#551dff"/><stop offset="0.438" stop-color="#7d14ff"/><stop offset="0.500" stop-color="#a90bff"/><stop offset="0.562" stop-color="#d900ff"/><stop offset="0.625" stop-color="#ff00f2"/><stop offset="0.688" stop-color="#ff00c8"/><stop offset="0.750" stop-color="#ff00a8"/><stop offset="0.812" stop-color="#ff008f"/><stop offset="0.875" stop-color="#ff007a"/><stop offset="0.938" stop-color="#ff0069"/><stop offset="1.000" stop-color="#ff005b"/></linearGradient>
<linearGradient id="c155" gradientUnits="userSpaceOnUse" x1="1238.0" x2="1571.5" y1="0" y2="0"><stop offset="0.000" stop-color="#0044ff"/><stop offset="0.062" stop-color="#003eff"/><stop offset="0.125" stop-color="#0038ff"/><stop offset="0.188" stop-color="#0031ff"/><stop offset="0.250" stop-color="#0c2aff"/><stop offset="0.312" stop-color="#2e23ff"/><stop offset="0.375" stop-color="#521bff"/><stop offset="0.438" stop-color="#7912ff"/><stop offset="0.500" stop-color="#a209ff"/><stop offset="0.562" stop-color="#cf00ff"/><stop offset="0.625" stop-color="#ff00fe"/><stop offset="0.688" stop-color="#ff00d2"/><stop offset="0.750" stop-color="#ff00b1"/><stop offset="0.812" stop-color="#ff0097"/><stop offset="0.875" stop-color="#ff0082"/><stop offset="0.938" stop-color="#ff0070"/><stop offset="1.000" stop-color="#ff0062"/></linearGradient>
<linearGradient id="c156" gradientUnits="userSpaceOnUse" x1="1239.4" x2="1562.9" y1="0" y2="0"><stop offset="0.000" stop-color="#0040ff"/><stop offset="0.067" stop-color="#003aff"/><stop offset="0.133" stop-color="#0034ff"/><stop offset="0.200" stop-color="#002dff"/><stop offset="0.267" stop-color="#1525ff"/><stop offset="0.333" stop-color="#381dff"/><stop offset="0.400" stop-color="#5d15ff"/><stop offset="0.467" stop-color="#860cff"/><stop offset="0.533" stop-color="#b202ff"/><stop offset="0.600" stop-color="#e200ff"/><stop offset="0.667" stop-color="#ff00ea"/><stop offset="0.733" stop-color="#ff00c3"/><stop offset="0.800" stop-color="#ff00a4"/><stop offset="0.867" stop-color="#ff008c"/><stop offset="0.933" stop-color="#ff0078"/><stop offset="1.000" stop-color="#ff0068"/></linearGradient>
<linearGradient id="c157" gradientUnits="userSpaceOnUse" x1="1240.8" x2="1554.4" y1="0" y2="0"><stop offset="0.000" stop-color="#003dff"/><stop offset="0.067" stop-color="#0037ff"/><stop offset="0.133" stop-color="#0031ff"/><stop offset="0.200" stop-color="#002aff"/><stop offset="0.267" stop-color="#1423ff"/><stop offset="0.333" stop-color="#361bff"/><stop offset="0.400" stop-color="#5a13ff"/><stop offset="0.467" stop-color="#800aff"/><stop offset="0.533" stop-color="#aa00ff"/><stop offset="0.600" stop-color="#d700ff"/><stop offset="0.667" stop-color="#ff00f6"/><stop offset="0.733" stop-color="#ff00cd"/><stop offset="0.800" stop-color="#ff00ad"/><stop offset="0.867" stop-color="#ff0094"/><stop offset="0.933" stop-color="#ff0080"/><stop offset="1.000" stop-color="#ff006f"/></linearGradient>
<linearGradient id="c158" gradientUnits="userSpaceOnUse" x1="1242.3" x2="1545.9" y1="0" y2="0"><stop offset="0.000" stop-color="#0039ff"/><stop offset="0.071" stop-color="#0033ff"/><stop offset="0.143" stop-color="#002cff"/><stop offset="0.214" stop-color="#0025ff"/><stop offset="0.286" stop-color="#1d1eff"/><stop offset="0.357" stop-color="#4016ff"/><stop offset="0.429" stop-color="#660dff"/><stop offset="0.500" stop-color="#8f03ff"/><stop offset="0.571" stop-color="#bb00ff"/><stop offset="0.643" stop-color="#ea00ff"/><stop offset="0.714" stop-color="#ff00e3"/><stop offset="0.786" stop-color="#ff00be"/><stop offset="0.857" stop-color="#ff00a1"/><stop offset="0.929" stop-color="#ff0089"/><stop offset="1.000" stop-color="#ff0077"/></linearGradient>
<linearGradient id="c159" gradientUnits="userSpaceOnUse" x1="1243.7" x2="1537.4" y1="0" y2="0"><stop offset="0.000" stop-color="#0036ff"/><stop offset="0.071" stop-color="#0030ff"/><stop offset="0.143" stop-color="#0029ff"/><stop offset="0.214" stop-color="#0022ff"/><stop offset="0.286" stop-color="#1c1bff"/><stop offset="0.357" stop-color="#3e13ff"/><stop offset="0.429" stop-color="#620bff"/><stop offset="0.500" stop-color="#8802ff"/><stop offset="0.571" stop-color="#b200ff"/><stop offset="0.643" stop-color="#df00ff"/><stop offset="0.714" stop-color="#ff00ef"/><stop offset="0.786" stop-color="#ff00c8"/><stop offset="0.857" stop-color="#ff00aa"/><stop offset="0.929" stop-color="#ff0092"/><stop offset="1.000" stop-color="#ff007e"/></linearGradient>
<linearGradient id="c160" gradientUnits="userSpaceOnUse" x1="1245.2" x2="1528.9" y1="0" y2="0"><stop offset="0.000" stop-color="#0033ff"/><stop offset="0.077" stop-color="#002cff"/><stop offset="0.154" stop-color="#0025ff"/><stop offset="0.231" stop-color="#041eff"/><stop offset="0.308" stop-color="#2516ff"/><stop offset="0.385" stop-color="#480eff"/><stop offset="0.462" stop-color="#6e05ff"/><stop offset="0.538" stop-color="#9700ff"/><stop offset="0.615" stop-color="#c300ff"/><stop offset="0.692" stop-color="#f300ff"/><stop offset="0.769" stop-color="#ff00dc"/><stop offset="0.846" stop-color="#ff00b9"/><stop offset="0.923" stop-color="#ff009d"/><stop offset="1.000" stop-color="#ff0087"/></linearGradient>
<linearGradient id="c161" gradientUnits="userSpaceOnUse" x1="1246.8" x2="1520.4" y1="0" y2="0"><stop offset="0.000" stop-color="#002fff"/><stop offset="0.077" stop-color="#0029ff"/><stop offset="0.154" stop-color="#0022ff"/><stop offset="0.231" stop-color="#051bff"/><stop offset="0.308" stop-color="#2414ff"/><stop offset="0.385" stop-color="#460cff"/><stop offset="0.462" stop-color="#6a03ff"/><stop offset="0.538" stop-color="#9000ff"/><stop offset="0.615" stop-color="#ba00ff"/><stop offset="0.692" stop-color="#e700ff"/><stop offset="0.769" stop-color="#ff00e9"/><stop offset="0.846" stop-color="#ff00c4"/><stop offset="0.923" stop-color="#ff00a7"/><stop offset="1.000" stop-color="#ff0090"/></linearGradient>
<linearGradient id="c162" gradientUnits="userSpaceOnUse" x1="1248.3" x2="1511.9" y1="0" y2="0"><stop offset="0.000" stop-color="#002cff"/><stop offset="0.083" stop-color="#0025ff"/><stop offset="0.167" stop-color="#001eff"/><stop offset="0.250" stop-color="#0c17ff"/><stop offset="0.333" stop-color="#2d0fff"/><stop offset="0.417" stop-color="#5106ff"/><stop offset="0.500" stop-color="#7700ff"/><stop offset="0.583" stop-color="#a000ff"/><stop offset="0.667" stop-color="#cd00ff"/><stop offset="0.750" stop-color="#fd00ff"/><stop offset="0.833" stop-color="#ff00d5"/><stop offset="0.917" stop-color="#ff00b4"/><stop offset="1.000" stop-color="#ff0099"/></linearGradient>
<linearGradient id="c163" gradientUnits="userSpaceOnUse" x1="1250.0" x2="1503.4" y1="0" y2="0"><stop offset="0.000" stop-color="#0029ff"/><stop offset="0.083" stop-color="#0022ff"/><stop offset="0.167" stop-color="#001bff"/><stop offset="0.250" stop-color="#0c14ff"/><stop offset="0.333" stop-color="#2c0cff"/><stop offset="0.417" stop-color="#4e04ff"/><stop offset="0.500" stop-color="#7200ff"/><stop offset="0.583" stop-color="#9800ff"/><stop offset="0.667" stop-color="#c200ff"/><stop offset="0.750" stop-color="#ef00ff"/><stop offset="0.833" stop-color="#ff00e2"/><stop offset="0.917" stop-color="#ff00bf"/><stop offset="1.000" stop-color="#ff00a4"/></linearGradient>
<linearGradient id="c164" gradientUnits="userSpaceOnUse" x1="1251.6" x2="1494.9" y1="0" y2="0"><stop offset="0.000" stop-color="#0025ff"/><stop offset="0.083" stop-color="#001fff"/><stop offset="0.167" stop-color="#0019ff"/><stop offset="0.250" stop-color="#0d12ff"/><stop offset="0.333" stop-color="#2b0aff"/><stop offset="0.417" stop-color="#4b02ff"/><stop offset="0.500" stop-color="#6d00ff"/><stop offset="0.583" stop-color="#9100ff"/><stop offset="0.667" stop-color="#b800ff"/><stop offset="0.750" stop-color="#e200ff"/><stop offset="0.833" stop-color="#ff00f0"/><stop offset="0.917" stop-color="#ff00cc"/><stop offset="1.000" stop-color="#ff00af"/></linearGradient>
<linearGradient id="c165" gradientUnits="userSpaceOnUse" x1="1253.3" x2="1486.4" y1="0" y2="0"><stop offset="0.000" stop-color="#0022ff"/><stop offset="0.091" stop-color="#001cff"/><stop offset="0.182" stop-color="#0015ff"/><stop offset="0.273" stop-color="#140dff"/><stop offset="0.364" stop-color="#3405ff"/><stop offset="0.455" stop-color="#5600ff"/><stop offset="0.545" stop-color="#7a00ff"/><stop offset="0.636" stop-color="#a100ff"/><stop offset="0.727" stop-color="#ca00ff"/><stop offset="0.818" stop-color="#f700ff"/><stop offset="0.909" stop-color="#ff00dc"/><stop offset="1.000" stop-color="#ff00bb"/></linearGradient>
<linearGradient id="c166" gradientUnits="userSpaceOnUse" x1="1255.0" x2="1477.9" y1="0" y2="0"><stop offset="0.000" stop-color="#001fff"/><stop offset="0.091" stop-color="#0019ff"/><stop offset="0.182" stop-color="#0012ff"/><stop offset="0.273" stop-color="#140bff"/><stop offset="0.364" stop-color="#3203ff"/><stop offset="0.455" stop-color="#5200ff"/><stop offset="0.545" stop-color="#7400ff"/><stop offset="0.636" stop-color="#9800ff"/><stop offset="0.727" stop-color="#bf00ff"/><stop offset="0.818" stop-color="#e800ff"/><stop offset="0.909" stop-color="#ff00eb"/><stop offset="1.000" stop-color="#ff00c8"/></linearGradient>
<linearGradient id="c167" gradientUnits="userSpaceOnUse" x1="1256.7" x2="1469.4" y1="0" y2="0"><stop offset="0.000" stop-color="#001cff"/><stop offset="0.100" stop-color="#0015ff"/><stop offset="0.200" stop-color="#000eff"/><stop offset="0.300" stop-color="#1c06ff"/><stop offset="0.400" stop-color="#3c00ff"/><stop offset="0.500" stop-color="#5e00ff"/><stop offset="0.600" stop-color="#8200ff"/><stop offset="0.700" stop-color="#a900ff"/><stop offset="0.800" stop-color="#d200ff"/><stop offset="0.900" stop-color="#ff00ff"/><stop offset="1.000" stop-color="#ff00d6"/></linearGradient>
<linearGradient id="c168" gradientUnits="userSpaceOnUse" x1="1258.5" x2="1460.9" y1="0" y2="0"><stop offset="0.000" stop-color="#0018ff"/><stop offset="0.100" stop-color="#0012ff"/><stop offset="0.200" stop-color="#000bff"/><stop offset="0.300" stop-color="#1c04ff"/><stop offset="0.400" stop-color="#3a00ff"/><stop offset="0.500" stop-color="#5900ff"/><stop offset="0.600" stop-color="#7b00ff"/><stop offset="0.700" stop-color="#9f00ff"/><stop offset="0.800" stop-color="#c600ff"/><stop offset="0.900" stop-color="#ef00ff"/><stop offset="1.000" stop-color="#ff00e6"/></linearGradient>
<linearGradient id="c169" gradientUnits="userSpaceOnUse" x1="1260.3" x2="1452.4" y1="0" y2="0"><stop offset="0.000" stop-color="#0015ff"/><stop offset="0.111" stop-color="#000eff"/><stop offset="0.222" stop-color="#0707ff"/><stop offset="0.333" stop-color="#2500ff"/><stop offset="0.444" stop-color="#4400ff"/><stop offset="0.556" stop-color="#6600ff"/><stop offset="0.667" stop-color="#8a00ff"/><stop offset="0.778" stop-color="#b100ff"/><stop offset="0.889" stop-color="#db00ff"/><stop offset="1.000" stop-color="#ff00f7"/></linearGradient>
<linearGradient id="c170" gradientUnits="userSpaceOnUse" x1="1262.3" x2="1443.9" y1="0" y2="0"><stop offset="0.000" stop-color="#0012ff"/><stop offset="0.111" stop-color="#000bff"/><stop offset="0.222" stop-color="#0805ff"/><stop offset="0.333" stop-color="#2400ff"/><stop offset="0.444" stop-color="#4100ff"/><stop offset="0.556" stop-color="#6100ff"/><stop offset="0.667" stop-color="#8200ff"/><stop offset="0.778" stop-color="#a600ff"/><stop offset="0.889" stop-color="#cc00ff"/><stop offset="1.000" stop-color="#f500ff"/></linearGradient>
<linearGradient id="c171" gradientUnits="userSpaceOnUse" x1="1264.3" x2="1435.4" y1="0" y2="0"><stop offset="0.000" stop-color="#000fff"/><stop offset="0.125" stop-color="#0008ff"/><stop offset="0.250" stop-color="#0f00ff"/><stop offset="0.375" stop-color="#2d00ff"/><stop offset="0.500" stop-color="#4d00ff"/><stop offset="0.625" stop-color="#6f00ff"/><stop offset="0.750" stop-color="#9300ff"/><stop offset="0.875" stop-color="#ba00ff"/><stop offset="1.000" stop-color="#e300ff"/></linearGradient>
<linearGradient id="c172" gradientUnits="userSpaceOnUse" x1="1266.4" x2="1426.9" y1="0" y2="0"><stop offset="0.000" stop-color="#000cff"/><stop offset="0.125" stop-color="#0005ff"/><stop offset="0.250" stop-color="#1000ff"/><stop offset="0.375" stop-color="#2b00ff"/><stop offset="0.500" stop-color="#4900ff"/><stop offset="0.625" stop-color="#6800ff"/><stop offset="0.750" stop-color="#8900ff"/><stop offset="0.875" stop-color="#ad00ff"/><stop offset="1.000" stop-color="#d200ff"/></linearGradient>
<linearGradient id="c173" gradientUnits="userSpaceOnUse" x1="1268.6" x2="1418.4" y1="0" y2="0"><stop offset="0.000" stop-color="#0008ff"/><stop offset="0.143" stop-color="#0001ff"/><stop offset="0.286" stop-color="#1800ff"/><stop offset="0.429" stop-color="#3600ff"/><stop offset="0.571" stop-color="#5500ff"/><stop offset="0.714" stop-color="#7700ff"/><stop offset="0.857" stop-color="#9c00ff"/><stop offset="1.000" stop-color="#c200ff"/></linearGradient>
<linearGradient id="c174" gradientUnits="userSpaceOnUse" x1="1270.8" x2="1409.9" y1="0" y2="0"><stop offset="0.000" stop-color="#0005ff"/><stop offset="0.143" stop-color="#0000ff"/><stop offset="0.286" stop-color="#1800ff"/><stop offset="0.429" stop-color="#3300ff"/><stop offset="0.571" stop-color="#5000ff"/><stop offset="0.714" stop-color="#6f00ff"/><stop offset="0.857" stop-color="#9000ff"/><stop offset="1.000" stop-color="#b300ff"/></linearGradient>
<linearGradient id="c175" gradientUnits="userSpaceOnUse" x1="1273.2" x2="1401.4" y1="0" y2="0"><stop offset="0.000" stop-color="#0002ff"/><stop offset="0.167" stop-color="#0400ff"/><stop offset="0.333" stop-color="#2000ff"/><stop offset="0.500" stop-color="#3e00ff"/><stop offset="0.667" stop-color="#5e00ff"/><stop offset="0.833" stop-color="#8000ff"/><stop offset="1.000" stop-color="#a400ff"/></linearGradient>
<linearGradient id="c176" gradientUnits="userSpaceOnUse" x1="1275.8" x2="1392.9" y1="0" y2="0"><stop offset="0.000" stop-color="#0000ff"/><stop offset="0.167" stop-color="#0600ff"/><stop offset="0.333" stop-color="#2000ff"/><stop offset="0.500" stop-color="#3b00ff"/><stop offset="0.667" stop-color="#5800ff"/><stop offset="0.833" stop-color="#7600ff"/><stop offset="1.000" stop-color="#9600ff"/></linearGradient>
<linearGradient id="c177" gradientUnits="userSpaceOnUse" x1="1278.5" x2="1384.4" y1="0" y2="0"><stop offset="0.000" stop-color="#0000ff"/><stop offset="0.200" stop-color="#0d00ff"/><stop offset="0.400" stop-color="#2900ff"/><stop offset="0.600" stop-color="#4700ff"/><stop offset="0.800" stop-color="#6700ff"/><stop offset="1.000" stop-color="#8800ff"/></linearGradient>
<linearGradient id="c178" gradientUnits="userSpaceOnUse" x1="1281.5" x2="1375.9" y1="0" y2="0"><stop offset="0.000" stop-color="#0000ff"/><stop offset="0.200" stop-color="#0f00ff"/><stop offset="0.400" stop-color="#2800ff"/><stop offset="0.600" stop-color="#4200ff"/><stop offset="0.800" stop-color="#5e00ff"/><stop offset="1.000" stop-color="#7b00ff"/></linearGradient>
<linearGradient id="c179" gradientUnits="userSpaceOnUse" x1="1284.9" x2="1367.4" y1="0" y2="0"><stop offset="0.000" stop-color="#0000ff"/><stop offset="0.250" stop-color="#1700ff"/><stop offset="0.500" stop-color="#3300ff"/><stop offset="0.750" stop-color="#5000ff"/><stop offset="1.000" stop-color="#6f00ff"/></linearGradient>
<linearGradient id="c180" gradientUnits="userSpaceOnUse" x1="1288.6" x2="1358.9" y1="0" y2="0"><stop offset="0.000" stop-color="#0300ff"/><stop offset="0.250" stop-color="#1900ff"/><stop offset="0.500" stop-color="#3100ff"/><stop offset="0.750" stop-color="#4900ff"/><stop offset="1.000" stop-color="#6200ff"/></linearGradient>
<linearGradient id="c181" gradientUnits="userSpaceOnUse" x1="1292.7" x2="1350.4" y1="0" y2="0"><stop offset="0.000" stop-color="#0a00ff"/><stop offset="0.333" stop-color="#2200ff"/><stop offset="0.667" stop-color="#3c00ff"/><stop offset="1.000" stop-color="#5700ff"/></linearGradient>
<linearGradient id="c182" gradientUnits="userSpaceOnUse" x1="1297.1" x2="1341.9" y1="0" y2="0"><stop offset="0.000" stop-color="#1000ff"/><stop offset="0.333" stop-color="#2300ff"/><stop offset="0.667" stop-color="#3700ff"/><stop offset="1.000" stop-color="#4c00ff"/></linearGradient>
<linearGradient id="c183" gradientUnits="userSpaceOnUse" x1="1301.6" x2="1333.4" y1="0" y2="0"><stop offset="0.000" stop-color="#1700ff"/><stop offset="0.333" stop-color="#2500ff"/><stop offset="0.667" stop-color="#3300ff"/><stop offset="1.000" stop-color="#4100ff"/></linearGradient>
<linearGradient id="c184" gradientUnits="userSpaceOnUse" x1="1306.0" x2="1324.9" y1="0" y2="0"><stop offset="0.000" stop-color="#1e00ff"/><stop offset="0.333" stop-color="#2600ff"/><stop offset="0.667" stop-color="#2e00ff"/><stop offset="1.000" stop-color="#3600ff"/></linearGradient>
<linearGradient id="c185" gradientUnits="userSpaceOnUse" x1="1310.3" x2="1317.4" y1="0" y2="0"><stop offset="0.000" stop-color="#2500ff"/><stop offset="0.333" stop-color="#2800ff"/><stop offset="0.667" stop-color="#2b00ff"/><stop offset="1.000" stop-color="#2e00ff"/></linearGradient>
<linearGradient id="insA" x1="0" y1="0" x2="1" y2="0"><stop offset="0" stop-color="#ffb492"/><stop offset="1" stop-color="#ff6a58"/></linearGradient>
<linearGradient id="insB" x1="0" y1="0" x2="1" y2="0"><stop offset="0" stop-color="#ff7ca6"/><stop offset="1" stop-color="#ff4c60"/></linearGradient>
<linearGradient id="insM" x1="0" y1="0" x2="0" y2="1"><stop offset="0" stop-color="#fff" stop-opacity="1"/><stop offset="1" stop-color="#fff" stop-opacity="0"/></linearGradient>
<mask id="insMask"><rect x="1648" y="186" width="252" height="213" fill="url(#insM)"/></mask>
<linearGradient id="gHdr" x1="0" y1="0" x2="0" y2="1"><stop offset="0" stop-color="#262626"/><stop offset="0.48" stop-color="#2e2e2e"/><stop offset="0.52" stop-color="#121212"/><stop offset="1" stop-color="#242424"/></linearGradient>
<linearGradient id="gRowD" x1="0" y1="0" x2="0" y2="1"><stop offset="0" stop-color="#3a3a3a"/><stop offset="0.3" stop-color="#464646"/><stop offset="1" stop-color="#404040"/></linearGradient>
<linearGradient id="gRowL" x1="0" y1="0" x2="0" y2="1"><stop offset="0" stop-color="#7c7c7c"/><stop offset="0.3" stop-color="#868686"/><stop offset="1" stop-color="#7e7e7e"/></linearGradient>
<linearGradient id="gBB" x1="0" y1="0" x2="0" y2="1"><stop offset="0" stop-color="#a6a6a6"/><stop offset="0.5" stop-color="#868686"/><stop offset="1" stop-color="#5c5c5c"/></linearGradient>
<linearGradient id="gBB2" x1="0" y1="0" x2="0" y2="1"><stop offset="0" stop-color="#adadad"/><stop offset="0.5" stop-color="#9a9a9a"/><stop offset="1" stop-color="#828282"/></linearGradient>
<linearGradient id="gBar" x1="0" y1="0" x2="0" y2="1"><stop offset="0" stop-color="#484848"/><stop offset="0.25" stop-color="#454545"/><stop offset="1" stop-color="#282828"/></linearGradient><linearGradient id="gBtmShA" x1="0" y1="0" x2="1" y2="0"><stop offset="0" stop-color="#1c1c1c" stop-opacity="0.85"/><stop offset="1" stop-color="#1c1c1c" stop-opacity="0"/></linearGradient><linearGradient id="gBtmShB" x1="0" y1="0" x2="1" y2="0"><stop offset="0" stop-color="#1c1c1c" stop-opacity="0"/><stop offset="1" stop-color="#1c1c1c" stop-opacity="0.8"/></linearGradient>
<radialGradient id="gBC"><stop offset="0" stop-color="#b4b4b4"/><stop offset="0.7" stop-color="#a6a6a6"/><stop offset="1" stop-color="#8c8c8c" stop-opacity="0.6"/></radialGradient>
</defs>
<rect x="0" y="0" width="1920" height="1166" fill="#333"/>
<rect x="0.00" y="0.00" width="1920.00" height="26.00" fill="#eff4f9"/>
<rect x="0.00" y="0.00" width="1920.00" height="1.00" fill="#8c8c8c"/>
<path d="M14.3 6.3500000000000005L17.5 9.55L14.3 12.75L11.100000000000001 9.55z" fill="#fdb913" stroke="#fdb913" stroke-width="0.7" stroke-linejoin="round"/>
<path d="M11.25 9.399999999999999L14.45 12.6L11.25 15.8L8.05 12.6z" fill="#2bb0ea" stroke="#2bb0ea" stroke-width="0.7" stroke-linejoin="round"/>
<path d="M17.35 9.399999999999999L20.55 12.6L17.35 15.8L14.150000000000002 12.6z" fill="#1fd42a" stroke="#1fd42a" stroke-width="0.7" stroke-linejoin="round"/>
<path d="M14.3 12.45L17.5 15.649999999999999L14.3 18.849999999999998L11.100000000000001 15.649999999999999z" fill="#ff2858" stroke="#ff2858" stroke-width="0.7" stroke-linejoin="round"/>
<text x="26.5" y="16.6" font-size="11.3" fill="#111" textLength="328.5" lengthAdjust="spacingAndGlyphs" xml:space="preserve">Calman 2025 Calman Ultimate for Business 321 Days Remaining  - Untitled</text>
<line x1="1819.50" y1="13.50" x2="1829.50" y2="13.50" stroke="#222" stroke-width="1"/>
<rect x="1856.5" y="8.5" width="9" height="9" rx="1.5" fill="none" stroke="#222" stroke-width="1"/>
<path d="M1895 8.5l9.5 9.5m0-9.5l-9.5 9.5" stroke="#222" stroke-width="1" fill="none"/>
<rect x="0.00" y="26.00" width="1920.00" height="54.00" fill="#222"/>
<path d="M1 26h152v21q0 3.5-3.5 3.5h-145q-3.5 0-3.5-3.5z" fill="url(#gRed)"/>
<rect x="3.00" y="50.00" width="149.00" height="1.00" fill="#c08a8a" opacity="0.8"/>
<path d="M29.7 28.3L39.4 38.0L29.7 47.7L20.0 38.0z" fill="none" stroke="#fff" stroke-width="1.5" stroke-linejoin="round"/>
<path d="M29.70 30.80L33.00 34.10L29.70 37.40L26.40 34.10z" fill="#fff"/>
<path d="M25.80 34.70L29.10 38.00L25.80 41.30L22.50 38.00z" fill="#fff"/>
<path d="M33.60 34.70L36.90 38.00L33.60 41.30L30.30 38.00z" fill="#fff"/>
<path d="M29.70 38.60L33.00 41.90L29.70 45.20L26.40 41.90z" fill="#fff"/>
<text x="42.5" y="43.6" font-size="21.8" fill="#fff" textLength="71.5" lengthAdjust="spacingAndGlyphs" stroke="#dc2222" stroke-width="0.55">calman</text>
<circle cx="140" cy="37.9" r="8" fill="#d01c1c"/>
<path d="M135.9 36.7h8.2l-4.1 4.5z" fill="#fff"/>
<rect x="160.00" y="36.20" width="1760.00" height="4.60" fill="url(#gRain)"/>
<rect x="0.5" y="55.5" width="22.5" height="23" rx="3" fill="url(#gBtn)" stroke="#999" stroke-width="1"/>
<circle cx="11.5" cy="67" r="8" fill="#5c5c5c" opacity="0.6"/>
<path d="M9 62.3v9.4l5.4-4.7z" fill="#fff"/>
<path d="M25.5 80.5v-21q0-4 4-4h68q4 0 4 4v21z" fill="url(#gTab)"/>
<path d="M25.5 80v-20.5q0-4 4-4h68q4 0 4 4v20.5" fill="none" stroke="#606060" stroke-width="1"/>
<line x1="74.00" y1="56.00" x2="74.00" y2="80.00" stroke="#5a5a5a" stroke-width="1"/>
<line x1="75.00" y1="56.00" x2="75.00" y2="80.00" stroke="#2a2a2a" stroke-width="1"/>
<text x="30.5" y="71.8" font-size="10.2" fill="#e8e8e8" textLength="38.5" lengthAdjust="spacingAndGlyphs">History 1</text>
<circle cx="87" cy="69.5" r="8" fill="#3a3a3a"/>
<text x="87.0" y="74.0" font-size="13" fill="#7c7c7c" text-anchor="middle">+</text>
<path d="M1507.5 80v-21q0-3.5 3.5-3.5h112.0q3.5 0 3.5 3.5v21z" fill="url(#gPanel)"/><rect x="1507.50" y="56.00" width="4.50" height="24.00" fill="#1ee01e"/>
<text x="1514.5" y="65.3" font-size="9.2" fill="#fff" textLength="55.0" lengthAdjust="spacingAndGlyphs">X-Rite i1Pro 3</text>
<text x="1514.5" y="77.0" font-size="9.2" fill="#fff" textLength="46.5" lengthAdjust="spacingAndGlyphs">Direct View</text>
<circle cx="1580.5" cy="68" r="8.5" fill="url(#gDrop)"/><path d="M1576.3 67.2h8.4l-4.2 4.4z" fill="#fff"/>
<line x1="1597.00" y1="56.00" x2="1597.00" y2="80.00" stroke="#3a3a3a" stroke-width="1"/>
<line x1="1598.00" y1="56.00" x2="1598.00" y2="80.00" stroke="#666" stroke-width="1"/>
<circle cx="1613.7" cy="67.8" r="10.5" fill="#0000e8" stroke="#fff" stroke-width="1"/>
<text x="1613.7" y="70.8" font-size="7.5" fill="#fff" text-anchor="middle" textLength="12.5" lengthAdjust="spacingAndGlyphs">650</text>
<path d="M1631.5 80v-21q0-3.5 3.5-3.5h102.0q3.5 0 3.5 3.5v21z" fill="url(#gPanel)"/><rect x="1631.50" y="56.00" width="4.50" height="24.00" fill="#1ee01e"/>
<text x="1639.0" y="65.3" font-size="9.2" fill="#fff" textLength="54.0" lengthAdjust="spacingAndGlyphs">Mobile Forge</text>
<circle cx="1727" cy="68" r="8.5" fill="url(#gDrop)"/><path d="M1722.8 67.2h8.4l-4.2 4.4z" fill="#fff"/>
<path d="M1745.5 80v-21q0-3.5 3.5-3.5h113.0q3.5 0 3.5 3.5v21z" fill="url(#gPanel)"/><rect x="1745.50" y="56.00" width="4.50" height="24.00" fill="#f0e800"/>
<text x="1753.0" y="65.3" font-size="9.2" fill="#fff" textLength="88.5" lengthAdjust="spacingAndGlyphs">Direct Display Control</text>
<circle cx="1852" cy="68" r="8.5" fill="url(#gDrop)"/><path d="M1847.8 67.2h8.4l-4.2 4.4z" fill="#fff"/>
<rect x="1868.5" y="55.5" width="27" height="23" rx="3" fill="url(#gBtn)" stroke="#999" stroke-width="1"/>
<text x="1882.0" y="72.0" font-size="13.5" fill="#d8d8d8" text-anchor="middle">⚙</text>
<rect x="1897.5" y="55.5" width="26" height="23" rx="3" fill="url(#gBtn)" stroke="#999" stroke-width="1"/>
<circle cx="1908" cy="67" r="8" fill="#5c5c5c" opacity="0.6"/>
<path d="M1910.5 62.5v9l-5-4.5z" fill="#fff"/>
<text x="28.0" y="195.0" font-size="46" fill="#f2f2f2" textLength="374.0" lengthAdjust="spacingAndGlyphs">Saturation Sweeps</text>
<text x="209.0" y="252.0" font-size="15.4" fill="#dcdcdc" text-anchor="middle" textLength="90.5" lengthAdjust="spacingAndGlyphs">DeltaE 2000</text>
<rect x="51.00" y="258.10" width="357.90" height="474.40" fill="#252525"/>
<rect x="97.20" y="258.10" width="1.80" height="474.40" fill="#8e8e8e"/>
<rect x="144.80" y="258.10" width="1.80" height="474.40" fill="#8e8e8e"/>
<rect x="192.40" y="258.10" width="1.80" height="474.40" fill="#8e8e8e"/>
<rect x="240.00" y="258.10" width="1.80" height="474.40" fill="#8e8e8e"/>
<rect x="335.20" y="258.10" width="1.80" height="474.40" fill="#8e8e8e"/>
<rect x="382.80" y="258.10" width="1.80" height="474.40" fill="#8e8e8e"/>
<rect x="50.00" y="257.10" width="358.90" height="2.00" fill="#aaa"/>
<rect x="407.90" y="257.10" width="2.00" height="476.40" fill="#aaa"/>
<rect x="50.00" y="731.50" width="359.90" height="2.00" fill="#aaa"/>
<rect x="50.00" y="257.10" width="2.00" height="476.40" fill="#aaa"/>
<rect x="52.00" y="266.00" width="46.70" height="7.40" fill="#000"/>
<rect x="52.00" y="266.60" width="45.30" height="6.20" fill="#db1414"/>
<rect x="52.00" y="266.60" width="45.30" height="6.20" fill="url(#gBarSh)"/>
<rect x="52.00" y="275.40" width="7.30" height="7.40" fill="#000"/>
<rect x="52.00" y="276.00" width="5.90" height="6.20" fill="#14db14"/>
<rect x="52.00" y="276.00" width="5.90" height="6.20" fill="url(#gBarSh)"/>
<rect x="52.00" y="284.80" width="3.80" height="7.40" fill="#000"/>
<rect x="52.00" y="285.40" width="2.40" height="6.20" fill="#1414db"/>
<rect x="52.00" y="285.40" width="2.40" height="6.20" fill="url(#gBarSh)"/>
<rect x="52.00" y="294.20" width="7.30" height="7.40" fill="#000"/>
<rect x="52.00" y="294.80" width="5.90" height="6.20" fill="#14dbdb"/>
<rect x="52.00" y="294.80" width="5.90" height="6.20" fill="url(#gBarSh)"/>
<rect x="52.00" y="303.60" width="13.30" height="7.40" fill="#000"/>
<rect x="52.00" y="304.20" width="11.90" height="6.20" fill="#db14db"/>
<rect x="52.00" y="304.20" width="11.90" height="6.20" fill="url(#gBarSh)"/>
<rect x="52.00" y="313.00" width="7.30" height="7.40" fill="#000"/>
<rect x="52.00" y="313.60" width="5.90" height="6.20" fill="#dbdb14"/>
<rect x="52.00" y="313.60" width="5.90" height="6.20" fill="url(#gBarSh)"/>
<rect x="52.00" y="345.07" width="28.90" height="7.40" fill="#000"/>
<rect x="52.00" y="345.67" width="27.50" height="6.20" fill="#d83939"/>
<rect x="52.00" y="345.67" width="27.50" height="6.20" fill="url(#gBarSh)"/>
<rect x="52.00" y="354.47" width="7.00" height="7.40" fill="#000"/>
<rect x="52.00" y="355.07" width="5.60" height="6.20" fill="#39d839"/>
<rect x="52.00" y="355.07" width="5.60" height="6.20" fill="url(#gBarSh)"/>
<rect x="52.00" y="363.87" width="24.70" height="7.40" fill="#000"/>
<rect x="52.00" y="364.47" width="23.30" height="6.20" fill="#3939d8"/>
<rect x="52.00" y="364.47" width="23.30" height="6.20" fill="url(#gBarSh)"/>
<rect x="52.00" y="373.27" width="7.00" height="7.40" fill="#000"/>
<rect x="52.00" y="373.87" width="5.60" height="6.20" fill="#39d8d8"/>
<rect x="52.00" y="373.87" width="5.60" height="6.20" fill="url(#gBarSh)"/>
<rect x="52.00" y="382.67" width="8.80" height="7.40" fill="#000"/>
<rect x="52.00" y="383.27" width="7.40" height="6.20" fill="#d839d8"/>
<rect x="52.00" y="383.27" width="7.40" height="6.20" fill="url(#gBarSh)"/>
<rect x="52.00" y="392.07" width="5.60" height="7.40" fill="#000"/>
<rect x="52.00" y="392.67" width="4.20" height="6.20" fill="#d8d839"/>
<rect x="52.00" y="392.67" width="4.20" height="6.20" fill="url(#gBarSh)"/>
<rect x="52.00" y="424.14" width="21.50" height="7.40" fill="#000"/>
<rect x="52.00" y="424.74" width="20.10" height="6.20" fill="#d55e5e"/>
<rect x="52.00" y="424.74" width="20.10" height="6.20" fill="url(#gBarSh)"/>
<rect x="52.00" y="433.54" width="5.30" height="7.40" fill="#000"/>
<rect x="52.00" y="434.14" width="3.90" height="6.20" fill="#5ed55e"/>
<rect x="52.00" y="434.14" width="3.90" height="6.20" fill="url(#gBarSh)"/>
<rect x="52.00" y="442.94" width="14.80" height="7.40" fill="#000"/>
<rect x="52.00" y="443.54" width="13.40" height="6.20" fill="#5e5ed5"/>
<rect x="52.00" y="443.54" width="13.40" height="6.20" fill="url(#gBarSh)"/>
<rect x="52.00" y="452.34" width="5.30" height="7.40" fill="#000"/>
<rect x="52.00" y="452.94" width="3.90" height="6.20" fill="#5ed5d5"/>
<rect x="52.00" y="452.94" width="3.90" height="6.20" fill="url(#gBarSh)"/>
<rect x="52.00" y="461.74" width="5.30" height="7.40" fill="#000"/>
<rect x="52.00" y="462.34" width="3.90" height="6.20" fill="#d55ed5"/>
<rect x="52.00" y="462.34" width="3.90" height="6.20" fill="url(#gBarSh)"/>
<rect x="52.00" y="471.14" width="8.80" height="7.40" fill="#000"/>
<rect x="52.00" y="471.74" width="7.40" height="6.20" fill="#d5d55e"/>
<rect x="52.00" y="471.74" width="7.40" height="6.20" fill="url(#gBarSh)"/>
<rect x="52.00" y="503.21" width="16.30" height="7.40" fill="#000"/>
<rect x="52.00" y="503.81" width="14.90" height="6.20" fill="#d28383"/>
<rect x="52.00" y="503.81" width="14.90" height="6.20" fill="url(#gBarSh)"/>
<rect x="52.00" y="512.61" width="3.40" height="7.40" fill="#000"/>
<rect x="52.00" y="513.21" width="2.00" height="6.20" fill="#83d283"/>
<rect x="52.00" y="513.21" width="2.00" height="6.20" fill="url(#gBarSh)"/>
<rect x="52.00" y="522.01" width="5.10" height="7.40" fill="#000"/>
<rect x="52.00" y="522.61" width="3.70" height="6.20" fill="#8383d2"/>
<rect x="52.00" y="522.61" width="3.70" height="6.20" fill="url(#gBarSh)"/>
<rect x="52.00" y="531.41" width="5.10" height="7.40" fill="#000"/>
<rect x="52.00" y="532.01" width="3.70" height="6.20" fill="#83d2d2"/>
<rect x="52.00" y="532.01" width="3.70" height="6.20" fill="url(#gBarSh)"/>
<rect x="52.00" y="540.81" width="8.80" height="7.40" fill="#000"/>
<rect x="52.00" y="541.41" width="7.40" height="6.20" fill="#d283d2"/>
<rect x="52.00" y="541.41" width="7.40" height="6.20" fill="url(#gBarSh)"/>
<rect x="52.00" y="550.21" width="10.50" height="7.40" fill="#000"/>
<rect x="52.00" y="550.81" width="9.10" height="6.20" fill="#d2d283"/>
<rect x="52.00" y="550.81" width="9.10" height="6.20" fill="url(#gBarSh)"/>
<rect x="52.00" y="582.28" width="12.60" height="7.40" fill="#000"/>
<rect x="52.00" y="582.88" width="11.20" height="6.20" fill="#cfa7a7"/>
<rect x="52.00" y="582.88" width="11.20" height="6.20" fill="url(#gBarSh)"/>
<rect x="52.00" y="591.68" width="6.60" height="7.40" fill="#000"/>
<rect x="52.00" y="592.28" width="5.20" height="6.20" fill="#a7cfa7"/>
<rect x="52.00" y="592.28" width="5.20" height="6.20" fill="url(#gBarSh)"/>
<rect x="52.00" y="601.08" width="12.00" height="7.40" fill="#000"/>
<rect x="52.00" y="601.68" width="10.60" height="6.20" fill="#a7a7cf"/>
<rect x="52.00" y="601.68" width="10.60" height="6.20" fill="url(#gBarSh)"/>
<rect x="52.00" y="610.48" width="8.40" height="7.40" fill="#000"/>
<rect x="52.00" y="611.08" width="7.00" height="6.20" fill="#a7cfcf"/>
<rect x="52.00" y="611.08" width="7.00" height="6.20" fill="url(#gBarSh)"/>
<rect x="52.00" y="619.88" width="6.60" height="7.40" fill="#000"/>
<rect x="52.00" y="620.48" width="5.20" height="6.20" fill="#cfa7cf"/>
<rect x="52.00" y="620.48" width="5.20" height="6.20" fill="url(#gBarSh)"/>
<rect x="52.00" y="629.28" width="8.40" height="7.40" fill="#000"/>
<rect x="52.00" y="629.88" width="7.00" height="6.20" fill="#cfcfa7"/>
<rect x="52.00" y="629.88" width="7.00" height="6.20" fill="url(#gBarSh)"/>
<rect x="52.00" y="718.80" width="46.60" height="6.80" fill="#000"/>
<rect x="52.00" y="719.40" width="45.60" height="5.40" fill="url(#gWhiteBar)"/>
<rect x="73.40" y="258.10" width="1.80" height="474.40" fill="#009a00"/>
<rect x="121.00" y="258.10" width="1.80" height="474.40" fill="#ffff00"/>
<rect x="289.00" y="258.10" width="1.80" height="474.40" fill="#ff0000"/>
<rect x="43.50" y="257.10" width="7.00" height="2.00" fill="#e0e0e0"/>
<rect x="43.50" y="336.17" width="7.00" height="2.00" fill="#e0e0e0"/>
<rect x="43.50" y="415.24" width="7.00" height="2.00" fill="#e0e0e0"/>
<rect x="43.50" y="494.31" width="7.00" height="2.00" fill="#e0e0e0"/>
<rect x="43.50" y="573.38" width="7.00" height="2.00" fill="#e0e0e0"/>
<rect x="43.50" y="652.45" width="7.00" height="2.00" fill="#e0e0e0"/>
<rect x="43.50" y="731.52" width="7.00" height="2.00" fill="#e0e0e0"/>
<text x="49.5" y="304.7" font-size="15.4" fill="#dcdcdc" text-anchor="end" textLength="41.0" lengthAdjust="spacingAndGlyphs">100%</text>
<text x="49.5" y="383.0" font-size="15.4" fill="#dcdcdc" text-anchor="end" textLength="31.5" lengthAdjust="spacingAndGlyphs">80%</text>
<text x="49.5" y="462.0" font-size="15.4" fill="#dcdcdc" text-anchor="end" textLength="31.5" lengthAdjust="spacingAndGlyphs">60%</text>
<text x="49.5" y="541.5" font-size="15.4" fill="#dcdcdc" text-anchor="end" textLength="31.5" lengthAdjust="spacingAndGlyphs">40%</text>
<text x="49.5" y="620.5" font-size="15.4" fill="#dcdcdc" text-anchor="end" textLength="31.5" lengthAdjust="spacingAndGlyphs">20%</text>
<text x="49.5" y="700.0" font-size="15.4" fill="#dcdcdc" text-anchor="end" textLength="26.0" lengthAdjust="spacingAndGlyphs">100</text>
<rect x="50.00" y="732.50" width="2.00" height="7.00" fill="#aaa"/>
<text x="50.5" y="757.8" font-size="15.4" fill="#dcdcdc" text-anchor="middle" textLength="8.5" lengthAdjust="spacingAndGlyphs">0</text>
<rect x="97.60" y="732.50" width="2.00" height="7.00" fill="#aaa"/>
<text x="98.1" y="757.8" font-size="15.4" fill="#dcdcdc" text-anchor="middle" textLength="8.5" lengthAdjust="spacingAndGlyphs">2</text>
<rect x="145.20" y="732.50" width="2.00" height="7.00" fill="#aaa"/>
<text x="145.7" y="757.8" font-size="15.4" fill="#dcdcdc" text-anchor="middle" textLength="8.5" lengthAdjust="spacingAndGlyphs">4</text>
<rect x="192.80" y="732.50" width="2.00" height="7.00" fill="#aaa"/>
<text x="193.3" y="757.8" font-size="15.4" fill="#dcdcdc" text-anchor="middle" textLength="8.5" lengthAdjust="spacingAndGlyphs">6</text>
<rect x="240.40" y="732.50" width="2.00" height="7.00" fill="#aaa"/>
<text x="240.9" y="757.8" font-size="15.4" fill="#dcdcdc" text-anchor="middle" textLength="8.5" lengthAdjust="spacingAndGlyphs">8</text>
<rect x="288.00" y="732.50" width="2.00" height="7.00" fill="#aaa"/>
<text x="288.5" y="757.8" font-size="15.4" fill="#dcdcdc" text-anchor="middle" textLength="17.5" lengthAdjust="spacingAndGlyphs">10</text>
<rect x="335.60" y="732.50" width="2.00" height="7.00" fill="#aaa"/>
<text x="336.1" y="757.8" font-size="15.4" fill="#dcdcdc" text-anchor="middle" textLength="17.5" lengthAdjust="spacingAndGlyphs">12</text>
<rect x="383.20" y="732.50" width="2.00" height="7.00" fill="#aaa"/>
<text x="383.7" y="757.8" font-size="15.4" fill="#dcdcdc" text-anchor="middle" textLength="17.5" lengthAdjust="spacingAndGlyphs">14</text>
<text x="18.0" y="852.0" font-size="32.5" fill="#f2f2f2" textLength="251.0" lengthAdjust="spacingAndGlyphs">Current Reading</text>
<text x="18.0" y="900.6" font-size="26" fill="#f2f2f2" textLength="117.0" lengthAdjust="spacingAndGlyphs" xml:space="preserve">x: 0,3759</text>
<text x="18.0" y="947.5" font-size="26" fill="#f2f2f2" textLength="118.0" lengthAdjust="spacingAndGlyphs" xml:space="preserve">y: 0,3308</text>
<text x="18.0" y="995.0" font-size="26" fill="#f2f2f2" textLength="110.0" lengthAdjust="spacingAndGlyphs" xml:space="preserve">fL: 65,02</text>
<text x="18.0" y="1042.0" font-size="26" fill="#f2f2f2" textLength="183.0" lengthAdjust="spacingAndGlyphs" xml:space="preserve">cd/m²: 222,78</text>
<text x="537.3" y="823.7" font-size="15.4" fill="#dcdcdc" text-anchor="middle" textLength="95.0" lengthAdjust="spacingAndGlyphs">RGB Balance</text>
<rect x="411.30" y="829.60" width="286.90" height="208.00" fill="#252525"/>
<rect x="406.30" y="850.10" width="291.90" height="2.00" fill="#9a9a9a"/>
<text x="404.5" y="856.6" font-size="15.4" fill="#dcdcdc" text-anchor="end" textLength="26.5" lengthAdjust="spacingAndGlyphs">104</text>
<rect x="406.30" y="892.10" width="291.90" height="2.00" fill="#9a9a9a"/>
<text x="404.5" y="898.6" font-size="15.4" fill="#dcdcdc" text-anchor="end" textLength="26.5" lengthAdjust="spacingAndGlyphs">102</text>
<rect x="406.30" y="933.50" width="291.90" height="2.00" fill="#9a9a9a"/>
<text x="404.5" y="940.0" font-size="15.4" fill="#dcdcdc" text-anchor="end" textLength="26.5" lengthAdjust="spacingAndGlyphs">100</text>
<rect x="406.30" y="975.00" width="291.90" height="2.00" fill="#9a9a9a"/>
<text x="404.5" y="981.5" font-size="15.4" fill="#dcdcdc" text-anchor="end" textLength="17.5" lengthAdjust="spacingAndGlyphs">98</text>
<rect x="406.30" y="1016.30" width="291.90" height="2.00" fill="#9a9a9a"/>
<text x="404.5" y="1022.8" font-size="15.4" fill="#dcdcdc" text-anchor="end" textLength="17.5" lengthAdjust="spacingAndGlyphs">96</text>
<rect x="410.30" y="828.60" width="288.90" height="2.00" fill="#aaa"/>
<rect x="410.30" y="828.60" width="2.00" height="210.00" fill="#aaa"/>
<rect x="697.20" y="828.60" width="2.00" height="210.00" fill="#aaa"/>
<rect x="410.30" y="1036.60" width="288.90" height="2.00" fill="#aaa"/>
<rect x="410.30" y="1037.60" width="2.00" height="7.00" fill="#aaa"/>
<rect x="697.20" y="1037.60" width="2.00" height="7.00" fill="#aaa"/>
<rect x="439.00" y="944.10" width="75.50" height="92.50" fill="#000"/>
<rect x="439.80" y="944.90" width="73.90" height="91.70" fill="url(#gR)"/>
<rect x="515.50" y="929.80" width="76.60" height="106.80" fill="#000"/>
<rect x="516.30" y="930.60" width="75.00" height="106.00" fill="url(#gG)"/>
<rect x="592.80" y="939.90" width="75.40" height="96.70" fill="#000"/>
<rect x="593.60" y="940.70" width="73.80" height="95.90" fill="url(#gB)"/>
<text x="555.0" y="1055.5" font-size="15.4" fill="#dcdcdc" text-anchor="middle" textLength="31.5" lengthAdjust="spacingAndGlyphs">20%</text>
<text x="537.7" y="173.7" font-size="15.8" fill="#dcdcdc" text-anchor="middle" textLength="51.7" lengthAdjust="spacingAndGlyphs">Delta L</text>
<rect x="469.70" y="180.00" width="166.60" height="364.00" fill="#252525"/>
<rect x="463.70" y="180.72" width="6.00" height="1.80" fill="#e0e0e0"/>
<text x="463.2" y="187.6" font-size="15.8" fill="#dcdcdc" text-anchor="end" textLength="18.0" lengthAdjust="spacingAndGlyphs">15</text>
<rect x="469.70" y="241.10" width="166.60" height="1.80" fill="#8e8e8e"/>
<rect x="463.70" y="241.10" width="6.00" height="1.80" fill="#e0e0e0"/>
<text x="463.2" y="248.0" font-size="15.8" fill="#dcdcdc" text-anchor="end" textLength="18.0" lengthAdjust="spacingAndGlyphs">10</text>
<rect x="469.70" y="301.48" width="166.60" height="1.80" fill="#8e8e8e"/>
<rect x="463.70" y="301.48" width="6.00" height="1.80" fill="#e0e0e0"/>
<text x="463.2" y="308.4" font-size="15.8" fill="#dcdcdc" text-anchor="end" textLength="8.7" lengthAdjust="spacingAndGlyphs">5</text>
<rect x="469.70" y="361.85" width="166.60" height="1.80" fill="#8e8e8e"/>
<rect x="463.70" y="361.85" width="6.00" height="1.80" fill="#e0e0e0"/>
<text x="463.2" y="368.8" font-size="15.8" fill="#dcdcdc" text-anchor="end" textLength="8.7" lengthAdjust="spacingAndGlyphs">0</text>
<rect x="469.70" y="422.23" width="166.60" height="1.80" fill="#8e8e8e"/>
<rect x="463.70" y="422.23" width="6.00" height="1.80" fill="#e0e0e0"/>
<text x="463.2" y="429.1" font-size="15.8" fill="#dcdcdc" text-anchor="end" textLength="15.5" lengthAdjust="spacingAndGlyphs">-5</text>
<rect x="469.70" y="482.60" width="166.60" height="1.80" fill="#8e8e8e"/>
<rect x="463.70" y="482.60" width="6.00" height="1.80" fill="#e0e0e0"/>
<text x="463.2" y="489.5" font-size="15.8" fill="#dcdcdc" text-anchor="end" textLength="25.0" lengthAdjust="spacingAndGlyphs">-10</text>
<rect x="463.70" y="542.98" width="6.00" height="1.80" fill="#e0e0e0"/>
<text x="463.2" y="549.9" font-size="15.8" fill="#dcdcdc" text-anchor="end" textLength="25.0" lengthAdjust="spacingAndGlyphs">-15</text>
<rect x="468.70" y="178.30" width="168.60" height="3.70" fill="#a4a4a4"/>
<rect x="468.70" y="179.00" width="2.00" height="366.00" fill="#a4a4a4"/>
<rect x="635.30" y="179.00" width="2.00" height="366.00" fill="#a4a4a4"/>
<rect x="468.70" y="543.00" width="168.60" height="2.00" fill="#a4a4a4"/>
<rect x="468.70" y="544.00" width="2.00" height="6.50" fill="#e0e0e0"/>
<rect x="635.30" y="544.00" width="2.00" height="6.50" fill="#e0e0e0"/>
<text x="553.0" y="562.3" font-size="15.8" fill="#dcdcdc" text-anchor="middle" textLength="32.0" lengthAdjust="spacingAndGlyphs">20%</text>
<rect x="486.90" y="361.55" width="133.10" height="2.80" fill="#000"/>
<text x="764.5" y="173.7" font-size="15.8" fill="#dcdcdc" text-anchor="middle" textLength="54.0" lengthAdjust="spacingAndGlyphs">Delta C</text>
<rect x="696.60" y="180.00" width="166.30" height="364.00" fill="#252525"/>
<rect x="690.60" y="180.72" width="6.00" height="1.80" fill="#e0e0e0"/>
<text x="690.1" y="187.6" font-size="15.8" fill="#dcdcdc" text-anchor="end" textLength="18.0" lengthAdjust="spacingAndGlyphs">15</text>
<rect x="696.60" y="241.10" width="166.30" height="1.80" fill="#8e8e8e"/>
<rect x="690.60" y="241.10" width="6.00" height="1.80" fill="#e0e0e0"/>
<text x="690.1" y="248.0" font-size="15.8" fill="#dcdcdc" text-anchor="end" textLength="18.0" lengthAdjust="spacingAndGlyphs">10</text>
<rect x="696.60" y="301.48" width="166.30" height="1.80" fill="#8e8e8e"/>
<rect x="690.60" y="301.48" width="6.00" height="1.80" fill="#e0e0e0"/>
<text x="690.1" y="308.4" font-size="15.8" fill="#dcdcdc" text-anchor="end" textLength="8.7" lengthAdjust="spacingAndGlyphs">5</text>
<rect x="696.60" y="361.85" width="166.30" height="1.80" fill="#8e8e8e"/>
<rect x="690.60" y="361.85" width="6.00" height="1.80" fill="#e0e0e0"/>
<text x="690.1" y="368.8" font-size="15.8" fill="#dcdcdc" text-anchor="end" textLength="8.7" lengthAdjust="spacingAndGlyphs">0</text>
<rect x="696.60" y="422.23" width="166.30" height="1.80" fill="#8e8e8e"/>
<rect x="690.60" y="422.23" width="6.00" height="1.80" fill="#e0e0e0"/>
<text x="690.1" y="429.1" font-size="15.8" fill="#dcdcdc" text-anchor="end" textLength="15.5" lengthAdjust="spacingAndGlyphs">-5</text>
<rect x="696.60" y="482.60" width="166.30" height="1.80" fill="#8e8e8e"/>
<rect x="690.60" y="482.60" width="6.00" height="1.80" fill="#e0e0e0"/>
<text x="690.1" y="489.5" font-size="15.8" fill="#dcdcdc" text-anchor="end" textLength="25.0" lengthAdjust="spacingAndGlyphs">-10</text>
<rect x="690.60" y="542.98" width="6.00" height="1.80" fill="#e0e0e0"/>
<text x="690.1" y="549.9" font-size="15.8" fill="#dcdcdc" text-anchor="end" textLength="25.0" lengthAdjust="spacingAndGlyphs">-15</text>
<rect x="695.60" y="178.30" width="168.30" height="3.70" fill="#a4a4a4"/>
<rect x="695.60" y="179.00" width="2.00" height="366.00" fill="#a4a4a4"/>
<rect x="861.90" y="179.00" width="2.00" height="366.00" fill="#a4a4a4"/>
<rect x="695.60" y="543.00" width="168.30" height="2.00" fill="#a4a4a4"/>
<rect x="695.60" y="544.00" width="2.00" height="6.50" fill="#e0e0e0"/>
<rect x="861.90" y="544.00" width="2.00" height="6.50" fill="#e0e0e0"/>
<text x="779.8" y="562.3" font-size="15.8" fill="#dcdcdc" text-anchor="middle" textLength="32.0" lengthAdjust="spacingAndGlyphs">20%</text>
<rect x="713.80" y="361.90" width="132.80" height="8.70" fill="#000"/>
<rect x="715.00" y="363.10" width="130.40" height="6.30" fill="url(#gPink)"/>
<text x="991.4" y="173.7" font-size="15.8" fill="#dcdcdc" text-anchor="middle" textLength="55.0" lengthAdjust="spacingAndGlyphs">Delta H</text>
<rect x="923.40" y="180.00" width="166.60" height="364.00" fill="#252525"/>
<rect x="917.40" y="180.72" width="6.00" height="1.80" fill="#e0e0e0"/>
<text x="916.9" y="187.6" font-size="15.8" fill="#dcdcdc" text-anchor="end" textLength="18.0" lengthAdjust="spacingAndGlyphs">15</text>
<rect x="923.40" y="241.10" width="166.60" height="1.80" fill="#8e8e8e"/>
<rect x="917.40" y="241.10" width="6.00" height="1.80" fill="#e0e0e0"/>
<text x="916.9" y="248.0" font-size="15.8" fill="#dcdcdc" text-anchor="end" textLength="18.0" lengthAdjust="spacingAndGlyphs">10</text>
<rect x="923.40" y="301.48" width="166.60" height="1.80" fill="#8e8e8e"/>
<rect x="917.40" y="301.48" width="6.00" height="1.80" fill="#e0e0e0"/>
<text x="916.9" y="308.4" font-size="15.8" fill="#dcdcdc" text-anchor="end" textLength="8.7" lengthAdjust="spacingAndGlyphs">5</text>
<rect x="923.40" y="361.85" width="166.60" height="1.80" fill="#8e8e8e"/>
<rect x="917.40" y="361.85" width="6.00" height="1.80" fill="#e0e0e0"/>
<text x="916.9" y="368.8" font-size="15.8" fill="#dcdcdc" text-anchor="end" textLength="8.7" lengthAdjust="spacingAndGlyphs">0</text>
<rect x="923.40" y="422.23" width="166.60" height="1.80" fill="#8e8e8e"/>
<rect x="917.40" y="422.23" width="6.00" height="1.80" fill="#e0e0e0"/>
<text x="916.9" y="429.1" font-size="15.8" fill="#dcdcdc" text-anchor="end" textLength="15.5" lengthAdjust="spacingAndGlyphs">-5</text>
<rect x="923.40" y="482.60" width="166.60" height="1.80" fill="#8e8e8e"/>
<rect x="917.40" y="482.60" width="6.00" height="1.80" fill="#e0e0e0"/>
<text x="916.9" y="489.5" font-size="15.8" fill="#dcdcdc" text-anchor="end" textLength="25.0" lengthAdjust="spacingAndGlyphs">-10</text>
<rect x="917.40" y="542.98" width="6.00" height="1.80" fill="#e0e0e0"/>
<text x="916.9" y="549.9" font-size="15.8" fill="#dcdcdc" text-anchor="end" textLength="25.0" lengthAdjust="spacingAndGlyphs">-15</text>
<rect x="922.40" y="178.30" width="168.60" height="3.70" fill="#a4a4a4"/>
<rect x="922.40" y="179.00" width="2.00" height="366.00" fill="#a4a4a4"/>
<rect x="1089.00" y="179.00" width="2.00" height="366.00" fill="#a4a4a4"/>
<rect x="922.40" y="543.00" width="168.60" height="2.00" fill="#a4a4a4"/>
<rect x="922.40" y="544.00" width="2.00" height="6.50" fill="#e0e0e0"/>
<rect x="1089.00" y="544.00" width="2.00" height="6.50" fill="#e0e0e0"/>
<text x="1006.7" y="562.3" font-size="15.8" fill="#dcdcdc" text-anchor="middle" textLength="32.0" lengthAdjust="spacingAndGlyphs">20%</text>
<rect x="940.60" y="354.20" width="133.10" height="9.20" fill="#000"/>
<rect x="941.80" y="355.40" width="130.70" height="6.80" fill="url(#gPink)"/>
<rect x="431.50" y="581.50" width="681.50" height="188.00" fill="#000"/>
<rect x="455.00" y="589.60" width="115.60" height="153.80" fill="#f4f4f4"/>
<rect x="456.60" y="591.20" width="112.40" height="150.60" fill="#c28989"/>
<rect x="456.60" y="665.20" width="112.40" height="76.60" fill="#c38a8a"/>
<text x="512.8" y="759.6" font-size="13.6" fill="#f4f4f4" text-anchor="middle" textLength="27.0" lengthAdjust="spacingAndGlyphs">20%</text>
<rect x="588.20" y="589.60" width="115.60" height="153.80" fill="#f4f4f4"/>
<rect x="589.80" y="591.20" width="112.40" height="150.60" fill="#be6363"/>
<rect x="589.80" y="665.20" width="112.40" height="76.60" fill="#bf6464"/>
<text x="646.0" y="759.6" font-size="13.6" fill="#f4f4f4" text-anchor="middle" textLength="27.0" lengthAdjust="spacingAndGlyphs">40%</text>
<rect x="721.40" y="589.60" width="114.60" height="153.80" fill="#f4f4f4"/>
<rect x="723.00" y="591.20" width="111.40" height="150.60" fill="#c04b49"/>
<rect x="723.00" y="665.20" width="111.40" height="76.60" fill="#c04b4a"/>
<text x="778.7" y="759.6" font-size="13.6" fill="#f4f4f4" text-anchor="middle" textLength="27.0" lengthAdjust="spacingAndGlyphs">60%</text>
<rect x="854.20" y="589.60" width="114.90" height="153.80" fill="#f4f4f4"/>
<rect x="855.80" y="591.20" width="111.70" height="150.60" fill="#c02d2b"/>
<rect x="855.80" y="665.20" width="111.70" height="76.60" fill="#c23030"/>
<text x="911.6" y="759.6" font-size="13.6" fill="#f4f4f4" text-anchor="middle" textLength="27.0" lengthAdjust="spacingAndGlyphs">80%</text>
<rect x="986.70" y="589.60" width="115.30" height="153.80" fill="#f4f4f4"/>
<rect x="988.30" y="591.20" width="112.10" height="150.60" fill="#bc0500"/>
<rect x="988.30" y="665.20" width="112.10" height="76.60" fill="#c00f13"/>
<text x="1044.3" y="759.6" font-size="13.6" fill="#f4f4f4" text-anchor="middle" textLength="35.0" lengthAdjust="spacingAndGlyphs">100%</text>
<text transform="translate(447.3,644) rotate(-90)" font-size="13.6" fill="#f4f4f4" textLength="41" lengthAdjust="spacingAndGlyphs">Actual</text>
<text transform="translate(447.3,729) rotate(-90)" font-size="13.6" fill="#f4f4f4" textLength="40" lengthAdjust="spacingAndGlyphs">Target</text>
<rect x="1120.50" y="143.00" width="797.00" height="642.50" fill="#222"/>
<rect x="1128.00" y="150.80" width="783.00" height="626.40" fill="#333"/>
<text x="1519.0" y="173.0" font-size="15.8" fill="#dcdcdc" text-anchor="middle" textLength="87.0" lengthAdjust="spacingAndGlyphs">CIE 1931 xy</text>
<rect x="1162.00" y="178.70" width="744.70" height="565.20" fill="#252525"/>
<g clip-path="url(#locClip)">
<rect x="1223.1" y="182" width="20.0" height="3.6" fill="url(#c0)"/>
<rect x="1211.5" y="185" width="46.0" height="3.6" fill="url(#c1)"/>
<rect x="1204.7" y="188" width="63.6" height="3.6" fill="url(#c2)"/>
<rect x="1200.0" y="191" width="77.3" height="3.6" fill="url(#c3)"/>
<rect x="1196.3" y="194" width="88.6" height="3.6" fill="url(#c4)"/>
<rect x="1193.2" y="197" width="98.9" height="3.6" fill="url(#c5)"/>
<rect x="1190.6" y="200" width="108.4" height="3.6" fill="url(#c6)"/>
<rect x="1188.3" y="203" width="117.6" height="3.6" fill="url(#c7)"/>
<rect x="1186.2" y="206" width="126.1" height="3.6" fill="url(#c8)"/>
<rect x="1184.2" y="209" width="134.3" height="3.6" fill="url(#c9)"/>
<rect x="1182.5" y="212" width="142.0" height="3.6" fill="url(#c10)"/>
<rect x="1180.8" y="215" width="149.5" height="3.6" fill="url(#c11)"/>
<rect x="1179.4" y="218" width="156.7" height="3.6" fill="url(#c12)"/>
<rect x="1177.9" y="221" width="163.8" height="3.6" fill="url(#c13)"/>
<rect x="1176.6" y="224" width="170.4" height="3.6" fill="url(#c14)"/>
<rect x="1175.4" y="227" width="176.9" height="3.6" fill="url(#c15)"/>
<rect x="1174.3" y="230" width="183.3" height="3.6" fill="url(#c16)"/>
<rect x="1173.3" y="233" width="189.3" height="3.6" fill="url(#c17)"/>
<rect x="1172.3" y="236" width="195.4" height="3.6" fill="url(#c18)"/>
<rect x="1171.4" y="239" width="201.2" height="3.6" fill="url(#c19)"/>
<rect x="1170.6" y="242" width="206.8" height="3.6" fill="url(#c20)"/>
<rect x="1169.9" y="245" width="212.4" height="3.6" fill="url(#c21)"/>
<rect x="1169.1" y="248" width="217.8" height="3.6" fill="url(#c22)"/>
<rect x="1168.5" y="251" width="223.1" height="3.6" fill="url(#c23)"/>
<rect x="1167.9" y="254" width="228.3" height="3.6" fill="url(#c24)"/>
<rect x="1167.3" y="257" width="233.5" height="3.6" fill="url(#c25)"/>
<rect x="1166.9" y="260" width="238.4" height="3.6" fill="url(#c26)"/>
<rect x="1166.4" y="263" width="243.4" height="3.6" fill="url(#c27)"/>
<rect x="1165.9" y="266" width="248.2" height="3.6" fill="url(#c28)"/>
<rect x="1165.5" y="269" width="253.0" height="3.6" fill="url(#c29)"/>
<rect x="1165.2" y="272" width="257.7" height="3.6" fill="url(#c30)"/>
<rect x="1164.8" y="275" width="262.4" height="3.6" fill="url(#c31)"/>
<rect x="1164.5" y="278" width="267.1" height="3.6" fill="url(#c32)"/>
<rect x="1164.2" y="281" width="271.6" height="3.6" fill="url(#c33)"/>
<rect x="1164.0" y="284" width="276.1" height="3.6" fill="url(#c34)"/>
<rect x="1163.8" y="287" width="280.6" height="3.6" fill="url(#c35)"/>
<rect x="1163.5" y="290" width="285.0" height="3.6" fill="url(#c36)"/>
<rect x="1163.4" y="293" width="289.3" height="3.6" fill="url(#c37)"/>
<rect x="1163.2" y="296" width="293.7" height="3.6" fill="url(#c38)"/>
<rect x="1163.1" y="299" width="298.0" height="3.6" fill="url(#c39)"/>
<rect x="1162.9" y="302" width="302.3" height="3.6" fill="url(#c40)"/>
<rect x="1162.9" y="305" width="306.5" height="3.6" fill="url(#c41)"/>
<rect x="1162.8" y="308" width="310.6" height="3.6" fill="url(#c42)"/>
<rect x="1162.8" y="311" width="314.8" height="3.6" fill="url(#c43)"/>
<rect x="1162.7" y="314" width="318.9" height="3.6" fill="url(#c44)"/>
<rect x="1162.8" y="317" width="323.0" height="3.6" fill="url(#c45)"/>
<rect x="1162.8" y="320" width="327.0" height="3.6" fill="url(#c46)"/>
<rect x="1162.9" y="323" width="331.0" height="3.6" fill="url(#c47)"/>
<rect x="1162.9" y="326" width="335.0" height="3.6" fill="url(#c48)"/>
<rect x="1163.0" y="329" width="339.0" height="3.6" fill="url(#c49)"/>
<rect x="1163.1" y="332" width="342.9" height="3.6" fill="url(#c50)"/>
<rect x="1163.3" y="335" width="346.8" height="3.6" fill="url(#c51)"/>
<rect x="1163.4" y="338" width="350.7" height="3.6" fill="url(#c52)"/>
<rect x="1163.5" y="341" width="354.5" height="3.6" fill="url(#c53)"/>
<rect x="1163.7" y="344" width="358.3" height="3.6" fill="url(#c54)"/>
<rect x="1163.9" y="347" width="362.2" height="3.6" fill="url(#c55)"/>
<rect x="1164.1" y="350" width="366.0" height="3.6" fill="url(#c56)"/>
<rect x="1164.3" y="353" width="369.8" height="3.6" fill="url(#c57)"/>
<rect x="1164.6" y="356" width="373.6" height="3.6" fill="url(#c58)"/>
<rect x="1164.8" y="359" width="377.3" height="3.6" fill="url(#c59)"/>
<rect x="1165.1" y="362" width="381.1" height="3.6" fill="url(#c60)"/>
<rect x="1165.3" y="365" width="384.8" height="3.6" fill="url(#c61)"/>
<rect x="1165.6" y="368" width="388.5" height="3.6" fill="url(#c62)"/>
<rect x="1165.9" y="371" width="392.2" height="3.6" fill="url(#c63)"/>
<rect x="1166.2" y="374" width="395.9" height="3.6" fill="url(#c64)"/>
<rect x="1166.5" y="377" width="399.6" height="3.6" fill="url(#c65)"/>
<rect x="1166.8" y="380" width="403.2" height="3.6" fill="url(#c66)"/>
<rect x="1167.1" y="383" width="406.9" height="3.6" fill="url(#c67)"/>
<rect x="1167.5" y="386" width="410.5" height="3.6" fill="url(#c68)"/>
<rect x="1167.8" y="389" width="414.1" height="3.6" fill="url(#c69)"/>
<rect x="1168.2" y="392" width="417.7" height="3.6" fill="url(#c70)"/>
<rect x="1168.6" y="395" width="421.3" height="3.6" fill="url(#c71)"/>
<rect x="1169.0" y="398" width="424.8" height="3.6" fill="url(#c72)"/>
<rect x="1169.4" y="401" width="428.4" height="3.6" fill="url(#c73)"/>
<rect x="1169.8" y="404" width="431.9" height="3.6" fill="url(#c74)"/>
<rect x="1170.2" y="407" width="435.4" height="3.6" fill="url(#c75)"/>
<rect x="1170.7" y="410" width="438.9" height="3.6" fill="url(#c76)"/>
<rect x="1171.2" y="413" width="442.4" height="3.6" fill="url(#c77)"/>
<rect x="1171.6" y="416" width="445.9" height="3.6" fill="url(#c78)"/>
<rect x="1172.1" y="419" width="449.4" height="3.6" fill="url(#c79)"/>
<rect x="1172.6" y="422" width="452.9" height="3.6" fill="url(#c80)"/>
<rect x="1173.1" y="425" width="456.3" height="3.6" fill="url(#c81)"/>
<rect x="1173.6" y="428" width="459.8" height="3.6" fill="url(#c82)"/>
<rect x="1174.1" y="431" width="463.2" height="3.6" fill="url(#c83)"/>
<rect x="1174.6" y="434" width="466.7" height="3.6" fill="url(#c84)"/>
<rect x="1175.1" y="437" width="470.1" height="3.6" fill="url(#c85)"/>
<rect x="1175.7" y="440" width="473.6" height="3.6" fill="url(#c86)"/>
<rect x="1176.2" y="443" width="477.0" height="3.6" fill="url(#c87)"/>
<rect x="1176.8" y="446" width="480.4" height="3.6" fill="url(#c88)"/>
<rect x="1177.3" y="449" width="483.8" height="3.6" fill="url(#c89)"/>
<rect x="1177.9" y="452" width="487.2" height="3.6" fill="url(#c90)"/>
<rect x="1178.5" y="455" width="490.6" height="3.6" fill="url(#c91)"/>
<rect x="1179.1" y="458" width="494.0" height="3.6" fill="url(#c92)"/>
<rect x="1179.7" y="461" width="497.4" height="3.6" fill="url(#c93)"/>
<rect x="1180.3" y="464" width="500.7" height="3.6" fill="url(#c94)"/>
<rect x="1180.9" y="467" width="504.0" height="3.6" fill="url(#c95)"/>
<rect x="1181.5" y="470" width="507.3" height="3.6" fill="url(#c96)"/>
<rect x="1182.2" y="473" width="510.7" height="3.6" fill="url(#c97)"/>
<rect x="1182.8" y="476" width="514.0" height="3.6" fill="url(#c98)"/>
<rect x="1183.5" y="479" width="517.3" height="3.6" fill="url(#c99)"/>
<rect x="1184.1" y="482" width="520.6" height="3.6" fill="url(#c100)"/>
<rect x="1184.8" y="485" width="523.9" height="3.6" fill="url(#c101)"/>
<rect x="1185.5" y="488" width="527.1" height="3.6" fill="url(#c102)"/>
<rect x="1186.2" y="491" width="530.4" height="3.6" fill="url(#c103)"/>
<rect x="1186.9" y="494" width="533.7" height="3.6" fill="url(#c104)"/>
<rect x="1187.6" y="497" width="536.9" height="3.6" fill="url(#c105)"/>
<rect x="1188.3" y="500" width="540.1" height="3.6" fill="url(#c106)"/>
<rect x="1189.1" y="503" width="543.4" height="3.6" fill="url(#c107)"/>
<rect x="1189.8" y="506" width="546.6" height="3.6" fill="url(#c108)"/>
<rect x="1190.6" y="509" width="549.9" height="3.6" fill="url(#c109)"/>
<rect x="1191.3" y="512" width="553.1" height="3.6" fill="url(#c110)"/>
<rect x="1192.1" y="515" width="556.3" height="3.6" fill="url(#c111)"/>
<rect x="1192.9" y="518" width="559.5" height="3.6" fill="url(#c112)"/>
<rect x="1193.7" y="521" width="562.7" height="3.6" fill="url(#c113)"/>
<rect x="1194.5" y="524" width="565.8" height="3.6" fill="url(#c114)"/>
<rect x="1195.3" y="527" width="569.0" height="3.6" fill="url(#c115)"/>
<rect x="1196.1" y="530" width="572.1" height="3.6" fill="url(#c116)"/>
<rect x="1196.9" y="533" width="575.2" height="3.6" fill="url(#c117)"/>
<rect x="1197.7" y="536" width="578.4" height="3.6" fill="url(#c118)"/>
<rect x="1198.5" y="539" width="581.6" height="3.6" fill="url(#c119)"/>
<rect x="1199.4" y="542" width="584.7" height="3.6" fill="url(#c120)"/>
<rect x="1200.2" y="545" width="587.8" height="3.6" fill="url(#c121)"/>
<rect x="1201.1" y="548" width="590.9" height="3.6" fill="url(#c122)"/>
<rect x="1202.0" y="551" width="593.9" height="3.6" fill="url(#c123)"/>
<rect x="1202.8" y="554" width="597.1" height="3.6" fill="url(#c124)"/>
<rect x="1203.7" y="557" width="600.2" height="3.6" fill="url(#c125)"/>
<rect x="1204.6" y="560" width="603.2" height="3.6" fill="url(#c126)"/>
<rect x="1205.6" y="563" width="604.0" height="3.6" fill="url(#c127)"/>
<rect x="1206.5" y="566" width="594.5" height="3.6" fill="url(#c128)"/>
<rect x="1207.4" y="569" width="585.1" height="3.6" fill="url(#c129)"/>
<rect x="1208.4" y="572" width="575.6" height="3.6" fill="url(#c130)"/>
<rect x="1209.4" y="575" width="566.1" height="3.6" fill="url(#c131)"/>
<rect x="1210.3" y="578" width="556.7" height="3.6" fill="url(#c132)"/>
<rect x="1211.3" y="581" width="547.2" height="3.6" fill="url(#c133)"/>
<rect x="1212.4" y="584" width="537.6" height="3.6" fill="url(#c134)"/>
<rect x="1213.4" y="587" width="528.1" height="3.6" fill="url(#c135)"/>
<rect x="1214.4" y="590" width="518.6" height="3.6" fill="url(#c136)"/>
<rect x="1215.5" y="593" width="509.0" height="3.6" fill="url(#c137)"/>
<rect x="1216.5" y="596" width="499.5" height="3.6" fill="url(#c138)"/>
<rect x="1217.6" y="599" width="489.9" height="3.6" fill="url(#c139)"/>
<rect x="1218.7" y="602" width="480.3" height="3.6" fill="url(#c140)"/>
<rect x="1219.8" y="605" width="470.7" height="3.6" fill="url(#c141)"/>
<rect x="1220.9" y="608" width="461.0" height="3.6" fill="url(#c142)"/>
<rect x="1222.1" y="611" width="451.4" height="3.6" fill="url(#c143)"/>
<rect x="1223.3" y="614" width="441.7" height="3.6" fill="url(#c144)"/>
<rect x="1224.5" y="617" width="432.0" height="3.6" fill="url(#c145)"/>
<rect x="1225.7" y="620" width="422.2" height="3.6" fill="url(#c146)"/>
<rect x="1227.0" y="623" width="412.5" height="3.6" fill="url(#c147)"/>
<rect x="1228.3" y="626" width="402.7" height="3.6" fill="url(#c148)"/>
<rect x="1229.6" y="629" width="392.8" height="3.6" fill="url(#c149)"/>
<rect x="1231.0" y="632" width="383.0" height="3.6" fill="url(#c150)"/>
<rect x="1232.3" y="635" width="373.1" height="3.6" fill="url(#c151)"/>
<rect x="1233.7" y="638" width="363.2" height="3.6" fill="url(#c152)"/>
<rect x="1235.1" y="641" width="353.3" height="3.6" fill="url(#c153)"/>
<rect x="1236.5" y="644" width="343.4" height="3.6" fill="url(#c154)"/>
<rect x="1238.0" y="647" width="333.5" height="3.6" fill="url(#c155)"/>
<rect x="1239.4" y="650" width="323.6" height="3.6" fill="url(#c156)"/>
<rect x="1240.8" y="653" width="313.6" height="3.6" fill="url(#c157)"/>
<rect x="1242.3" y="656" width="303.7" height="3.6" fill="url(#c158)"/>
<rect x="1243.7" y="659" width="293.7" height="3.6" fill="url(#c159)"/>
<rect x="1245.2" y="662" width="283.7" height="3.6" fill="url(#c160)"/>
<rect x="1246.8" y="665" width="273.7" height="3.6" fill="url(#c161)"/>
<rect x="1248.3" y="668" width="263.6" height="3.6" fill="url(#c162)"/>
<rect x="1250.0" y="671" width="253.5" height="3.6" fill="url(#c163)"/>
<rect x="1251.6" y="674" width="243.3" height="3.6" fill="url(#c164)"/>
<rect x="1253.3" y="677" width="233.2" height="3.6" fill="url(#c165)"/>
<rect x="1255.0" y="680" width="223.0" height="3.6" fill="url(#c166)"/>
<rect x="1256.7" y="683" width="212.7" height="3.6" fill="url(#c167)"/>
<rect x="1258.5" y="686" width="202.5" height="3.6" fill="url(#c168)"/>
<rect x="1260.3" y="689" width="192.1" height="3.6" fill="url(#c169)"/>
<rect x="1262.3" y="692" width="181.6" height="3.6" fill="url(#c170)"/>
<rect x="1264.3" y="695" width="171.1" height="3.6" fill="url(#c171)"/>
<rect x="1266.4" y="698" width="160.5" height="3.6" fill="url(#c172)"/>
<rect x="1268.6" y="701" width="149.8" height="3.6" fill="url(#c173)"/>
<rect x="1270.8" y="704" width="139.1" height="3.6" fill="url(#c174)"/>
<rect x="1273.2" y="707" width="128.2" height="3.6" fill="url(#c175)"/>
<rect x="1275.8" y="710" width="117.1" height="3.6" fill="url(#c176)"/>
<rect x="1278.5" y="713" width="105.9" height="3.6" fill="url(#c177)"/>
<rect x="1281.5" y="716" width="94.4" height="3.6" fill="url(#c178)"/>
<rect x="1284.9" y="719" width="82.5" height="3.6" fill="url(#c179)"/>
<rect x="1288.6" y="722" width="70.3" height="3.6" fill="url(#c180)"/>
<rect x="1292.7" y="725" width="57.7" height="3.6" fill="url(#c181)"/>
<rect x="1297.1" y="728" width="44.8" height="3.6" fill="url(#c182)"/>
<rect x="1301.6" y="731" width="31.8" height="3.6" fill="url(#c183)"/>
<rect x="1306.0" y="734" width="18.8" height="3.6" fill="url(#c184)"/>
<rect x="1310.3" y="737" width="7.1" height="3.6" fill="url(#c185)"/>
<path fill-rule="evenodd" fill="#000" fill-opacity="0.40" d="M1100 100H1950V800H1100z M1728.4 521.0L1426.7 339.6L1293.6 702.5z"/>
</g>
<rect x="1161.00" y="177.70" width="746.70" height="2.00" fill="#a4a4a4"/>
<rect x="1161.00" y="177.70" width="2.00" height="567.20" fill="#a4a4a4"/>
<rect x="1905.70" y="177.70" width="2.00" height="567.20" fill="#a4a4a4"/>
<rect x="1161.00" y="742.90" width="746.70" height="2.00" fill="#a4a4a4"/>
<rect x="1161.00" y="743.90" width="2.00" height="6.50" fill="#e0e0e0"/>
<text x="1161.5" y="768.5" font-size="15.8" fill="#dcdcdc" text-anchor="middle" textLength="9.0" lengthAdjust="spacingAndGlyphs">0</text>
<rect x="1155.00" y="743.10" width="6.00" height="1.80" fill="#e0e0e0"/>
<text x="1154.5" y="751.8" font-size="15.8" fill="#dcdcdc" text-anchor="end" textLength="9.0" lengthAdjust="spacingAndGlyphs">0</text>
<rect x="1249.53" y="743.90" width="2.00" height="6.50" fill="#e0e0e0"/>
<text x="1250.2" y="768.5" font-size="15.8" fill="#dcdcdc" text-anchor="middle" textLength="22.5" lengthAdjust="spacingAndGlyphs">0,1</text>
<rect x="1155.00" y="675.90" width="6.00" height="1.80" fill="#e0e0e0"/>
<text x="1154.5" y="683.0" font-size="15.8" fill="#dcdcdc" text-anchor="end" textLength="22.5" lengthAdjust="spacingAndGlyphs">0,1</text>
<rect x="1338.26" y="743.90" width="2.00" height="6.50" fill="#e0e0e0"/>
<text x="1339.0" y="768.5" font-size="15.8" fill="#dcdcdc" text-anchor="middle" textLength="22.5" lengthAdjust="spacingAndGlyphs">0,2</text>
<rect x="1155.00" y="608.70" width="6.00" height="1.80" fill="#e0e0e0"/>
<text x="1154.5" y="615.8" font-size="15.8" fill="#dcdcdc" text-anchor="end" textLength="22.5" lengthAdjust="spacingAndGlyphs">0,2</text>
<rect x="1426.99" y="743.90" width="2.00" height="6.50" fill="#e0e0e0"/>
<text x="1427.7" y="768.5" font-size="15.8" fill="#dcdcdc" text-anchor="middle" textLength="22.5" lengthAdjust="spacingAndGlyphs">0,3</text>
<rect x="1155.00" y="541.50" width="6.00" height="1.80" fill="#e0e0e0"/>
<text x="1154.5" y="548.6" font-size="15.8" fill="#dcdcdc" text-anchor="end" textLength="22.5" lengthAdjust="spacingAndGlyphs">0,3</text>
<rect x="1515.72" y="743.90" width="2.00" height="6.50" fill="#e0e0e0"/>
<text x="1516.4" y="768.5" font-size="15.8" fill="#dcdcdc" text-anchor="middle" textLength="22.5" lengthAdjust="spacingAndGlyphs">0,4</text>
<rect x="1155.00" y="474.30" width="6.00" height="1.80" fill="#e0e0e0"/>
<text x="1154.5" y="481.4" font-size="15.8" fill="#dcdcdc" text-anchor="end" textLength="22.5" lengthAdjust="spacingAndGlyphs">0,4</text>
<rect x="1604.45" y="743.90" width="2.00" height="6.50" fill="#e0e0e0"/>
<text x="1605.2" y="768.5" font-size="15.8" fill="#dcdcdc" text-anchor="middle" textLength="22.5" lengthAdjust="spacingAndGlyphs">0,5</text>
<rect x="1155.00" y="407.10" width="6.00" height="1.80" fill="#e0e0e0"/>
<text x="1154.5" y="414.2" font-size="15.8" fill="#dcdcdc" text-anchor="end" textLength="22.5" lengthAdjust="spacingAndGlyphs">0,5</text>
<rect x="1693.18" y="743.90" width="2.00" height="6.50" fill="#e0e0e0"/>
<text x="1693.9" y="768.5" font-size="15.8" fill="#dcdcdc" text-anchor="middle" textLength="22.5" lengthAdjust="spacingAndGlyphs">0,6</text>
<rect x="1155.00" y="339.90" width="6.00" height="1.80" fill="#e0e0e0"/>
<text x="1154.5" y="347.0" font-size="15.8" fill="#dcdcdc" text-anchor="end" textLength="22.5" lengthAdjust="spacingAndGlyphs">0,6</text>
<rect x="1781.91" y="743.90" width="2.00" height="6.50" fill="#e0e0e0"/>
<text x="1782.6" y="768.5" font-size="15.8" fill="#dcdcdc" text-anchor="middle" textLength="22.5" lengthAdjust="spacingAndGlyphs">0,7</text>
<rect x="1155.00" y="272.70" width="6.00" height="1.80" fill="#e0e0e0"/>
<text x="1154.5" y="279.8" font-size="15.8" fill="#dcdcdc" text-anchor="end" textLength="22.5" lengthAdjust="spacingAndGlyphs">0,7</text>
<rect x="1870.64" y="743.90" width="2.00" height="6.50" fill="#e0e0e0"/>
<text x="1871.3" y="768.5" font-size="15.8" fill="#dcdcdc" text-anchor="middle" textLength="22.5" lengthAdjust="spacingAndGlyphs">0,8</text>
<rect x="1155.00" y="205.50" width="6.00" height="1.80" fill="#e0e0e0"/>
<text x="1154.5" y="212.6" font-size="15.8" fill="#dcdcdc" text-anchor="end" textLength="22.5" lengthAdjust="spacingAndGlyphs">0,8</text>
<rect x="1418.5" y="331.5" width="15.4" height="15.4" fill="none" stroke="#fff" stroke-width="1.7"/>
<rect x="1421.9" y="370.2" width="15.4" height="15.4" fill="none" stroke="#fff" stroke-width="1.7"/>
<rect x="1423.6" y="406.3" width="15.4" height="15.4" fill="none" stroke="#fff" stroke-width="1.7"/>
<rect x="1426.6" y="440.8" width="15.4" height="15.4" fill="none" stroke="#fff" stroke-width="1.7"/>
<rect x="1428.3" y="476.6" width="15.4" height="15.4" fill="none" stroke="#fff" stroke-width="1.7"/>
<rect x="1525.1" y="395.3" width="15.4" height="15.4" fill="none" stroke="#fff" stroke-width="1.7"/>
<rect x="1504.9" y="420.8" width="15.4" height="15.4" fill="none" stroke="#fff" stroke-width="1.7"/>
<rect x="1487.8" y="442.5" width="15.4" height="15.4" fill="none" stroke="#fff" stroke-width="1.7"/>
<rect x="1468.9" y="464.8" width="15.4" height="15.4" fill="none" stroke="#fff" stroke-width="1.7"/>
<rect x="1449.8" y="489.3" width="15.4" height="15.4" fill="none" stroke="#fff" stroke-width="1.7"/>
<rect x="1352.5" y="514.4" width="15.4" height="15.4" fill="none" stroke="#fff" stroke-width="1.7"/>
<rect x="1368.0" y="514.4" width="15.4" height="15.4" fill="none" stroke="#fff" stroke-width="1.7"/>
<rect x="1384.0" y="514.4" width="15.4" height="15.4" fill="none" stroke="#fff" stroke-width="1.7"/>
<rect x="1400.4" y="514.4" width="15.4" height="15.4" fill="none" stroke="#fff" stroke-width="1.7"/>
<rect x="1415.5" y="514.4" width="15.4" height="15.4" fill="none" stroke="#fff" stroke-width="1.7"/>
<rect x="1285.9" y="694.6" width="15.4" height="15.4" fill="none" stroke="#fff" stroke-width="1.7"/>
<rect x="1316.8" y="655.1" width="15.4" height="15.4" fill="none" stroke="#fff" stroke-width="1.7"/>
<rect x="1345.5" y="621.2" width="15.4" height="15.4" fill="none" stroke="#fff" stroke-width="1.7"/>
<rect x="1373.2" y="586.3" width="15.4" height="15.4" fill="none" stroke="#fff" stroke-width="1.7"/>
<rect x="1401.5" y="550.4" width="15.4" height="15.4" fill="none" stroke="#fff" stroke-width="1.7"/>
<rect x="1437.8" y="631.9" width="15.4" height="15.4" fill="none" stroke="#fff" stroke-width="1.7"/>
<rect x="1435.9" y="607.0" width="15.4" height="15.4" fill="none" stroke="#fff" stroke-width="1.7"/>
<rect x="1434.6" y="583.4" width="15.4" height="15.4" fill="none" stroke="#fff" stroke-width="1.7"/>
<rect x="1434.6" y="563.1" width="15.4" height="15.4" fill="none" stroke="#fff" stroke-width="1.7"/>
<rect x="1432.7" y="538.1" width="15.4" height="15.4" fill="none" stroke="#fff" stroke-width="1.7"/>
<rect x="1720.7" y="512.8" width="15.4" height="15.4" fill="none" stroke="#fff" stroke-width="1.7"/>
<rect x="1656.5" y="513.0" width="15.4" height="15.4" fill="none" stroke="#fff" stroke-width="1.7"/>
<rect x="1599.7" y="513.1" width="15.4" height="15.4" fill="none" stroke="#fff" stroke-width="1.7"/>
<rect x="1547.1" y="513.2" width="15.4" height="15.4" fill="none" stroke="#fff" stroke-width="1.7"/>
<rect x="1487.2" y="513.4" width="15.4" height="15.4" fill="none" stroke="#fff" stroke-width="1.7"/>
<rect x="1431.2" y="514.5" width="15.4" height="15.4" fill="none" stroke="#000" stroke-width="2.2"/>
<circle cx="1426.2" cy="334.7" r="4.45" fill="#00b500" stroke="#0c0c0c" stroke-width="1.45"/>
<circle cx="1429.8" cy="374.9" r="4.45" fill="#60b560" stroke="#0c0c0c" stroke-width="1.45"/>
<circle cx="1431.3" cy="412.6" r="4.45" fill="#76b576" stroke="#0c0c0c" stroke-width="1.45"/>
<circle cx="1434.3" cy="448.5" r="4.45" fill="#8bb58b" stroke="#0c0c0c" stroke-width="1.45"/>
<circle cx="1435.7" cy="484.3" r="4.45" fill="#9eb59e" stroke="#0c0c0c" stroke-width="1.45"/>
<circle cx="1532.8" cy="400.0" r="4.45" fill="#b5b500" stroke="#0c0c0c" stroke-width="1.45"/>
<circle cx="1512.6" cy="426.8" r="4.45" fill="#b5b560" stroke="#0c0c0c" stroke-width="1.45"/>
<circle cx="1494.9" cy="448.5" r="4.45" fill="#b5b576" stroke="#0c0c0c" stroke-width="1.45"/>
<circle cx="1476.6" cy="471.9" r="4.45" fill="#b5b58b" stroke="#0c0c0c" stroke-width="1.45"/>
<circle cx="1456.6" cy="497.0" r="4.45" fill="#b5b59e" stroke="#0c0c0c" stroke-width="1.45"/>
<circle cx="1359.6" cy="520.8" r="4.45" fill="#00b5b5" stroke="#0c0c0c" stroke-width="1.45"/>
<circle cx="1376.2" cy="520.8" r="4.45" fill="#60b5b5" stroke="#0c0c0c" stroke-width="1.45"/>
<circle cx="1392.1" cy="520.8" r="4.45" fill="#76b5b5" stroke="#0c0c0c" stroke-width="1.45"/>
<circle cx="1408.1" cy="520.8" r="4.45" fill="#8bb5b5" stroke="#0c0c0c" stroke-width="1.45"/>
<circle cx="1421.9" cy="520.8" r="4.45" fill="#9eb5b5" stroke="#0c0c0c" stroke-width="1.45"/>
<circle cx="1294.7" cy="702.3" r="4.45" fill="#0000b5" stroke="#0c0c0c" stroke-width="1.45"/>
<circle cx="1323.4" cy="667.7" r="4.45" fill="#6060b5" stroke="#0c0c0c" stroke-width="1.45"/>
<circle cx="1351.1" cy="630.2" r="4.45" fill="#7676b5" stroke="#0c0c0c" stroke-width="1.45"/>
<circle cx="1380.9" cy="592.6" r="4.45" fill="#8b8bb5" stroke="#0c0c0c" stroke-width="1.45"/>
<circle cx="1410.6" cy="556.6" r="4.45" fill="#9e9eb5" stroke="#0c0c0c" stroke-width="1.45"/>
<circle cx="1445.5" cy="641.0" r="4.45" fill="#b500b5" stroke="#0c0c0c" stroke-width="1.45"/>
<circle cx="1445.5" cy="614.7" r="4.45" fill="#b560b5" stroke="#0c0c0c" stroke-width="1.45"/>
<circle cx="1442.3" cy="589.0" r="4.45" fill="#b576b5" stroke="#0c0c0c" stroke-width="1.45"/>
<circle cx="1440.8" cy="569.0" r="4.45" fill="#b58bb5" stroke="#0c0c0c" stroke-width="1.45"/>
<circle cx="1438.9" cy="545.8" r="4.45" fill="#b59eb5" stroke="#0c0c0c" stroke-width="1.45"/>
<circle cx="1737.9" cy="520.2" r="4.45" fill="#c80404" stroke="#0c0c0c" stroke-width="1.45"/>
<circle cx="1673.8" cy="520.0" r="4.45" fill="#b54a4a" stroke="#0c0c0c" stroke-width="1.45"/>
<circle cx="1611.6" cy="519.2" r="4.45" fill="#b85858" stroke="#0c0c0c" stroke-width="1.45"/>
<circle cx="1557.3" cy="519.8" r="4.45" fill="#b96868" stroke="#0c0c0c" stroke-width="1.45"/>
<circle cx="1494.0" cy="520.5" r="4.45" fill="#b98484" stroke="#0c0c0c" stroke-width="1.45"/>
<circle cx="1438.9" cy="520.8" r="4.45" fill="#fff" stroke="#0c0c0c" stroke-width="1.45"/>
<rect x="1646.20" y="184.40" width="255.20" height="215.90" fill="#2a2a2a"/>
<rect x="1647.20" y="185.40" width="253.20" height="213.90" fill="#8c8c8c"/>
<rect x="1648.80" y="187.00" width="250.00" height="210.70" fill="url(#insB)"/>
<rect x="1648.80" y="187.00" width="250.00" height="210.70" fill="url(#insA)" mask="url(#insMask)"/>
<rect x="1764.2" y="282.8" width="16.1" height="16.1" fill="none" stroke="#fff" stroke-width="1.7"/>
<circle cx="1767.2" cy="285.3" r="4.45" fill="#b08a8a" stroke="#0c0c0c" stroke-width="1.45"/>
<rect x="722.00" y="801.60" width="808.50" height="232.80" fill="#1c1c1c"/>
<rect x="723.50" y="803.10" width="805.50" height="34.80" fill="url(#gHdr)"/>
<text x="1031.8" y="827.8" font-size="18.6" fill="#f4f4f4" text-anchor="end" textLength="46.0" lengthAdjust="spacingAndGlyphs" font-family="DejaVu Sans, Liberation Sans, sans-serif">20%</text>
<text x="1154.2" y="827.8" font-size="18.6" fill="#f4f4f4" text-anchor="end" textLength="47.0" lengthAdjust="spacingAndGlyphs" font-family="DejaVu Sans, Liberation Sans, sans-serif">40%</text>
<text x="1276.3" y="827.8" font-size="18.6" fill="#f4f4f4" text-anchor="end" textLength="47.0" lengthAdjust="spacingAndGlyphs" font-family="DejaVu Sans, Liberation Sans, sans-serif">60%</text>
<text x="1391.4" y="827.8" font-size="18.6" fill="#f4f4f4" text-anchor="end" textLength="47.0" lengthAdjust="spacingAndGlyphs" font-family="DejaVu Sans, Liberation Sans, sans-serif">80%</text>
<text x="1505.6" y="827.8" font-size="18.6" fill="#f4f4f4" text-anchor="end" textLength="59.5" lengthAdjust="spacingAndGlyphs" font-family="DejaVu Sans, Liberation Sans, sans-serif">100%</text>
<rect x="723.50" y="837.70" width="805.50" height="33.02" fill="url(#gRowD)"/>
<text x="744.2" y="861.1" font-size="19.2" fill="#f2f2f2" textLength="99.5" lengthAdjust="spacingAndGlyphs" font-weight="bold" font-family="DejaVu Sans, Liberation Sans, sans-serif">x: CIE31</text>
<text x="954.1" y="861.1" font-size="19.4" fill="#f2f2f2" textLength="78.2" lengthAdjust="spacingAndGlyphs" font-family="DejaVu Sans, Liberation Sans, sans-serif">0,3759</text>
<text x="1076.2" y="861.1" font-size="19.4" fill="#f2f2f2" textLength="78.2" lengthAdjust="spacingAndGlyphs" font-family="DejaVu Sans, Liberation Sans, sans-serif">0,4472</text>
<text x="1198.7" y="861.1" font-size="19.4" fill="#f2f2f2" textLength="78.2" lengthAdjust="spacingAndGlyphs" font-family="DejaVu Sans, Liberation Sans, sans-serif">0,5084</text>
<text x="1321.2" y="861.1" font-size="19.4" fill="#f2f2f2" textLength="78.2" lengthAdjust="spacingAndGlyphs" font-family="DejaVu Sans, Liberation Sans, sans-serif">0,5785</text>
<text x="1428.4" y="861.1" font-size="19.4" fill="#f2f2f2" textLength="78.2" lengthAdjust="spacingAndGlyphs" font-family="DejaVu Sans, Liberation Sans, sans-serif">0,6507</text>
<rect x="723.50" y="870.42" width="805.50" height="33.02" fill="url(#gRowL)"/>
<text x="744.2" y="893.8" font-size="19.2" fill="#f2f2f2" textLength="99.5" lengthAdjust="spacingAndGlyphs" font-weight="bold" font-family="DejaVu Sans, Liberation Sans, sans-serif">y: CIE31</text>
<text x="954.1" y="893.8" font-size="19.4" fill="#f2f2f2" textLength="78.2" lengthAdjust="spacingAndGlyphs" font-family="DejaVu Sans, Liberation Sans, sans-serif">0,3308</text>
<text x="1076.2" y="893.8" font-size="19.4" fill="#f2f2f2" textLength="78.2" lengthAdjust="spacingAndGlyphs" font-family="DejaVu Sans, Liberation Sans, sans-serif">0,3319</text>
<text x="1198.7" y="893.8" font-size="19.4" fill="#f2f2f2" textLength="78.2" lengthAdjust="spacingAndGlyphs" font-family="DejaVu Sans, Liberation Sans, sans-serif">0,3328</text>
<text x="1321.2" y="893.8" font-size="19.4" fill="#f2f2f2" textLength="78.2" lengthAdjust="spacingAndGlyphs" font-family="DejaVu Sans, Liberation Sans, sans-serif">0,3316</text>
<text x="1428.4" y="893.8" font-size="19.4" fill="#f2f2f2" textLength="78.2" lengthAdjust="spacingAndGlyphs" font-family="DejaVu Sans, Liberation Sans, sans-serif">0,3312</text>
<rect x="723.50" y="903.14" width="805.50" height="33.02" fill="url(#gRowD)"/>
<text x="744.2" y="926.5" font-size="19.2" fill="#f2f2f2" textLength="15.5" lengthAdjust="spacingAndGlyphs" font-weight="bold" font-family="DejaVu Sans, Liberation Sans, sans-serif">Y</text>
<text x="954.1" y="926.5" font-size="19.4" fill="#f2f2f2" textLength="107.0" lengthAdjust="spacingAndGlyphs" font-family="DejaVu Sans, Liberation Sans, sans-serif">222,7807</text>
<text x="1076.2" y="926.5" font-size="19.4" fill="#f2f2f2" textLength="107.0" lengthAdjust="spacingAndGlyphs" font-family="DejaVu Sans, Liberation Sans, sans-serif">152,3921</text>
<text x="1198.7" y="926.5" font-size="19.4" fill="#f2f2f2" textLength="107.0" lengthAdjust="spacingAndGlyphs" font-family="DejaVu Sans, Liberation Sans, sans-serif">120,5622</text>
<text x="1321.2" y="926.5" font-size="19.4" fill="#f2f2f2" textLength="92.6" lengthAdjust="spacingAndGlyphs" font-family="DejaVu Sans, Liberation Sans, sans-serif">96,2028</text>
<text x="1428.4" y="926.5" font-size="19.4" fill="#f2f2f2" textLength="92.6" lengthAdjust="spacingAndGlyphs" font-family="DejaVu Sans, Liberation Sans, sans-serif">79,5715</text>
<rect x="723.50" y="935.86" width="805.50" height="33.02" fill="url(#gRowL)"/>
<text x="744.2" y="959.3" font-size="19.2" fill="#f2f2f2" textLength="180.0" lengthAdjust="spacingAndGlyphs" font-weight="bold" font-family="DejaVu Sans, Liberation Sans, sans-serif">Target x:CIE31</text>
<text x="954.1" y="959.3" font-size="19.4" fill="#f2f2f2" textLength="78.2" lengthAdjust="spacingAndGlyphs" font-family="DejaVu Sans, Liberation Sans, sans-serif">0,3769</text>
<text x="1076.2" y="959.3" font-size="19.4" fill="#f2f2f2" textLength="78.2" lengthAdjust="spacingAndGlyphs" font-family="DejaVu Sans, Liberation Sans, sans-serif">0,4444</text>
<text x="1198.7" y="959.3" font-size="19.4" fill="#f2f2f2" textLength="78.2" lengthAdjust="spacingAndGlyphs" font-family="DejaVu Sans, Liberation Sans, sans-serif">0,5037</text>
<text x="1321.2" y="959.3" font-size="19.4" fill="#f2f2f2" textLength="78.2" lengthAdjust="spacingAndGlyphs" font-family="DejaVu Sans, Liberation Sans, sans-serif">0,5677</text>
<text x="1428.4" y="959.3" font-size="19.4" fill="#f2f2f2" textLength="78.2" lengthAdjust="spacingAndGlyphs" font-family="DejaVu Sans, Liberation Sans, sans-serif">0,6400</text>
<rect x="723.50" y="968.58" width="805.50" height="33.02" fill="url(#gRowD)"/>
<text x="744.2" y="992.0" font-size="19.2" fill="#f2f2f2" textLength="180.0" lengthAdjust="spacingAndGlyphs" font-weight="bold" font-family="DejaVu Sans, Liberation Sans, sans-serif">Target y:CIE31</text>
<text x="954.1" y="992.0" font-size="19.4" fill="#f2f2f2" textLength="78.2" lengthAdjust="spacingAndGlyphs" font-family="DejaVu Sans, Liberation Sans, sans-serif">0,3292</text>
<text x="1076.2" y="992.0" font-size="19.4" fill="#f2f2f2" textLength="78.2" lengthAdjust="spacingAndGlyphs" font-family="DejaVu Sans, Liberation Sans, sans-serif">0,3294</text>
<text x="1198.7" y="992.0" font-size="19.4" fill="#f2f2f2" textLength="78.2" lengthAdjust="spacingAndGlyphs" font-family="DejaVu Sans, Liberation Sans, sans-serif">0,3296</text>
<text x="1321.2" y="992.0" font-size="19.4" fill="#f2f2f2" textLength="78.2" lengthAdjust="spacingAndGlyphs" font-family="DejaVu Sans, Liberation Sans, sans-serif">0,3298</text>
<text x="1428.4" y="992.0" font-size="19.4" fill="#f2f2f2" textLength="78.2" lengthAdjust="spacingAndGlyphs" font-family="DejaVu Sans, Liberation Sans, sans-serif">0,3300</text>
<rect x="723.50" y="1001.30" width="805.50" height="31.12" fill="url(#gRowL)"/>
<text x="744.2" y="1024.7" font-size="19.2" fill="#f2f2f2" textLength="103.5" lengthAdjust="spacingAndGlyphs" font-weight="bold" font-family="DejaVu Sans, Liberation Sans, sans-serif">Target Y</text>
<text x="954.1" y="1024.7" font-size="19.4" fill="#f2f2f2" textLength="107.0" lengthAdjust="spacingAndGlyphs" font-family="DejaVu Sans, Liberation Sans, sans-serif">223,5096</text>
<text x="1076.2" y="1024.7" font-size="19.4" fill="#f2f2f2" textLength="107.0" lengthAdjust="spacingAndGlyphs" font-family="DejaVu Sans, Liberation Sans, sans-serif">154,9337</text>
<text x="1198.7" y="1024.7" font-size="19.4" fill="#f2f2f2" textLength="107.0" lengthAdjust="spacingAndGlyphs" font-family="DejaVu Sans, Liberation Sans, sans-serif">122,0819</text>
<text x="1321.2" y="1024.7" font-size="19.4" fill="#f2f2f2" textLength="92.6" lengthAdjust="spacingAndGlyphs" font-family="DejaVu Sans, Liberation Sans, sans-serif">99,3683</text>
<text x="1428.4" y="1024.7" font-size="19.4" fill="#f2f2f2" textLength="92.6" lengthAdjust="spacingAndGlyphs" font-family="DejaVu Sans, Liberation Sans, sans-serif">82,1195</text>
<rect x="0.00" y="1112.50" width="1920.00" height="53.50" fill="url(#gBar)"/>
<rect x="0.00" y="1112.50" width="681.00" height="53.50" fill="#222"/>
<rect x="681.00" y="1112.50" width="26.00" height="53.50" fill="url(#gBtmShA)"/>
<rect x="1860.00" y="1112.50" width="30.00" height="53.50" fill="url(#gBtmShB)"/>
<rect x="1890.00" y="1112.50" width="30.00" height="53.50" fill="#1c1c1c" fill-opacity="0.8"/>
<rect x="0.00" y="1164.20" width="1920.00" height="1.00" fill="#8a8a8a"/>
<rect x="0.00" y="1165.20" width="1920.00" height="0.80" fill="#444"/>

<path d="M2 1164.2v-47.2q0-3.5 3.5-3.5h30.2q3.5 0 3.5 3.5v47.2z" fill="url(#gBB)"/>
<circle cx="20.4" cy="1120.6" r="6.3" fill="#727272"/>
<path d="M16.6 1122.2h7.6l-3.8-4.2z" fill="#2c2c2c"/>
<rect x="6.2" y="1135" width="28.8" height="25" rx="2.5" fill="#ff0000"/>
<path d="M44.7 1164.2v-47.2q0-3.5 3.5-3.5h118.4q3.5 0 3.5 3.5v47.2z" fill="#222" stroke="#161616" stroke-width="1.2"/>
<rect x="48.8" y="1117.2" width="117.1" height="30.6" rx="2.5" fill="#c48a8a" stroke="#999" stroke-opacity="0.5" stroke-width="0.8"/>
<text x="107.4" y="1160.0" font-size="9.4" fill="#fff" text-anchor="middle" textLength="17.5" lengthAdjust="spacingAndGlyphs" font-weight="bold">20%</text>
<path d="M171.87 1164.2v-47.2q0-3.5 3.5-3.5h118.4q3.5 0 3.5 3.5v47.2z" fill="url(#gBB)"/>
<rect x="176.0" y="1117.2" width="117.1" height="30.6" rx="2.5" fill="#c06464" stroke="#555" stroke-opacity="0.5" stroke-width="0.8"/>
<text x="234.6" y="1160.0" font-size="9.4" fill="#303030" text-anchor="middle" textLength="17.5" lengthAdjust="spacingAndGlyphs">40%</text>
<path d="M299.04 1164.2v-47.2q0-3.5 3.5-3.5h118.4q3.5 0 3.5 3.5v47.2z" fill="url(#gBB)"/>
<rect x="303.1" y="1117.2" width="117.1" height="30.6" rx="2.5" fill="#c24c4a" stroke="#555" stroke-opacity="0.5" stroke-width="0.8"/>
<text x="361.7" y="1160.0" font-size="9.4" fill="#303030" text-anchor="middle" textLength="17.5" lengthAdjust="spacingAndGlyphs">60%</text>
<path d="M426.21 1164.2v-47.2q0-3.5 3.5-3.5h118.4q3.5 0 3.5 3.5v47.2z" fill="url(#gBB)"/>
<rect x="430.3" y="1117.2" width="117.1" height="30.6" rx="2.5" fill="#c22f2d" stroke="#555" stroke-opacity="0.5" stroke-width="0.8"/>
<text x="488.9" y="1160.0" font-size="9.4" fill="#303030" text-anchor="middle" textLength="17.5" lengthAdjust="spacingAndGlyphs">80%</text>
<path d="M553.38 1164.2v-47.2q0-3.5 3.5-3.5h118.4q3.5 0 3.5 3.5v47.2z" fill="url(#gBB)"/>
<rect x="557.5" y="1117.2" width="117.1" height="30.6" rx="2.5" fill="#bf0500" stroke="#555" stroke-opacity="0.5" stroke-width="0.8"/>
<text x="616.1" y="1160.0" font-size="9.4" fill="#303030" text-anchor="middle" textLength="22.5" lengthAdjust="spacingAndGlyphs">100%</text>
<rect x="1649" y="1113" width="40.200000000000045" height="15.299999999999955" rx="2.5" fill="url(#gBB2)"/>
<circle cx="1669" cy="1120" r="5.8" fill="#858585"/>
<path d="M1665.4 1121.8h7.2l-3.6-4z" fill="#3a3a3a"/>
<rect x="1649" y="1129.3" width="40.200000000000045" height="34.90000000000009" rx="2.5" fill="url(#gBB2)"/>
<rect x="1657" y="1135.2" width="23.4" height="22.6" rx="3.5" fill="#a8a8a8" stroke="#2a2a2a" stroke-width="1.8"/>
<rect x="1663.2" y="1141" width="11" height="11" fill="#0a0a0a"/>
<rect x="1690.2" y="1113" width="37.69999999999982" height="25" rx="2.5" fill="url(#gBB2)"/>
<circle cx="1709.0" cy="1125.6" r="8.6" fill="url(#gBC)"/>
<rect x="1728.6" y="1113" width="37.40000000000009" height="25" rx="2.5" fill="url(#gBB2)"/>
<circle cx="1747.2" cy="1125.6" r="8.6" fill="url(#gBC)"/>
<rect x="1766.7" y="1113" width="36.399999999999864" height="25" rx="2.5" fill="url(#gBB2)"/>
<circle cx="1784.8" cy="1125.6" r="8.6" fill="url(#gBC)"/>
<rect x="1803.8" y="1113" width="36.799999999999955" height="25" rx="2.5" fill="url(#gBB2)"/>
<circle cx="1822.1" cy="1125.6" r="8.6" fill="url(#gBC)"/>
<rect x="1841.3" y="1113" width="37.0" height="25" rx="2.5" fill="url(#gBB2)"/>
<circle cx="1859.8" cy="1125.6" r="8.6" fill="url(#gBC)"/>
<rect x="1706.0" y="1122.6" width="6" height="6" fill="#333"/>
<path d="M1744.7 1121.6v8l6.4-4z" fill="#333"/>
<text x="1784.8" y="1128.8" font-size="9" fill="#2a2a2a" text-anchor="middle" textLength="11.0" lengthAdjust="spacingAndGlyphs" font-weight="bold">[··]</text>
<text x="1822.1" y="1129.6" font-size="13" fill="#333" text-anchor="middle" textLength="12.0" lengthAdjust="spacingAndGlyphs" font-weight="bold">∞</text>
<path d="M1855.8 1124.6a4.2 4.2 0 0 1 7-2.4M1863.8 1126.6a4.2 4.2 0 0 1 -7 2.4" fill="none" stroke="#333" stroke-width="1.7"/>
<path d="M1861.0 1122.9l3.6 0.6l-0.3-3.6z M1858.5 1128.3l-3.6-0.6l0.3 3.6z" fill="#333"/>
<circle cx="1898.4" cy="1125.6" r="9" fill="#2c2c2c"/>
<rect x="1690.2" y="1139" width="113.39999999999986" height="25.200000000000045" rx="2.5" fill="url(#gBB2)"/>
<rect x="1804.4" y="1139" width="113.59999999999991" height="25.200000000000045" rx="2.5" fill="url(#gBB2)"/>
<circle cx="1715.6" cy="1151.6" r="7.6" fill="url(#gBC)"/>
<circle cx="1893.4" cy="1151.6" r="7.6" fill="url(#gBC)"/>
<path d="M1715.2 1148l-3.4 3.6l3.4 3.6M1719.4 1148l-3.4 3.6l3.4 3.6" fill="none" stroke="#333" stroke-width="1.1"/>
<path d="M1889.6 1148l3.4 3.6l-3.4 3.6M1893.8 1148l3.4 3.6l-3.4 3.6" fill="none" stroke="#333" stroke-width="1.1"/>
<text x="1738.0" y="1158.3" font-size="17.8" fill="#2e2e2e" textLength="42.0" lengthAdjust="spacingAndGlyphs">Back</text>
<text x="1827.4" y="1158.3" font-size="17.8" fill="#2e2e2e" textLength="43.0" lengthAdjust="spacingAndGlyphs">Next</text>
<rect x="0" y="0" width="1" height="1166" fill="#6a6a6a"/>
</svg>
</body></html>
